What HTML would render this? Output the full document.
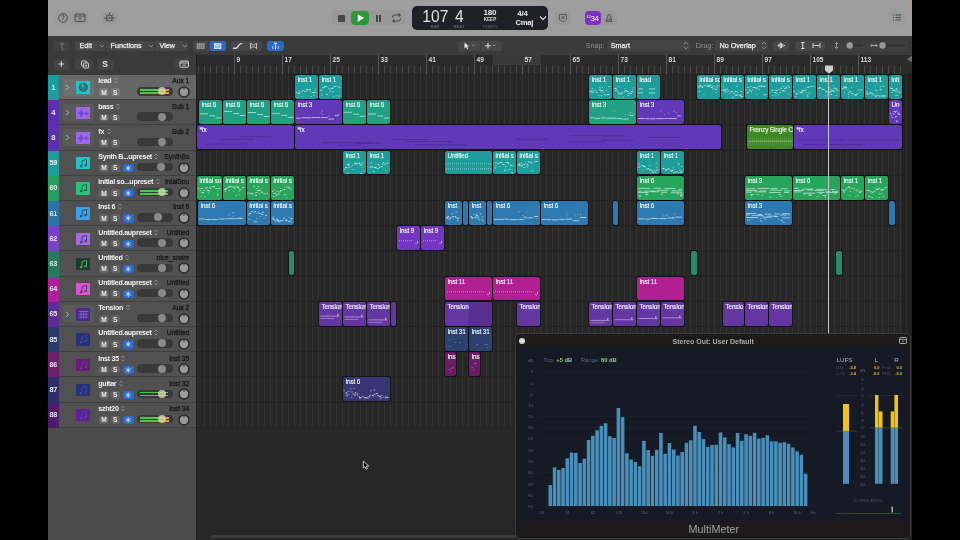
<!DOCTYPE html><html><head><meta charset="utf-8"><style>
*{margin:0;padding:0;box-sizing:border-box}
html,body{width:960px;height:540px;overflow:hidden;background:#000;font-family:"Liberation Sans", sans-serif}
.a{position:absolute}
.t{position:absolute;white-space:nowrap;line-height:1}
.reg{position:absolute;border-radius:2px;overflow:hidden;box-shadow:0 0 0 1px rgba(0,0,0,.5)}
.rl{position:absolute;left:2.4px;top:2.2px;font-size:6.4px;color:#f4f8f8;-webkit-text-stroke:0.12px #f4f8f8;letter-spacing:-0.12px;white-space:nowrap;line-height:1}
</style></head><body><div style="position:absolute;left:0;top:0;width:960px;height:540px;overflow:hidden;will-change:transform">

<div class="a" style="left:48px;top:0;width:864px;height:36px;background:#9e9e9e"></div>
<div class="a" style="left:906.5px;top:2.5px;width:3.2px;height:3.2px;border-radius:2px;background:#e8962a"></div>
<div class="a" style="left:54.5px;top:10.5px;width:33.0px;height:14.0px;background:#9a9a9a;border-radius:4px"></div>
<svg class="a" style="left:54px;top:10px" width="34" height="15" viewBox="0 0 34 15"><circle cx="9" cy="8" r="4.3" fill="none" stroke="#4a4a4a" stroke-width="1"/><text x="9" y="10.4" font-size="6.4" font-weight="bold" text-anchor="middle" fill="#4a4a4a" font-family="Liberation Sans">?</text><rect x="21" y="4" width="10" height="7.5" rx="1" fill="none" stroke="#4a4a4a" stroke-width="1"/><line x1="21" y1="6" x2="31" y2="6" stroke="#4a4a4a"/><path d="M24.5 8.5h3M26 7v3" stroke="#4a4a4a" stroke-width=".9"/></svg>
<div class="a" style="left:102px;top:10.5px;width:16px;height:14.0px;background:#9a9a9a;border-radius:4px"></div>
<svg class="a" style="left:102px;top:10px" width="16" height="15" viewBox="0 0 16 15"><circle cx="7.4" cy="8" r="3" fill="none" stroke="#4a4a4a" stroke-width="1"/><path d="M2.2 8h10.4M7.4 3v1.6M3.9 4.6l1 1M10.9 4.6l-1 1M3.9 11.4l1-1M10.9 11.4l-1-1" stroke="#4a4a4a" stroke-width="1" stroke-linecap="round"/></svg>
<div class="a" style="left:331.5px;top:10px;width:74.5px;height:15px;background:#989898;border-radius:5px"></div>
<div class="a" style="left:338px;top:15px;width:6.5px;height:6.5px;background:#444;border-radius:1px"></div>
<div class="a" style="left:351px;top:11px;width:18px;height:13.5px;background:#2f9a35;border-radius:4px"></div>
<svg class="a" style="left:351px;top:11px" width="18" height="14" viewBox="0 0 18 14"><path d="M6.8 3.3v7.4l6.2-3.7z" fill="#fff"/></svg>
<div class="a" style="left:375.8px;top:15px;width:1.8px;height:6.5px;background:#444"></div><div class="a" style="left:379px;top:15px;width:1.8px;height:6.5px;background:#444"></div>
<svg class="a" style="left:390px;top:12px" width="13" height="12" viewBox="0 0 13 12"><path d="M2.5 5.5a2.5 2.5 0 0 1 2.5-2.5h5M8.5 1.5l1.7 1.5-1.7 1.5M10.5 6.5a2.5 2.5 0 0 1-2.5 2.5h-5M4.5 10.5l-1.7-1.5 1.7-1.5" fill="none" stroke="#474747" stroke-width="1.1"/></svg>
<div class="a" style="left:412px;top:6px;width:135.5px;height:24px;background:#1e2127;border-radius:5px"></div>
<div class="t" style="left:422.3px;top:9px;font-size:15.6px;color:#dfe2e6">107</div>
<div class="t" style="left:455px;top:9px;font-size:15.6px;color:#dfe2e6">4</div>
<div class="t" style="left:428px;width:14px;text-align:center;top:24.6px;font-size:4.2px;color:#5e6268;font-weight:bold">BAR</div>
<div class="t" style="left:452px;width:14px;text-align:center;top:24.6px;font-size:4.2px;color:#5e6268;font-weight:bold">BEAT</div>
<div class="t" style="left:483.6px;top:9.4px;font-size:8px;color:#eaeaea;font-weight:bold;letter-spacing:-0.2px">180</div>
<div class="t" style="left:480px;width:20px;text-align:center;top:18.2px;font-size:4.6px;color:#d8d8d8;font-weight:bold">KEEP</div>
<div class="t" style="left:480px;width:20px;text-align:center;top:24.6px;font-size:4.3px;color:#50545a;font-weight:bold">TEMPO</div>
<div class="t" style="left:517.3px;top:9.6px;font-size:7.8px;color:#eaeaea;font-weight:bold;letter-spacing:-0.2px">4/4</div>
<div class="t" style="left:515.6px;top:19.3px;font-size:7.6px;color:#f0f0f0;font-weight:bold;letter-spacing:-0.3px">Cmaj</div>
<svg class="a" style="left:539px;top:15px" width="8" height="6" viewBox="0 0 8 6"><path d="M1 1.5l3 3 3-3" fill="none" stroke="#ddd" stroke-width="1.1"/></svg>
<div class="a" style="left:555px;top:11px;width:16px;height:14px;background:#989898;border-radius:4px"></div>
<svg class="a" style="left:555px;top:11px" width="16" height="14" viewBox="0 0 16 14"><path d="M4.5 3.5h7v5l-3.5 2.5-3.5-2.5z" fill="none" stroke="#555" stroke-width=".9"/><path d="M6.5 5l3 3M9.5 5l-3 3" stroke="#555" stroke-width=".9"/></svg>
<div class="a" style="left:584.5px;top:11px;width:32.5px;height:14px;background:#989898;border-radius:4px"></div>
<div class="a" style="left:584.5px;top:11px;width:16.5px;height:14px;background:#7f30c0;border-radius:4px"></div>
<div class="t" style="left:586.5px;top:14.5px;font-size:8px;color:#fff;letter-spacing:-0.6px"><span style="font-size:4px;vertical-align:top;letter-spacing:-.2px">12</span>34</div>
<svg class="a" style="left:601px;top:11px" width="16" height="14" viewBox="0 0 16 14"><path d="M5 10.5l2.3-7h1.4l2.3 7z" fill="none" stroke="#505050" stroke-width=".9"/><path d="M8 9l3-3.5M5.5 9h5" stroke="#505050" stroke-width=".9"/></svg>
<div class="a" style="left:889px;top:10.5px;width:15.5px;height:14.0px;background:#9a9a9a;border-radius:4px"></div>
<svg class="a" style="left:889px;top:10px" width="16" height="15" viewBox="0 0 16 15"><path d="M4 5h1M4 7.5h1M4 10h1M6.5 5h5.5M6.5 7.5h5.5M6.5 10h5.5" stroke="#4a4a4a" stroke-width="1"/></svg>
<div class="a" style="left:48px;top:36px;width:864px;height:18.5px;background:#3b3b3b"></div>
<div class="a" style="left:54px;top:40.5px;width:16px;height:10.0px;background:#424242;border-radius:3px"></div>
<svg class="a" style="left:54px;top:40px" width="16" height="11" viewBox="0 0 16 11"><path d="M8 9V3M5.8 5L8 2.6 10.2 5M8 9l1.5.8" fill="none" stroke="#7a7a7a" stroke-width="1"/></svg>
<div class="a" style="left:75px;top:40.5px;width:113px;height:10.0px;background:#474747;border-radius:3px"></div>
<div class="a" style="left:105px;top:40.5px;width:1px;height:10px;background:#3b3b3b"></div><div class="a" style="left:154px;top:40.5px;width:1px;height:10px;background:#3b3b3b"></div>
<div class="t" style="left:79.5px;top:42.3px;font-size:7.2px;color:#ececec;-webkit-text-stroke:0.25px #ececec">Edit</div>
<div class="t" style="left:110.5px;top:42.3px;font-size:7.2px;color:#ececec;-webkit-text-stroke:0.25px #ececec">Functions</div>
<div class="t" style="left:159.5px;top:42.3px;font-size:7.2px;color:#ececec;-webkit-text-stroke:0.25px #ececec">View</div>
<svg class="a" style="left:98.5px;top:44px" width="6" height="4" viewBox="0 0 6 4"><path d="M1 1l2 2 2-2" fill="none" stroke="#9a9a9a" stroke-width=".8"/></svg>
<svg class="a" style="left:147.5px;top:44px" width="6" height="4" viewBox="0 0 6 4"><path d="M1 1l2 2 2-2" fill="none" stroke="#9a9a9a" stroke-width=".8"/></svg>
<svg class="a" style="left:182px;top:44px" width="6" height="4" viewBox="0 0 6 4"><path d="M1 1l2 2 2-2" fill="none" stroke="#9a9a9a" stroke-width=".8"/></svg>
<div class="a" style="left:193px;top:40.5px;width:33px;height:10.0px;background:#474747;border-radius:3px"></div>
<div class="a" style="left:210px;top:40.5px;width:16px;height:10.0px;background:#2c68c8;border-radius:3px"></div>
<svg class="a" style="left:193px;top:40px" width="33" height="11" viewBox="0 0 33 11"><rect x="3.8" y="3.2" width="7.8" height="5.7" fill="#a8a8a8"/><path d="M3.8 5.1h7.8M3.8 7h7.8M5.75 3.2v5.7M7.7 3.2v5.7M9.65 3.2v5.7" stroke="#474747" stroke-width=".45"/><rect x="21" y="3.2" width="7.3" height="5.8" fill="#e8eef8"/><path d="M21 6.2h7.3" stroke="#2c68c8" stroke-width=".6"/><path d="M22.3 4.7h1.5M24.8 4.7h2.2M22 7.7h5" stroke="#2c68c8" stroke-width=".5"/></svg>
<div class="a" style="left:231px;top:40.5px;width:31px;height:10.0px;background:#474747;border-radius:3px"></div>
<svg class="a" style="left:231px;top:40px" width="31" height="11" viewBox="0 0 31 11"><path d="M2.5 8.3h2.3c1.6 0 2.5-3.3 4.3-4.3.5-.3 1.2-.4 1.8-.4" fill="none" stroke="#d8d8d8" stroke-width="1.4" stroke-linecap="round"/><path d="M19.5 3.2c2 2.4 4 2.4 6 0M19.5 8.6c2-2.4 4-2.4 6 0M19.5 3v5.6M25.5 3v5.6" fill="none" stroke="#d0d0d0" stroke-width=".9"/></svg>
<div class="a" style="left:267px;top:40.5px;width:17px;height:10.0px;background:#2c68c8;border-radius:3px"></div>
<svg class="a" style="left:267px;top:40px" width="17" height="11" viewBox="0 0 17 11"><path d="M6.8 2.8h3.4L8.5 5z" fill="#fff"/><path d="M8.5 4.5v5M6.2 5.8c-.8.9-.8 2.3 0 3.2M10.8 5.8c.8.9.8 2.3 0 3.2" fill="none" stroke="#fff" stroke-width=".8"/></svg>
<div class="a" style="left:458px;top:40.5px;width:43.5px;height:10.0px;background:#474747;border-radius:3px"></div>
<div class="a" style="left:479.5px;top:40.5px;width:1px;height:10px;background:#3b3b3b"></div>
<svg class="a" style="left:458px;top:40px" width="44" height="11" viewBox="0 0 44 11"><path d="M6.5 2.5v6l1.5-1.5 1.2 2.3 1-.5-1.2-2.2h2.2z" fill="#e8e8e8"/><path d="M14 4.5l1.5 1.5 1.5-1.5M34.5 4.5l1.5 1.5 1.5-1.5" fill="none" stroke="#9a9a9a" stroke-width=".8"/><path d="M30 3v5.5M27.2 5.7h5.6" stroke="#d8d8d8" stroke-width="1.1"/></svg>
<div class="t" style="left:585.8px;top:42.3px;font-size:7.2px;color:#8e8e8e">Snap:</div>
<div class="a" style="left:606.5px;top:40px;width:83.5px;height:11px;background:#444444;border-radius:3px"></div>
<div class="t" style="left:610.8px;top:42.3px;font-size:7.2px;color:#ececec;-webkit-text-stroke:0.25px #ececec">Smart</div>
<div class="t" style="left:695.8px;top:42.3px;font-size:7.2px;color:#8e8e8e">Drag:</div>
<div class="a" style="left:715.3px;top:40px;width:53.0px;height:11px;background:#444444;border-radius:3px"></div>
<div class="t" style="left:719.5px;top:42.3px;font-size:7.2px;color:#ececec;-webkit-text-stroke:0.25px #ececec">No Overlap</div>
<svg class="a" style="left:682.5px;top:41px" width="6" height="9" viewBox="0 0 6 9"><path d="M1 3.2l2-2 2 2M1 5.8l2 2 2-2" fill="none" stroke="#a8a8a8" stroke-width=".8"/></svg>
<svg class="a" style="left:760.5px;top:41px" width="6" height="9" viewBox="0 0 6 9"><path d="M1 3.2l2-2 2 2M1 5.8l2 2 2-2" fill="none" stroke="#a8a8a8" stroke-width=".8"/></svg>
<div class="a" style="left:773px;top:40.5px;width:15.5px;height:10.0px;background:#474747;border-radius:3px"></div>
<svg class="a" style="left:773px;top:40px" width="16" height="11" viewBox="0 0 16 11"><path d="M4.5 5.5h1M6 4v3M7.3 2.5v6M8.6 3v5M9.9 4v3M11 5.5h1" stroke="#e0e0e0" stroke-width="1"/></svg>
<div class="a" style="left:794.5px;top:40.5px;width:30.5px;height:10.0px;background:#474747;border-radius:3px"></div>
<svg class="a" style="left:794px;top:40px" width="31" height="11" viewBox="0 0 31 11"><path d="M7 2.5h3.5M8.75 2.5v6M7 8.5h3.5" stroke="#e0e0e0" stroke-width="1"/><path d="M19 3v5M26 3v5M19.5 5.5h6" stroke="#d0d0d0" stroke-width="1"/></svg>
<div class="a" style="left:830.5px;top:40.5px;width:77.5px;height:10.0px;background:#3f3f3f;border-radius:3px"></div>
<div class="a" style="left:865px;top:40.5px;width:1px;height:10px;background:#383838"></div>
<svg class="a" style="left:830px;top:40px" width="78" height="11" viewBox="0 0 78 11"><path d="M6.5 2.5v6M5 4l1.5-1.5L8 4M5 7l1.5 1.5L8 7" fill="none" stroke="#aaa" stroke-width=".8"/><line x1="16" y1="5.5" x2="33" y2="5.5" stroke="#2e2e2e" stroke-width="1.5"/><circle cx="19.7" cy="5.5" r="3.2" fill="#9a9a9a"/><path d="M41 5.5h6M42.3 4l-1.5 1.5 1.5 1.5M45.7 4l1.5 1.5-1.5 1.5" fill="none" stroke="#bbb" stroke-width=".8"/><line x1="50" y1="5.5" x2="75" y2="5.5" stroke="#2e2e2e" stroke-width="1.5"/><circle cx="52.5" cy="5.5" r="3.2" fill="#9a9a9a"/></svg>
<div class="a" style="left:48px;top:54.5px;width:148px;height:20.5px;background:#3b3b3b"></div>
<div class="a" style="left:53.5px;top:59px;width:15.5px;height:10.5px;background:#444444;border-radius:3px"></div>
<div class="a" style="left:75.3px;top:59px;width:16.400000000000006px;height:10.5px;background:#444444;border-radius:3px"></div>
<div class="a" style="left:97.7px;top:59px;width:16.299999999999997px;height:10.5px;background:#444444;border-radius:3px"></div>
<div class="a" style="left:174.6px;top:59px;width:14.800000000000011px;height:10.5px;background:#444444;border-radius:3px"></div>
<svg class="a" style="left:53px;top:58px" width="140" height="12" viewBox="0 0 140 12"><path d="M8.3 3.2v5.6M5.5 6h5.6" stroke="#ddd" stroke-width="1.1"/><rect x="28.5" y="3" width="5" height="5" rx="1" fill="none" stroke="#ddd" stroke-width=".9"/><rect x="30.5" y="5" width="5" height="5" rx="1" fill="#444" stroke="#ddd" stroke-width=".9"/><path d="M33 6.3v2.6M31.7 7.6h2.6" stroke="#ddd" stroke-width=".7"/><rect x="127" y="3.2" width="8.5" height="6" rx=".8" fill="none" stroke="#ddd" stroke-width=".9"/><path d="M127 5h8.5M129.7 7.2h3" stroke="#ddd" stroke-width=".8"/></svg>
<div class="t" style="left:102.3px;top:60.3px;font-size:8.4px;font-weight:bold;color:#e8e8e8">S</div>
<div class="a" style="left:48px;top:75px;width:148px;height:465px;background:#4c4c4c"></div>
<div class="a" style="left:48px;top:75.00px;width:148px;height:25.20px;background:#666666"></div>
<div class="a" style="left:58.5px;top:99.20px;width:137.5px;height:1px;background:#404040"></div>
<div class="a" style="left:48px;top:75.00px;width:10.5px;height:25.20px;background:#199c9c"></div>
<div class="t" style="left:48px;width:10.5px;text-align:center;top:83.60px;font-size:7.6px;font-weight:bold;color:#e8e8e8;letter-spacing:-0.3px">1</div>
<div class="a" style="left:63px;top:78.5px;width:30.5px;height:17.0px;background:#6e6e6e;border-radius:3px"></div>
<svg class="a" style="left:65px;top:84.00px" width="5" height="7" viewBox="0 0 5 7"><path d="M1.2 1l2.5 2.5-2.5 2.5" fill="none" stroke="#cfcfcf" stroke-width=".8"/></svg>
<div class="a" style="left:75.8px;top:81.30px;width:14.6px;height:12.6px;background:#1fc3c8;border-radius:1px"></div>
<svg class="a" style="left:75.8px;top:81.30px" width="15" height="13" viewBox="0 0 15 13"><circle cx="7.3" cy="6.3" r="4.2" fill="#2f7a7e" stroke="#24585c" stroke-width=".8"/><path d="M7.3 6.3L6.2 3" stroke="#7fd8dc" stroke-width=".9"/></svg>
<div class="t" style="left:98.3px;top:77.30px;font-size:7.1px;color:#f4f4f4;font-weight:bold;letter-spacing:-0.28px">lead<svg style="margin-left:2.5px;vertical-align:-1.3px" width="4" height="7" viewBox="0 0 4 7"><path d="M0.6 2.6L2 1.2l1.4 1.4M0.6 4.4L2 5.8l1.4-1.4" fill="none" stroke="#bdbdbd" stroke-width=".7"/></svg></div>
<span id="nm0"></span>
<div class="t" style="right:770.7px;top:78.30px;font-size:6.8px;color:#1a1a1a;-webkit-text-stroke:0.3px #1a1a1a;letter-spacing:-0.05px">Aux 1</div>
<div class="a" style="left:99.2px;top:88.4px;width:9.799999999999997px;height:7.799999999999997px;background:#787878;border-radius:2px"></div>
<div class="a" style="left:110.5px;top:88.4px;width:9.299999999999997px;height:7.799999999999997px;background:#787878;border-radius:2px"></div>
<div class="t" style="left:99.2px;width:9.8px;text-align:center;top:89.70px;font-size:6.6px;font-weight:bold;color:#ececec">M</div>
<div class="t" style="left:110.5px;width:9.3px;text-align:center;top:89.70px;font-size:6.6px;font-weight:bold;color:#ececec">S</div>
<div class="a" style="left:136.7px;top:87.10px;width:36.2px;height:8.6px;border-radius:4.3px;background:#393939"></div>
<div class="a" style="left:140px;top:89.10px;width:28px;height:1.9px;background:#48cc44"></div>
<div class="a" style="left:140px;top:92.10px;width:28px;height:1.9px;background:#48cc44"></div>
<div class="a" style="left:160px;top:89.10px;width:8.5px;height:1.9px;background:#e8a020"></div>
<div class="a" style="left:160px;top:92.10px;width:8.5px;height:1.9px;background:#e8a020"></div>
<div class="a" style="left:157.50px;top:87.30px;width:8.2px;height:8.2px;border-radius:50%;background:#d8d8b0;opacity:0.8"></div>
<svg class="a" style="left:176.6px;top:84.90px" width="14" height="14" viewBox="0 0 14 14"><circle cx="7" cy="7" r="5" fill="#9a9a9a" stroke="#2a2a2a" stroke-width="1.6"/><path d="M7 3v1.8" stroke="#2a2a2a" stroke-width="1"/></svg>
<div class="a" style="left:48px;top:100.20px;width:148px;height:25.20px;background:#515151"></div>
<div class="a" style="left:58.5px;top:124.40px;width:137.5px;height:1px;background:#404040"></div>
<div class="a" style="left:48px;top:100.20px;width:10.5px;height:25.20px;background:#5c2fae"></div>
<div class="t" style="left:48px;width:10.5px;text-align:center;top:108.80px;font-size:7.6px;font-weight:bold;color:#e8e8e8;letter-spacing:-0.3px">4</div>
<div class="a" style="left:63px;top:103.7px;width:30.5px;height:17.0px;background:#5a5a5a;border-radius:3px"></div>
<svg class="a" style="left:65px;top:109.20px" width="5" height="7" viewBox="0 0 5 7"><path d="M1.2 1l2.5 2.5-2.5 2.5" fill="none" stroke="#cfcfcf" stroke-width=".8"/></svg>
<div class="a" style="left:75.8px;top:106.50px;width:14.6px;height:12.6px;background:#9a6ae8;border-radius:1px"></div>
<svg class="a" style="left:75.8px;top:106.50px" width="15" height="13" viewBox="0 0 15 13"><path d="M1.5 6.3h11.5" stroke="#7040c8" stroke-width=".7"/><path d="M5 2.3l2.6 4-2.6 4-2.6-4z M10.5 3.3l1.6 3-1.6 3-1.6-3z" fill="#7444cc" fill-opacity=".85"/></svg>
<div class="t" style="left:98.3px;top:102.50px;font-size:7.1px;color:#f4f4f4;font-weight:bold;letter-spacing:-0.28px">bass<svg style="margin-left:2.5px;vertical-align:-1.3px" width="4" height="7" viewBox="0 0 4 7"><path d="M0.6 2.6L2 1.2l1.4 1.4M0.6 4.4L2 5.8l1.4-1.4" fill="none" stroke="#bdbdbd" stroke-width=".7"/></svg></div>
<span id="nm1"></span>
<div class="t" style="right:770.7px;top:103.50px;font-size:6.8px;color:#1a1a1a;-webkit-text-stroke:0.3px #1a1a1a;letter-spacing:-0.05px">Sub 1</div>
<div class="a" style="left:99.2px;top:113.60000000000001px;width:9.799999999999997px;height:7.799999999999997px;background:#636363;border-radius:2px"></div>
<div class="a" style="left:110.5px;top:113.60000000000001px;width:9.299999999999997px;height:7.799999999999997px;background:#636363;border-radius:2px"></div>
<div class="t" style="left:99.2px;width:9.8px;text-align:center;top:114.90px;font-size:6.6px;font-weight:bold;color:#ececec">M</div>
<div class="t" style="left:110.5px;width:9.3px;text-align:center;top:114.90px;font-size:6.6px;font-weight:bold;color:#ececec">S</div>
<div class="a" style="left:136.7px;top:112.30px;width:36.2px;height:8.6px;border-radius:4.3px;background:#393939"></div>
<div class="a" style="left:157.50px;top:112.50px;width:8.2px;height:8.2px;border-radius:50%;background:#8a8a8a;opacity:1"></div>
<div class="a" style="left:48px;top:125.40px;width:148px;height:25.20px;background:#515151"></div>
<div class="a" style="left:58.5px;top:149.60px;width:137.5px;height:1px;background:#404040"></div>
<div class="a" style="left:48px;top:125.40px;width:10.5px;height:25.20px;background:#5c2fae"></div>
<div class="t" style="left:48px;width:10.5px;text-align:center;top:134.00px;font-size:7.6px;font-weight:bold;color:#e8e8e8;letter-spacing:-0.3px">8</div>
<div class="a" style="left:63px;top:128.9px;width:30.5px;height:17.0px;background:#5a5a5a;border-radius:3px"></div>
<svg class="a" style="left:65px;top:134.40px" width="5" height="7" viewBox="0 0 5 7"><path d="M1.2 1l2.5 2.5-2.5 2.5" fill="none" stroke="#cfcfcf" stroke-width=".8"/></svg>
<div class="a" style="left:75.8px;top:131.70px;width:14.6px;height:12.6px;background:#9a6ae8;border-radius:1px"></div>
<svg class="a" style="left:75.8px;top:131.70px" width="15" height="13" viewBox="0 0 15 13"><path d="M1.5 6.3h11.5" stroke="#7040c8" stroke-width=".7"/><path d="M5 2.3l2.6 4-2.6 4-2.6-4z M10.5 3.3l1.6 3-1.6 3-1.6-3z" fill="#7444cc" fill-opacity=".85"/></svg>
<div class="t" style="left:98.3px;top:127.70px;font-size:7.1px;color:#f4f4f4;font-weight:bold;letter-spacing:-0.28px">fx<svg style="margin-left:2.5px;vertical-align:-1.3px" width="4" height="7" viewBox="0 0 4 7"><path d="M0.6 2.6L2 1.2l1.4 1.4M0.6 4.4L2 5.8l1.4-1.4" fill="none" stroke="#bdbdbd" stroke-width=".7"/></svg></div>
<span id="nm2"></span>
<div class="t" style="right:770.7px;top:128.70px;font-size:6.8px;color:#1a1a1a;-webkit-text-stroke:0.3px #1a1a1a;letter-spacing:-0.05px">Sub 2</div>
<div class="a" style="left:99.2px;top:138.8px;width:9.799999999999997px;height:7.799999999999983px;background:#636363;border-radius:2px"></div>
<div class="a" style="left:110.5px;top:138.8px;width:9.299999999999997px;height:7.799999999999983px;background:#636363;border-radius:2px"></div>
<div class="t" style="left:99.2px;width:9.8px;text-align:center;top:140.10px;font-size:6.6px;font-weight:bold;color:#ececec">M</div>
<div class="t" style="left:110.5px;width:9.3px;text-align:center;top:140.10px;font-size:6.6px;font-weight:bold;color:#ececec">S</div>
<div class="a" style="left:136.7px;top:137.50px;width:36.2px;height:8.6px;border-radius:4.3px;background:#393939"></div>
<div class="a" style="left:157.50px;top:137.70px;width:8.2px;height:8.2px;border-radius:50%;background:#8a8a8a;opacity:1"></div>
<div class="a" style="left:48px;top:150.60px;width:148px;height:25.20px;background:#515151"></div>
<div class="a" style="left:58.5px;top:174.80px;width:137.5px;height:1px;background:#404040"></div>
<div class="a" style="left:48px;top:150.60px;width:10.5px;height:25.20px;background:#199c9c"></div>
<div class="t" style="left:48px;width:10.5px;text-align:center;top:159.20px;font-size:7.2px;font-weight:bold;color:#e8e8e8;letter-spacing:-0.3px">59</div>
<div class="a" style="left:75.8px;top:156.90px;width:14.6px;height:12.6px;background:#1fc3c8;border-radius:1px"></div>
<svg class="a" style="left:75.8px;top:156.90px" width="15" height="13" viewBox="0 0 15 13"><path d="M6 9.2V3.5l4.5-1v5.5" fill="none" stroke="#183a3a" stroke-width=".9" stroke-opacity=".8"/><ellipse cx="5" cy="9.3" rx="1.3" ry="1" fill="#183a3a" fill-opacity=".8"/><ellipse cx="9.5" cy="8.3" rx="1.3" ry="1" fill="#183a3a" fill-opacity=".8"/></svg>
<div class="t" style="left:98.3px;top:152.90px;font-size:7.1px;color:#f4f4f4;font-weight:bold;letter-spacing:-0.28px">Synth B...upreset<svg style="margin-left:2.5px;vertical-align:-1.3px" width="4" height="7" viewBox="0 0 4 7"><path d="M0.6 2.6L2 1.2l1.4 1.4M0.6 4.4L2 5.8l1.4-1.4" fill="none" stroke="#bdbdbd" stroke-width=".7"/></svg></div>
<span id="nm3"></span>
<div class="t" style="right:770.7px;top:153.90px;font-size:6.8px;color:#1a1a1a;-webkit-text-stroke:0.3px #1a1a1a;letter-spacing:-0.05px">SynthBs</div>
<div class="a" style="left:99.2px;top:164.0px;width:9.799999999999997px;height:7.799999999999983px;background:#636363;border-radius:2px"></div>
<div class="a" style="left:110.5px;top:164.0px;width:9.299999999999997px;height:7.799999999999983px;background:#636363;border-radius:2px"></div>
<div class="t" style="left:99.2px;width:9.8px;text-align:center;top:165.30px;font-size:6.6px;font-weight:bold;color:#ececec">M</div>
<div class="t" style="left:110.5px;width:9.3px;text-align:center;top:165.30px;font-size:6.6px;font-weight:bold;color:#ececec">S</div>
<div class="a" style="left:123.2px;top:164.0px;width:10.399999999999991px;height:8.199999999999989px;background:#2a6ad0;border-radius:2px"></div>
<svg class="a" style="left:123.2px;top:164.00px" width="10.4" height="8.2" viewBox="0 0 10.4 8.2"><path d="M5.2 1.3v5.6M2.8 2.7l4.8 2.8M2.8 5.5l4.8-2.8" stroke="#dce8ff" stroke-width=".8"/></svg>
<div class="a" style="left:136.7px;top:162.70px;width:36.2px;height:8.6px;border-radius:4.3px;background:#393939"></div>
<div class="a" style="left:156.60px;top:162.90px;width:8.2px;height:8.2px;border-radius:50%;background:#8a8a8a;opacity:1"></div>
<svg class="a" style="left:176.6px;top:160.50px" width="14" height="14" viewBox="0 0 14 14"><circle cx="7" cy="7" r="5" fill="#9a9a9a" stroke="#2a2a2a" stroke-width="1.6"/><path d="M7 3v1.8" stroke="#2a2a2a" stroke-width="1"/></svg>
<div class="a" style="left:48px;top:175.80px;width:148px;height:25.20px;background:#515151"></div>
<div class="a" style="left:58.5px;top:200.00px;width:137.5px;height:1px;background:#404040"></div>
<div class="a" style="left:48px;top:175.80px;width:10.5px;height:25.20px;background:#26a060"></div>
<div class="t" style="left:48px;width:10.5px;text-align:center;top:184.40px;font-size:7.2px;font-weight:bold;color:#e8e8e8;letter-spacing:-0.3px">60</div>
<div class="a" style="left:75.8px;top:182.10px;width:14.6px;height:12.6px;background:#2ac47a;border-radius:1px"></div>
<svg class="a" style="left:75.8px;top:182.10px" width="15" height="13" viewBox="0 0 15 13"><path d="M6 9.2V3.5l4.5-1v5.5" fill="none" stroke="#183a3a" stroke-width=".9" stroke-opacity=".8"/><ellipse cx="5" cy="9.3" rx="1.3" ry="1" fill="#183a3a" fill-opacity=".8"/><ellipse cx="9.5" cy="8.3" rx="1.3" ry="1" fill="#183a3a" fill-opacity=".8"/></svg>
<div class="t" style="left:98.3px;top:178.10px;font-size:7.1px;color:#f4f4f4;font-weight:bold;letter-spacing:-0.28px">initial so...upreset<svg style="margin-left:2.5px;vertical-align:-1.3px" width="4" height="7" viewBox="0 0 4 7"><path d="M0.6 2.6L2 1.2l1.4 1.4M0.6 4.4L2 5.8l1.4-1.4" fill="none" stroke="#bdbdbd" stroke-width=".7"/></svg></div>
<span id="nm4"></span>
<div class="t" style="right:770.7px;top:179.10px;font-size:6.8px;color:#1a1a1a;-webkit-text-stroke:0.3px #1a1a1a;letter-spacing:-0.05px">intalSou</div>
<div class="a" style="left:99.2px;top:189.20000000000002px;width:9.799999999999997px;height:7.799999999999983px;background:#636363;border-radius:2px"></div>
<div class="a" style="left:110.5px;top:189.20000000000002px;width:9.299999999999997px;height:7.799999999999983px;background:#636363;border-radius:2px"></div>
<div class="t" style="left:99.2px;width:9.8px;text-align:center;top:190.50px;font-size:6.6px;font-weight:bold;color:#ececec">M</div>
<div class="t" style="left:110.5px;width:9.3px;text-align:center;top:190.50px;font-size:6.6px;font-weight:bold;color:#ececec">S</div>
<div class="a" style="left:123.2px;top:189.20000000000002px;width:10.399999999999991px;height:8.199999999999989px;background:#2a6ad0;border-radius:2px"></div>
<svg class="a" style="left:123.2px;top:189.20px" width="10.4" height="8.2" viewBox="0 0 10.4 8.2"><path d="M5.2 1.3v5.6M2.8 2.7l4.8 2.8M2.8 5.5l4.8-2.8" stroke="#dce8ff" stroke-width=".8"/></svg>
<div class="a" style="left:136.7px;top:187.90px;width:36.2px;height:8.6px;border-radius:4.3px;background:#393939"></div>
<div class="a" style="left:140px;top:189.90px;width:28px;height:1.9px;background:#48cc44"></div>
<div class="a" style="left:140px;top:192.90px;width:28px;height:1.9px;background:#48cc44"></div>
<div class="a" style="left:157.50px;top:188.10px;width:8.2px;height:8.2px;border-radius:50%;background:#d8d8b0;opacity:0.8"></div>
<svg class="a" style="left:176.6px;top:185.70px" width="14" height="14" viewBox="0 0 14 14"><circle cx="7" cy="7" r="5" fill="#9a9a9a" stroke="#2a2a2a" stroke-width="1.6"/><path d="M7 3v1.8" stroke="#2a2a2a" stroke-width="1"/></svg>
<div class="a" style="left:48px;top:201.00px;width:148px;height:25.20px;background:#515151"></div>
<div class="a" style="left:58.5px;top:225.20px;width:137.5px;height:1px;background:#404040"></div>
<div class="a" style="left:48px;top:201.00px;width:10.5px;height:25.20px;background:#2b72aa"></div>
<div class="t" style="left:48px;width:10.5px;text-align:center;top:209.60px;font-size:7.2px;font-weight:bold;color:#e8e8e8;letter-spacing:-0.3px">61</div>
<div class="a" style="left:75.8px;top:207.30px;width:14.6px;height:12.6px;background:#3aa0e8;border-radius:1px"></div>
<svg class="a" style="left:75.8px;top:207.30px" width="15" height="13" viewBox="0 0 15 13"><path d="M6 9.2V3.5l4.5-1v5.5" fill="none" stroke="#183a3a" stroke-width=".9" stroke-opacity=".8"/><ellipse cx="5" cy="9.3" rx="1.3" ry="1" fill="#183a3a" fill-opacity=".8"/><ellipse cx="9.5" cy="8.3" rx="1.3" ry="1" fill="#183a3a" fill-opacity=".8"/></svg>
<div class="t" style="left:98.3px;top:203.30px;font-size:7.1px;color:#f4f4f4;font-weight:bold;letter-spacing:-0.28px">Inst 6<svg style="margin-left:2.5px;vertical-align:-1.3px" width="4" height="7" viewBox="0 0 4 7"><path d="M0.6 2.6L2 1.2l1.4 1.4M0.6 4.4L2 5.8l1.4-1.4" fill="none" stroke="#bdbdbd" stroke-width=".7"/></svg></div>
<span id="nm5"></span>
<div class="t" style="right:770.7px;top:204.30px;font-size:6.8px;color:#1a1a1a;-webkit-text-stroke:0.3px #1a1a1a;letter-spacing:-0.05px">Inst 6</div>
<div class="a" style="left:99.2px;top:214.4px;width:9.799999999999997px;height:7.799999999999983px;background:#636363;border-radius:2px"></div>
<div class="a" style="left:110.5px;top:214.4px;width:9.299999999999997px;height:7.799999999999983px;background:#636363;border-radius:2px"></div>
<div class="t" style="left:99.2px;width:9.8px;text-align:center;top:215.70px;font-size:6.6px;font-weight:bold;color:#ececec">M</div>
<div class="t" style="left:110.5px;width:9.3px;text-align:center;top:215.70px;font-size:6.6px;font-weight:bold;color:#ececec">S</div>
<div class="a" style="left:123.2px;top:214.4px;width:10.399999999999991px;height:8.199999999999989px;background:#2a6ad0;border-radius:2px"></div>
<svg class="a" style="left:123.2px;top:214.40px" width="10.4" height="8.2" viewBox="0 0 10.4 8.2"><path d="M5.2 1.3v5.6M2.8 2.7l4.8 2.8M2.8 5.5l4.8-2.8" stroke="#dce8ff" stroke-width=".8"/></svg>
<div class="a" style="left:136.7px;top:213.10px;width:36.2px;height:8.6px;border-radius:4.3px;background:#393939"></div>
<div class="a" style="left:154.20px;top:213.30px;width:8.2px;height:8.2px;border-radius:50%;background:#8a8a8a;opacity:1"></div>
<svg class="a" style="left:176.6px;top:210.90px" width="14" height="14" viewBox="0 0 14 14"><circle cx="7" cy="7" r="5" fill="#9a9a9a" stroke="#2a2a2a" stroke-width="1.6"/><path d="M7 3v1.8" stroke="#2a2a2a" stroke-width="1"/></svg>
<div class="a" style="left:48px;top:226.20px;width:148px;height:25.20px;background:#515151"></div>
<div class="a" style="left:58.5px;top:250.40px;width:137.5px;height:1px;background:#404040"></div>
<div class="a" style="left:48px;top:226.20px;width:10.5px;height:25.20px;background:#7a40c8"></div>
<div class="t" style="left:48px;width:10.5px;text-align:center;top:234.80px;font-size:7.2px;font-weight:bold;color:#e8e8e8;letter-spacing:-0.3px">62</div>
<div class="a" style="left:75.8px;top:232.50px;width:14.6px;height:12.6px;background:#a46ae8;border-radius:1px"></div>
<svg class="a" style="left:75.8px;top:232.50px" width="15" height="13" viewBox="0 0 15 13"><path d="M6 9.2V3.5l4.5-1v5.5" fill="none" stroke="#183a3a" stroke-width=".9" stroke-opacity=".8"/><ellipse cx="5" cy="9.3" rx="1.3" ry="1" fill="#183a3a" fill-opacity=".8"/><ellipse cx="9.5" cy="8.3" rx="1.3" ry="1" fill="#183a3a" fill-opacity=".8"/></svg>
<div class="t" style="left:98.3px;top:228.50px;font-size:7.1px;color:#f4f4f4;font-weight:bold;letter-spacing:-0.28px">Untitled.aupreset<svg style="margin-left:2.5px;vertical-align:-1.3px" width="4" height="7" viewBox="0 0 4 7"><path d="M0.6 2.6L2 1.2l1.4 1.4M0.6 4.4L2 5.8l1.4-1.4" fill="none" stroke="#bdbdbd" stroke-width=".7"/></svg></div>
<span id="nm6"></span>
<div class="t" style="right:770.7px;top:229.50px;font-size:6.8px;color:#1a1a1a;-webkit-text-stroke:0.3px #1a1a1a;letter-spacing:-0.05px">Untitled</div>
<div class="a" style="left:99.2px;top:239.6px;width:9.799999999999997px;height:7.799999999999983px;background:#636363;border-radius:2px"></div>
<div class="a" style="left:110.5px;top:239.6px;width:9.299999999999997px;height:7.799999999999983px;background:#636363;border-radius:2px"></div>
<div class="t" style="left:99.2px;width:9.8px;text-align:center;top:240.90px;font-size:6.6px;font-weight:bold;color:#ececec">M</div>
<div class="t" style="left:110.5px;width:9.3px;text-align:center;top:240.90px;font-size:6.6px;font-weight:bold;color:#ececec">S</div>
<div class="a" style="left:123.2px;top:239.6px;width:10.399999999999991px;height:8.199999999999989px;background:#2a6ad0;border-radius:2px"></div>
<svg class="a" style="left:123.2px;top:239.60px" width="10.4" height="8.2" viewBox="0 0 10.4 8.2"><path d="M5.2 1.3v5.6M2.8 2.7l4.8 2.8M2.8 5.5l4.8-2.8" stroke="#dce8ff" stroke-width=".8"/></svg>
<div class="a" style="left:136.7px;top:238.30px;width:36.2px;height:8.6px;border-radius:4.3px;background:#393939"></div>
<div class="a" style="left:157.50px;top:238.50px;width:8.2px;height:8.2px;border-radius:50%;background:#8a8a8a;opacity:1"></div>
<svg class="a" style="left:176.6px;top:236.10px" width="14" height="14" viewBox="0 0 14 14"><circle cx="7" cy="7" r="5" fill="#9a9a9a" stroke="#2a2a2a" stroke-width="1.6"/><path d="M7 3v1.8" stroke="#2a2a2a" stroke-width="1"/></svg>
<div class="a" style="left:48px;top:251.40px;width:148px;height:25.20px;background:#515151"></div>
<div class="a" style="left:58.5px;top:275.60px;width:137.5px;height:1px;background:#404040"></div>
<div class="a" style="left:48px;top:251.40px;width:10.5px;height:25.20px;background:#267a5e"></div>
<div class="t" style="left:48px;width:10.5px;text-align:center;top:260.00px;font-size:7.2px;font-weight:bold;color:#e8e8e8;letter-spacing:-0.3px">63</div>
<div class="a" style="left:75.8px;top:257.70px;width:14.6px;height:12.6px;background:#1e3a2a;border-radius:1px"></div>
<svg class="a" style="left:75.8px;top:257.70px" width="15" height="13" viewBox="0 0 15 13"><path d="M6 9.2V3.5l4.5-1v5.5" fill="none" stroke="#4ed86a" stroke-width=".9" stroke-opacity=".8"/><ellipse cx="5" cy="9.3" rx="1.3" ry="1" fill="#4ed86a" fill-opacity=".8"/><ellipse cx="9.5" cy="8.3" rx="1.3" ry="1" fill="#4ed86a" fill-opacity=".8"/></svg>
<div class="t" style="left:98.3px;top:253.70px;font-size:7.1px;color:#f4f4f4;font-weight:bold;letter-spacing:-0.28px">Untitled<svg style="margin-left:2.5px;vertical-align:-1.3px" width="4" height="7" viewBox="0 0 4 7"><path d="M0.6 2.6L2 1.2l1.4 1.4M0.6 4.4L2 5.8l1.4-1.4" fill="none" stroke="#bdbdbd" stroke-width=".7"/></svg></div>
<span id="nm7"></span>
<div class="t" style="right:770.7px;top:254.70px;font-size:6.8px;color:#1a1a1a;-webkit-text-stroke:0.3px #1a1a1a;letter-spacing:-0.05px">nice_snare</div>
<div class="a" style="left:99.2px;top:264.8px;width:9.799999999999997px;height:7.800000000000011px;background:#636363;border-radius:2px"></div>
<div class="a" style="left:110.5px;top:264.8px;width:9.299999999999997px;height:7.800000000000011px;background:#636363;border-radius:2px"></div>
<div class="t" style="left:99.2px;width:9.8px;text-align:center;top:266.10px;font-size:6.6px;font-weight:bold;color:#ececec">M</div>
<div class="t" style="left:110.5px;width:9.3px;text-align:center;top:266.10px;font-size:6.6px;font-weight:bold;color:#ececec">S</div>
<div class="a" style="left:123.2px;top:264.8px;width:10.399999999999991px;height:8.199999999999989px;background:#2a6ad0;border-radius:2px"></div>
<svg class="a" style="left:123.2px;top:264.80px" width="10.4" height="8.2" viewBox="0 0 10.4 8.2"><path d="M5.2 1.3v5.6M2.8 2.7l4.8 2.8M2.8 5.5l4.8-2.8" stroke="#dce8ff" stroke-width=".8"/></svg>
<div class="a" style="left:136.7px;top:263.50px;width:36.2px;height:8.6px;border-radius:4.3px;background:#393939"></div>
<div class="a" style="left:157.50px;top:263.70px;width:8.2px;height:8.2px;border-radius:50%;background:#8a8a8a;opacity:1"></div>
<svg class="a" style="left:176.6px;top:261.30px" width="14" height="14" viewBox="0 0 14 14"><circle cx="7" cy="7" r="5" fill="#9a9a9a" stroke="#2a2a2a" stroke-width="1.6"/><path d="M7 3v1.8" stroke="#2a2a2a" stroke-width="1"/></svg>
<div class="a" style="left:48px;top:276.60px;width:148px;height:25.20px;background:#515151"></div>
<div class="a" style="left:58.5px;top:300.80px;width:137.5px;height:1px;background:#404040"></div>
<div class="a" style="left:48px;top:276.60px;width:10.5px;height:25.20px;background:#b0209a"></div>
<div class="t" style="left:48px;width:10.5px;text-align:center;top:285.20px;font-size:7.2px;font-weight:bold;color:#e8e8e8;letter-spacing:-0.3px">64</div>
<div class="a" style="left:75.8px;top:282.90px;width:14.6px;height:12.6px;background:#e050d8;border-radius:1px"></div>
<svg class="a" style="left:75.8px;top:282.90px" width="15" height="13" viewBox="0 0 15 13"><path d="M6 9.2V3.5l4.5-1v5.5" fill="none" stroke="#183a3a" stroke-width=".9" stroke-opacity=".8"/><ellipse cx="5" cy="9.3" rx="1.3" ry="1" fill="#183a3a" fill-opacity=".8"/><ellipse cx="9.5" cy="8.3" rx="1.3" ry="1" fill="#183a3a" fill-opacity=".8"/></svg>
<div class="t" style="left:98.3px;top:278.90px;font-size:7.1px;color:#f4f4f4;font-weight:bold;letter-spacing:-0.28px">Untitled.aupreset<svg style="margin-left:2.5px;vertical-align:-1.3px" width="4" height="7" viewBox="0 0 4 7"><path d="M0.6 2.6L2 1.2l1.4 1.4M0.6 4.4L2 5.8l1.4-1.4" fill="none" stroke="#bdbdbd" stroke-width=".7"/></svg></div>
<span id="nm8"></span>
<div class="t" style="right:770.7px;top:279.90px;font-size:6.8px;color:#1a1a1a;-webkit-text-stroke:0.3px #1a1a1a;letter-spacing:-0.05px">Untitled</div>
<div class="a" style="left:99.2px;top:290.0px;width:9.799999999999997px;height:7.800000000000011px;background:#636363;border-radius:2px"></div>
<div class="a" style="left:110.5px;top:290.0px;width:9.299999999999997px;height:7.800000000000011px;background:#636363;border-radius:2px"></div>
<div class="t" style="left:99.2px;width:9.8px;text-align:center;top:291.30px;font-size:6.6px;font-weight:bold;color:#ececec">M</div>
<div class="t" style="left:110.5px;width:9.3px;text-align:center;top:291.30px;font-size:6.6px;font-weight:bold;color:#ececec">S</div>
<div class="a" style="left:123.2px;top:290.0px;width:10.399999999999991px;height:8.199999999999989px;background:#2a6ad0;border-radius:2px"></div>
<svg class="a" style="left:123.2px;top:290.00px" width="10.4" height="8.2" viewBox="0 0 10.4 8.2"><path d="M5.2 1.3v5.6M2.8 2.7l4.8 2.8M2.8 5.5l4.8-2.8" stroke="#dce8ff" stroke-width=".8"/></svg>
<div class="a" style="left:136.7px;top:288.70px;width:36.2px;height:8.6px;border-radius:4.3px;background:#393939"></div>
<div class="a" style="left:158.20px;top:288.90px;width:8.2px;height:8.2px;border-radius:50%;background:#8a8a8a;opacity:1"></div>
<svg class="a" style="left:176.6px;top:286.50px" width="14" height="14" viewBox="0 0 14 14"><circle cx="7" cy="7" r="5" fill="#9a9a9a" stroke="#2a2a2a" stroke-width="1.6"/><path d="M7 3v1.8" stroke="#2a2a2a" stroke-width="1"/></svg>
<div class="a" style="left:48px;top:301.80px;width:148px;height:25.20px;background:#515151"></div>
<div class="a" style="left:58.5px;top:326.00px;width:137.5px;height:1px;background:#404040"></div>
<div class="a" style="left:48px;top:301.80px;width:10.5px;height:25.20px;background:#5a2c98"></div>
<div class="t" style="left:48px;width:10.5px;text-align:center;top:310.40px;font-size:7.2px;font-weight:bold;color:#e8e8e8;letter-spacing:-0.3px">65</div>
<div class="a" style="left:63px;top:305.29999999999995px;width:30.5px;height:17.0px;background:#5a5a5a;border-radius:3px"></div>
<svg class="a" style="left:65px;top:310.80px" width="5" height="7" viewBox="0 0 5 7"><path d="M1.2 1l2.5 2.5-2.5 2.5" fill="none" stroke="#cfcfcf" stroke-width=".8"/></svg>
<div class="a" style="left:75.8px;top:308.10px;width:14.6px;height:12.6px;background:#4a2888;border-radius:1px"></div>
<svg class="a" style="left:75.8px;top:308.10px" width="15" height="13" viewBox="0 0 15 13"><path d="M2.5 3.5h10M2.5 6.3h10M2.5 9.1h10M5 2.5v8M7.5 2.5v8M10 2.5v8" stroke="#8a6ad0" stroke-width=".8"/></svg>
<div class="t" style="left:98.3px;top:304.10px;font-size:7.1px;color:#f4f4f4;font-weight:bold;letter-spacing:-0.28px">Tension<svg style="margin-left:2.5px;vertical-align:-1.3px" width="4" height="7" viewBox="0 0 4 7"><path d="M0.6 2.6L2 1.2l1.4 1.4M0.6 4.4L2 5.8l1.4-1.4" fill="none" stroke="#bdbdbd" stroke-width=".7"/></svg></div>
<span id="nm9"></span>
<div class="t" style="right:770.7px;top:305.10px;font-size:6.8px;color:#1a1a1a;-webkit-text-stroke:0.3px #1a1a1a;letter-spacing:-0.05px">Aux 2</div>
<div class="a" style="left:99.2px;top:315.19999999999993px;width:9.799999999999997px;height:7.800000000000011px;background:#636363;border-radius:2px"></div>
<div class="a" style="left:110.5px;top:315.19999999999993px;width:9.299999999999997px;height:7.800000000000011px;background:#636363;border-radius:2px"></div>
<div class="t" style="left:99.2px;width:9.8px;text-align:center;top:316.50px;font-size:6.6px;font-weight:bold;color:#ececec">M</div>
<div class="t" style="left:110.5px;width:9.3px;text-align:center;top:316.50px;font-size:6.6px;font-weight:bold;color:#ececec">S</div>
<div class="a" style="left:136.7px;top:313.90px;width:36.2px;height:8.6px;border-radius:4.3px;background:#393939"></div>
<div class="a" style="left:157.50px;top:314.10px;width:8.2px;height:8.2px;border-radius:50%;background:#8a8a8a;opacity:1"></div>
<svg class="a" style="left:176.6px;top:311.70px" width="14" height="14" viewBox="0 0 14 14"><circle cx="7" cy="7" r="5" fill="#9a9a9a" stroke="#2a2a2a" stroke-width="1.6"/><path d="M7 3v1.8" stroke="#2a2a2a" stroke-width="1"/></svg>
<div class="a" style="left:48px;top:327.00px;width:148px;height:25.20px;background:#515151"></div>
<div class="a" style="left:58.5px;top:351.20px;width:137.5px;height:1px;background:#404040"></div>
<div class="a" style="left:48px;top:327.00px;width:10.5px;height:25.20px;background:#2b3a6e"></div>
<div class="t" style="left:48px;width:10.5px;text-align:center;top:335.60px;font-size:7.2px;font-weight:bold;color:#e8e8e8;letter-spacing:-0.3px">85</div>
<div class="a" style="left:75.8px;top:333.30px;width:14.6px;height:12.6px;background:#28307c;border-radius:1px"></div>
<svg class="a" style="left:75.8px;top:333.30px" width="15" height="13" viewBox="0 0 15 13"><path d="M6 9.2V3.5l4.5-1v5.5" fill="none" stroke="#50509a" stroke-width=".9" stroke-opacity=".8"/><ellipse cx="5" cy="9.3" rx="1.3" ry="1" fill="#50509a" fill-opacity=".8"/><ellipse cx="9.5" cy="8.3" rx="1.3" ry="1" fill="#50509a" fill-opacity=".8"/></svg>
<div class="t" style="left:98.3px;top:329.30px;font-size:7.1px;color:#f4f4f4;font-weight:bold;letter-spacing:-0.28px">Untitled.aupreset<svg style="margin-left:2.5px;vertical-align:-1.3px" width="4" height="7" viewBox="0 0 4 7"><path d="M0.6 2.6L2 1.2l1.4 1.4M0.6 4.4L2 5.8l1.4-1.4" fill="none" stroke="#bdbdbd" stroke-width=".7"/></svg></div>
<span id="nm10"></span>
<div class="t" style="right:770.7px;top:330.30px;font-size:6.8px;color:#1a1a1a;-webkit-text-stroke:0.3px #1a1a1a;letter-spacing:-0.05px">Untitled</div>
<div class="a" style="left:99.2px;top:340.4px;width:9.799999999999997px;height:7.800000000000011px;background:#636363;border-radius:2px"></div>
<div class="a" style="left:110.5px;top:340.4px;width:9.299999999999997px;height:7.800000000000011px;background:#636363;border-radius:2px"></div>
<div class="t" style="left:99.2px;width:9.8px;text-align:center;top:341.70px;font-size:6.6px;font-weight:bold;color:#ececec">M</div>
<div class="t" style="left:110.5px;width:9.3px;text-align:center;top:341.70px;font-size:6.6px;font-weight:bold;color:#ececec">S</div>
<div class="a" style="left:123.2px;top:340.4px;width:10.399999999999991px;height:8.199999999999989px;background:#2a6ad0;border-radius:2px"></div>
<svg class="a" style="left:123.2px;top:340.40px" width="10.4" height="8.2" viewBox="0 0 10.4 8.2"><path d="M5.2 1.3v5.6M2.8 2.7l4.8 2.8M2.8 5.5l4.8-2.8" stroke="#dce8ff" stroke-width=".8"/></svg>
<div class="a" style="left:136.7px;top:339.10px;width:36.2px;height:8.6px;border-radius:4.3px;background:#393939"></div>
<div class="a" style="left:157.50px;top:339.30px;width:8.2px;height:8.2px;border-radius:50%;background:#8a8a8a;opacity:1"></div>
<svg class="a" style="left:176.6px;top:336.90px" width="14" height="14" viewBox="0 0 14 14"><circle cx="7" cy="7" r="5" fill="#9a9a9a" stroke="#2a2a2a" stroke-width="1.6"/><path d="M7 3v1.8" stroke="#2a2a2a" stroke-width="1"/></svg>
<div class="a" style="left:48px;top:352.20px;width:148px;height:25.20px;background:#515151"></div>
<div class="a" style="left:58.5px;top:376.40px;width:137.5px;height:1px;background:#404040"></div>
<div class="a" style="left:48px;top:352.20px;width:10.5px;height:25.20px;background:#6e1f6a"></div>
<div class="t" style="left:48px;width:10.5px;text-align:center;top:360.80px;font-size:7.2px;font-weight:bold;color:#e8e8e8;letter-spacing:-0.3px">86</div>
<div class="a" style="left:75.8px;top:358.50px;width:14.6px;height:12.6px;background:#6a1a78;border-radius:1px"></div>
<svg class="a" style="left:75.8px;top:358.50px" width="15" height="13" viewBox="0 0 15 13"><path d="M6 9.2V3.5l4.5-1v5.5" fill="none" stroke="#50509a" stroke-width=".9" stroke-opacity=".8"/><ellipse cx="5" cy="9.3" rx="1.3" ry="1" fill="#50509a" fill-opacity=".8"/><ellipse cx="9.5" cy="8.3" rx="1.3" ry="1" fill="#50509a" fill-opacity=".8"/></svg>
<div class="t" style="left:98.3px;top:354.50px;font-size:7.1px;color:#f4f4f4;font-weight:bold;letter-spacing:-0.28px">Inst 35<svg style="margin-left:2.5px;vertical-align:-1.3px" width="4" height="7" viewBox="0 0 4 7"><path d="M0.6 2.6L2 1.2l1.4 1.4M0.6 4.4L2 5.8l1.4-1.4" fill="none" stroke="#bdbdbd" stroke-width=".7"/></svg></div>
<span id="nm11"></span>
<div class="t" style="right:770.7px;top:355.50px;font-size:6.8px;color:#1a1a1a;-webkit-text-stroke:0.3px #1a1a1a;letter-spacing:-0.05px">Inst 35</div>
<div class="a" style="left:99.2px;top:365.59999999999997px;width:9.799999999999997px;height:7.800000000000011px;background:#636363;border-radius:2px"></div>
<div class="a" style="left:110.5px;top:365.59999999999997px;width:9.299999999999997px;height:7.800000000000011px;background:#636363;border-radius:2px"></div>
<div class="t" style="left:99.2px;width:9.8px;text-align:center;top:366.90px;font-size:6.6px;font-weight:bold;color:#ececec">M</div>
<div class="t" style="left:110.5px;width:9.3px;text-align:center;top:366.90px;font-size:6.6px;font-weight:bold;color:#ececec">S</div>
<div class="a" style="left:123.2px;top:365.59999999999997px;width:10.399999999999991px;height:8.199999999999989px;background:#2a6ad0;border-radius:2px"></div>
<svg class="a" style="left:123.2px;top:365.60px" width="10.4" height="8.2" viewBox="0 0 10.4 8.2"><path d="M5.2 1.3v5.6M2.8 2.7l4.8 2.8M2.8 5.5l4.8-2.8" stroke="#dce8ff" stroke-width=".8"/></svg>
<div class="a" style="left:136.7px;top:364.30px;width:36.2px;height:8.6px;border-radius:4.3px;background:#393939"></div>
<div class="a" style="left:157.50px;top:364.50px;width:8.2px;height:8.2px;border-radius:50%;background:#8a8a8a;opacity:1"></div>
<svg class="a" style="left:176.6px;top:362.10px" width="14" height="14" viewBox="0 0 14 14"><circle cx="7" cy="7" r="5" fill="#9a9a9a" stroke="#2a2a2a" stroke-width="1.6"/><path d="M7 3v1.8" stroke="#2a2a2a" stroke-width="1"/></svg>
<div class="a" style="left:48px;top:377.40px;width:148px;height:25.20px;background:#515151"></div>
<div class="a" style="left:58.5px;top:401.60px;width:137.5px;height:1px;background:#404040"></div>
<div class="a" style="left:48px;top:377.40px;width:10.5px;height:25.20px;background:#2e2e6a"></div>
<div class="t" style="left:48px;width:10.5px;text-align:center;top:386.00px;font-size:7.2px;font-weight:bold;color:#e8e8e8;letter-spacing:-0.3px">87</div>
<div class="a" style="left:75.8px;top:383.70px;width:14.6px;height:12.6px;background:#28307c;border-radius:1px"></div>
<svg class="a" style="left:75.8px;top:383.70px" width="15" height="13" viewBox="0 0 15 13"><path d="M6 9.2V3.5l4.5-1v5.5" fill="none" stroke="#50509a" stroke-width=".9" stroke-opacity=".8"/><ellipse cx="5" cy="9.3" rx="1.3" ry="1" fill="#50509a" fill-opacity=".8"/><ellipse cx="9.5" cy="8.3" rx="1.3" ry="1" fill="#50509a" fill-opacity=".8"/></svg>
<div class="t" style="left:98.3px;top:379.70px;font-size:7.1px;color:#f4f4f4;font-weight:bold;letter-spacing:-0.28px">guitar<svg style="margin-left:2.5px;vertical-align:-1.3px" width="4" height="7" viewBox="0 0 4 7"><path d="M0.6 2.6L2 1.2l1.4 1.4M0.6 4.4L2 5.8l1.4-1.4" fill="none" stroke="#bdbdbd" stroke-width=".7"/></svg></div>
<span id="nm12"></span>
<div class="t" style="right:770.7px;top:380.70px;font-size:6.8px;color:#1a1a1a;-webkit-text-stroke:0.3px #1a1a1a;letter-spacing:-0.05px">Inst 32</div>
<div class="a" style="left:99.2px;top:390.79999999999995px;width:9.799999999999997px;height:7.800000000000011px;background:#636363;border-radius:2px"></div>
<div class="a" style="left:110.5px;top:390.79999999999995px;width:9.299999999999997px;height:7.800000000000011px;background:#636363;border-radius:2px"></div>
<div class="t" style="left:99.2px;width:9.8px;text-align:center;top:392.10px;font-size:6.6px;font-weight:bold;color:#ececec">M</div>
<div class="t" style="left:110.5px;width:9.3px;text-align:center;top:392.10px;font-size:6.6px;font-weight:bold;color:#ececec">S</div>
<div class="a" style="left:123.2px;top:390.79999999999995px;width:10.399999999999991px;height:8.199999999999989px;background:#2a6ad0;border-radius:2px"></div>
<svg class="a" style="left:123.2px;top:390.80px" width="10.4" height="8.2" viewBox="0 0 10.4 8.2"><path d="M5.2 1.3v5.6M2.8 2.7l4.8 2.8M2.8 5.5l4.8-2.8" stroke="#dce8ff" stroke-width=".8"/></svg>
<div class="a" style="left:136.7px;top:389.50px;width:36.2px;height:8.6px;border-radius:4.3px;background:#393939"></div>
<div class="a" style="left:140px;top:391.50px;width:28px;height:1.9px;background:#48cc44"></div>
<div class="a" style="left:140px;top:394.50px;width:28px;height:1.9px;background:#48cc44"></div>
<div class="a" style="left:157.50px;top:389.70px;width:8.2px;height:8.2px;border-radius:50%;background:#d8d8b0;opacity:0.8"></div>
<svg class="a" style="left:176.6px;top:387.30px" width="14" height="14" viewBox="0 0 14 14"><circle cx="7" cy="7" r="5" fill="#9a9a9a" stroke="#2a2a2a" stroke-width="1.6"/><path d="M7 3v1.8" stroke="#2a2a2a" stroke-width="1"/></svg>
<div class="a" style="left:48px;top:402.60px;width:148px;height:25.20px;background:#515151"></div>
<div class="a" style="left:58.5px;top:426.80px;width:137.5px;height:1px;background:#404040"></div>
<div class="a" style="left:48px;top:402.60px;width:10.5px;height:25.20px;background:#4e1c6e"></div>
<div class="t" style="left:48px;width:10.5px;text-align:center;top:411.20px;font-size:7.2px;font-weight:bold;color:#e8e8e8;letter-spacing:-0.3px">88</div>
<div class="a" style="left:75.8px;top:408.90px;width:14.6px;height:12.6px;background:#602098;border-radius:1px"></div>
<svg class="a" style="left:75.8px;top:408.90px" width="15" height="13" viewBox="0 0 15 13"><path d="M6 9.2V3.5l4.5-1v5.5" fill="none" stroke="#50509a" stroke-width=".9" stroke-opacity=".8"/><ellipse cx="5" cy="9.3" rx="1.3" ry="1" fill="#50509a" fill-opacity=".8"/><ellipse cx="9.5" cy="8.3" rx="1.3" ry="1" fill="#50509a" fill-opacity=".8"/></svg>
<div class="t" style="left:98.3px;top:404.90px;font-size:7.1px;color:#f4f4f4;font-weight:bold;letter-spacing:-0.28px">szht20<svg style="margin-left:2.5px;vertical-align:-1.3px" width="4" height="7" viewBox="0 0 4 7"><path d="M0.6 2.6L2 1.2l1.4 1.4M0.6 4.4L2 5.8l1.4-1.4" fill="none" stroke="#bdbdbd" stroke-width=".7"/></svg></div>
<span id="nm13"></span>
<div class="t" style="right:770.7px;top:405.90px;font-size:6.8px;color:#1a1a1a;-webkit-text-stroke:0.3px #1a1a1a;letter-spacing:-0.05px">Inst 34</div>
<div class="a" style="left:99.2px;top:415.99999999999994px;width:9.799999999999997px;height:7.800000000000011px;background:#636363;border-radius:2px"></div>
<div class="a" style="left:110.5px;top:415.99999999999994px;width:9.299999999999997px;height:7.800000000000011px;background:#636363;border-radius:2px"></div>
<div class="t" style="left:99.2px;width:9.8px;text-align:center;top:417.30px;font-size:6.6px;font-weight:bold;color:#ececec">M</div>
<div class="t" style="left:110.5px;width:9.3px;text-align:center;top:417.30px;font-size:6.6px;font-weight:bold;color:#ececec">S</div>
<div class="a" style="left:123.2px;top:415.99999999999994px;width:10.399999999999991px;height:8.199999999999989px;background:#2a6ad0;border-radius:2px"></div>
<svg class="a" style="left:123.2px;top:416.00px" width="10.4" height="8.2" viewBox="0 0 10.4 8.2"><path d="M5.2 1.3v5.6M2.8 2.7l4.8 2.8M2.8 5.5l4.8-2.8" stroke="#dce8ff" stroke-width=".8"/></svg>
<div class="a" style="left:136.7px;top:414.70px;width:36.2px;height:8.6px;border-radius:4.3px;background:#393939"></div>
<div class="a" style="left:140px;top:416.70px;width:28px;height:1.9px;background:#48cc44"></div>
<div class="a" style="left:140px;top:419.70px;width:28px;height:1.9px;background:#48cc44"></div>
<div class="a" style="left:160px;top:416.70px;width:8.5px;height:1.9px;background:#e8a020"></div>
<div class="a" style="left:160px;top:419.70px;width:8.5px;height:1.9px;background:#e8a020"></div>
<div class="a" style="left:157.50px;top:414.90px;width:8.2px;height:8.2px;border-radius:50%;background:#d8d8b0;opacity:0.8"></div>
<svg class="a" style="left:176.6px;top:412.50px" width="14" height="14" viewBox="0 0 14 14"><circle cx="7" cy="7" r="5" fill="#9a9a9a" stroke="#2a2a2a" stroke-width="1.6"/><path d="M7 3v1.8" stroke="#2a2a2a" stroke-width="1"/></svg>
<div class="a" style="left:195.5px;top:54.5px;width:1px;height:486px;background:#1e1e1e"></div>
<div class="a" style="left:196.5px;top:54.5px;width:715.5px;height:20.5px;background:#2b2b2b"></div>
<div class="a" style="left:196.5px;top:75px;width:715.5px;height:465px;background:#272727"></div>
<svg class="a" style="left:0;top:0" width="960" height="540" viewBox="0 0 960 540"><line x1="198.5" y1="75" x2="198.5" y2="427.8" stroke="#333333" stroke-width="1"/><line x1="198.5" y1="65.5" x2="198.5" y2="75" stroke="#474747" stroke-width="1"/><line x1="204.5" y1="75" x2="204.5" y2="427.8" stroke="#333333" stroke-width="1"/><line x1="204.5" y1="65.5" x2="204.5" y2="75" stroke="#474747" stroke-width="1"/><line x1="210.5" y1="75" x2="210.5" y2="427.8" stroke="#333333" stroke-width="1"/><line x1="210.5" y1="65.5" x2="210.5" y2="75" stroke="#474747" stroke-width="1"/><line x1="216.5" y1="75" x2="216.5" y2="427.8" stroke="#333333" stroke-width="1"/><line x1="216.5" y1="65.5" x2="216.5" y2="75" stroke="#474747" stroke-width="1"/><line x1="222.5" y1="75" x2="222.5" y2="427.8" stroke="#333333" stroke-width="1"/><line x1="222.5" y1="65.5" x2="222.5" y2="75" stroke="#474747" stroke-width="1"/><line x1="228.5" y1="75" x2="228.5" y2="427.8" stroke="#333333" stroke-width="1"/><line x1="228.5" y1="65.5" x2="228.5" y2="75" stroke="#474747" stroke-width="1"/><line x1="234.5" y1="75" x2="234.5" y2="427.8" stroke="#333333" stroke-width="1"/><line x1="234.5" y1="55" x2="234.5" y2="75" stroke="#5a5a5a" stroke-width="1"/><line x1="240.5" y1="75" x2="240.5" y2="427.8" stroke="#333333" stroke-width="1"/><line x1="240.5" y1="65.5" x2="240.5" y2="75" stroke="#474747" stroke-width="1"/><line x1="246.5" y1="75" x2="246.5" y2="427.8" stroke="#333333" stroke-width="1"/><line x1="246.5" y1="65.5" x2="246.5" y2="75" stroke="#474747" stroke-width="1"/><line x1="252.5" y1="75" x2="252.5" y2="427.8" stroke="#333333" stroke-width="1"/><line x1="252.5" y1="65.5" x2="252.5" y2="75" stroke="#474747" stroke-width="1"/><line x1="258.5" y1="75" x2="258.5" y2="427.8" stroke="#333333" stroke-width="1"/><line x1="258.5" y1="65.5" x2="258.5" y2="75" stroke="#474747" stroke-width="1"/><line x1="264.5" y1="75" x2="264.5" y2="427.8" stroke="#333333" stroke-width="1"/><line x1="264.5" y1="65.5" x2="264.5" y2="75" stroke="#474747" stroke-width="1"/><line x1="270.5" y1="75" x2="270.5" y2="427.8" stroke="#333333" stroke-width="1"/><line x1="270.5" y1="65.5" x2="270.5" y2="75" stroke="#474747" stroke-width="1"/><line x1="276.5" y1="75" x2="276.5" y2="427.8" stroke="#333333" stroke-width="1"/><line x1="276.5" y1="65.5" x2="276.5" y2="75" stroke="#474747" stroke-width="1"/><line x1="282.5" y1="75" x2="282.5" y2="427.8" stroke="#333333" stroke-width="1"/><line x1="282.5" y1="55" x2="282.5" y2="75" stroke="#5a5a5a" stroke-width="1"/><line x1="288.5" y1="75" x2="288.5" y2="427.8" stroke="#333333" stroke-width="1"/><line x1="288.5" y1="65.5" x2="288.5" y2="75" stroke="#474747" stroke-width="1"/><line x1="294.5" y1="75" x2="294.5" y2="427.8" stroke="#333333" stroke-width="1"/><line x1="294.5" y1="65.5" x2="294.5" y2="75" stroke="#474747" stroke-width="1"/><line x1="300.5" y1="75" x2="300.5" y2="427.8" stroke="#333333" stroke-width="1"/><line x1="300.5" y1="65.5" x2="300.5" y2="75" stroke="#474747" stroke-width="1"/><line x1="306.5" y1="75" x2="306.5" y2="427.8" stroke="#333333" stroke-width="1"/><line x1="306.5" y1="65.5" x2="306.5" y2="75" stroke="#474747" stroke-width="1"/><line x1="312.5" y1="75" x2="312.5" y2="427.8" stroke="#333333" stroke-width="1"/><line x1="312.5" y1="65.5" x2="312.5" y2="75" stroke="#474747" stroke-width="1"/><line x1="318.5" y1="75" x2="318.5" y2="427.8" stroke="#333333" stroke-width="1"/><line x1="318.5" y1="65.5" x2="318.5" y2="75" stroke="#474747" stroke-width="1"/><line x1="324.5" y1="75" x2="324.5" y2="427.8" stroke="#333333" stroke-width="1"/><line x1="324.5" y1="65.5" x2="324.5" y2="75" stroke="#474747" stroke-width="1"/><line x1="330.5" y1="75" x2="330.5" y2="427.8" stroke="#333333" stroke-width="1"/><line x1="330.5" y1="55" x2="330.5" y2="75" stroke="#5a5a5a" stroke-width="1"/><line x1="336.5" y1="75" x2="336.5" y2="427.8" stroke="#333333" stroke-width="1"/><line x1="336.5" y1="65.5" x2="336.5" y2="75" stroke="#474747" stroke-width="1"/><line x1="342.5" y1="75" x2="342.5" y2="427.8" stroke="#333333" stroke-width="1"/><line x1="342.5" y1="65.5" x2="342.5" y2="75" stroke="#474747" stroke-width="1"/><line x1="348.5" y1="75" x2="348.5" y2="427.8" stroke="#333333" stroke-width="1"/><line x1="348.5" y1="65.5" x2="348.5" y2="75" stroke="#474747" stroke-width="1"/><line x1="354.5" y1="75" x2="354.5" y2="427.8" stroke="#333333" stroke-width="1"/><line x1="354.5" y1="65.5" x2="354.5" y2="75" stroke="#474747" stroke-width="1"/><line x1="360.5" y1="75" x2="360.5" y2="427.8" stroke="#333333" stroke-width="1"/><line x1="360.5" y1="65.5" x2="360.5" y2="75" stroke="#474747" stroke-width="1"/><line x1="366.5" y1="75" x2="366.5" y2="427.8" stroke="#333333" stroke-width="1"/><line x1="366.5" y1="65.5" x2="366.5" y2="75" stroke="#474747" stroke-width="1"/><line x1="372.5" y1="75" x2="372.5" y2="427.8" stroke="#333333" stroke-width="1"/><line x1="372.5" y1="65.5" x2="372.5" y2="75" stroke="#474747" stroke-width="1"/><line x1="378.5" y1="75" x2="378.5" y2="427.8" stroke="#333333" stroke-width="1"/><line x1="378.5" y1="55" x2="378.5" y2="75" stroke="#5a5a5a" stroke-width="1"/><line x1="384.5" y1="75" x2="384.5" y2="427.8" stroke="#333333" stroke-width="1"/><line x1="384.5" y1="65.5" x2="384.5" y2="75" stroke="#474747" stroke-width="1"/><line x1="390.5" y1="75" x2="390.5" y2="427.8" stroke="#333333" stroke-width="1"/><line x1="390.5" y1="65.5" x2="390.5" y2="75" stroke="#474747" stroke-width="1"/><line x1="396.5" y1="75" x2="396.5" y2="427.8" stroke="#333333" stroke-width="1"/><line x1="396.5" y1="65.5" x2="396.5" y2="75" stroke="#474747" stroke-width="1"/><line x1="402.5" y1="75" x2="402.5" y2="427.8" stroke="#333333" stroke-width="1"/><line x1="402.5" y1="65.5" x2="402.5" y2="75" stroke="#474747" stroke-width="1"/><line x1="408.5" y1="75" x2="408.5" y2="427.8" stroke="#333333" stroke-width="1"/><line x1="408.5" y1="65.5" x2="408.5" y2="75" stroke="#474747" stroke-width="1"/><line x1="414.5" y1="75" x2="414.5" y2="427.8" stroke="#333333" stroke-width="1"/><line x1="414.5" y1="65.5" x2="414.5" y2="75" stroke="#474747" stroke-width="1"/><line x1="420.5" y1="75" x2="420.5" y2="427.8" stroke="#333333" stroke-width="1"/><line x1="420.5" y1="65.5" x2="420.5" y2="75" stroke="#474747" stroke-width="1"/><line x1="426.5" y1="75" x2="426.5" y2="427.8" stroke="#333333" stroke-width="1"/><line x1="426.5" y1="55" x2="426.5" y2="75" stroke="#5a5a5a" stroke-width="1"/><line x1="432.5" y1="75" x2="432.5" y2="427.8" stroke="#333333" stroke-width="1"/><line x1="432.5" y1="65.5" x2="432.5" y2="75" stroke="#474747" stroke-width="1"/><line x1="438.5" y1="75" x2="438.5" y2="427.8" stroke="#333333" stroke-width="1"/><line x1="438.5" y1="65.5" x2="438.5" y2="75" stroke="#474747" stroke-width="1"/><line x1="444.5" y1="75" x2="444.5" y2="427.8" stroke="#333333" stroke-width="1"/><line x1="444.5" y1="65.5" x2="444.5" y2="75" stroke="#474747" stroke-width="1"/><line x1="450.5" y1="75" x2="450.5" y2="427.8" stroke="#333333" stroke-width="1"/><line x1="450.5" y1="65.5" x2="450.5" y2="75" stroke="#474747" stroke-width="1"/><line x1="456.5" y1="75" x2="456.5" y2="427.8" stroke="#333333" stroke-width="1"/><line x1="456.5" y1="65.5" x2="456.5" y2="75" stroke="#474747" stroke-width="1"/><line x1="462.5" y1="75" x2="462.5" y2="427.8" stroke="#333333" stroke-width="1"/><line x1="462.5" y1="65.5" x2="462.5" y2="75" stroke="#474747" stroke-width="1"/><line x1="468.5" y1="75" x2="468.5" y2="427.8" stroke="#333333" stroke-width="1"/><line x1="468.5" y1="65.5" x2="468.5" y2="75" stroke="#474747" stroke-width="1"/><line x1="474.5" y1="75" x2="474.5" y2="427.8" stroke="#333333" stroke-width="1"/><line x1="474.5" y1="55" x2="474.5" y2="75" stroke="#5a5a5a" stroke-width="1"/><line x1="480.5" y1="75" x2="480.5" y2="427.8" stroke="#333333" stroke-width="1"/><line x1="480.5" y1="65.5" x2="480.5" y2="75" stroke="#474747" stroke-width="1"/><line x1="486.5" y1="75" x2="486.5" y2="427.8" stroke="#333333" stroke-width="1"/><line x1="486.5" y1="65.5" x2="486.5" y2="75" stroke="#474747" stroke-width="1"/><line x1="492.5" y1="75" x2="492.5" y2="427.8" stroke="#333333" stroke-width="1"/><line x1="492.5" y1="65.5" x2="492.5" y2="75" stroke="#474747" stroke-width="1"/><line x1="498.5" y1="75" x2="498.5" y2="427.8" stroke="#333333" stroke-width="1"/><line x1="498.5" y1="65.5" x2="498.5" y2="75" stroke="#474747" stroke-width="1"/><line x1="504.5" y1="75" x2="504.5" y2="427.8" stroke="#333333" stroke-width="1"/><line x1="504.5" y1="65.5" x2="504.5" y2="75" stroke="#474747" stroke-width="1"/><line x1="510.5" y1="75" x2="510.5" y2="427.8" stroke="#333333" stroke-width="1"/><line x1="510.5" y1="65.5" x2="510.5" y2="75" stroke="#474747" stroke-width="1"/><line x1="516.5" y1="75" x2="516.5" y2="427.8" stroke="#333333" stroke-width="1"/><line x1="516.5" y1="65.5" x2="516.5" y2="75" stroke="#474747" stroke-width="1"/><line x1="522.5" y1="75" x2="522.5" y2="427.8" stroke="#333333" stroke-width="1"/><line x1="522.5" y1="55" x2="522.5" y2="75" stroke="#5a5a5a" stroke-width="1"/><line x1="528.5" y1="75" x2="528.5" y2="427.8" stroke="#333333" stroke-width="1"/><line x1="528.5" y1="65.5" x2="528.5" y2="75" stroke="#474747" stroke-width="1"/><line x1="534.5" y1="75" x2="534.5" y2="427.8" stroke="#333333" stroke-width="1"/><line x1="534.5" y1="65.5" x2="534.5" y2="75" stroke="#474747" stroke-width="1"/><line x1="540.5" y1="75" x2="540.5" y2="427.8" stroke="#333333" stroke-width="1"/><line x1="540.5" y1="65.5" x2="540.5" y2="75" stroke="#474747" stroke-width="1"/><line x1="546.5" y1="75" x2="546.5" y2="427.8" stroke="#333333" stroke-width="1"/><line x1="546.5" y1="65.5" x2="546.5" y2="75" stroke="#474747" stroke-width="1"/><line x1="552.5" y1="75" x2="552.5" y2="427.8" stroke="#333333" stroke-width="1"/><line x1="552.5" y1="65.5" x2="552.5" y2="75" stroke="#474747" stroke-width="1"/><line x1="558.5" y1="75" x2="558.5" y2="427.8" stroke="#333333" stroke-width="1"/><line x1="558.5" y1="65.5" x2="558.5" y2="75" stroke="#474747" stroke-width="1"/><line x1="564.5" y1="75" x2="564.5" y2="427.8" stroke="#333333" stroke-width="1"/><line x1="564.5" y1="65.5" x2="564.5" y2="75" stroke="#474747" stroke-width="1"/><line x1="570.5" y1="75" x2="570.5" y2="427.8" stroke="#333333" stroke-width="1"/><line x1="570.5" y1="55" x2="570.5" y2="75" stroke="#5a5a5a" stroke-width="1"/><line x1="576.5" y1="75" x2="576.5" y2="427.8" stroke="#333333" stroke-width="1"/><line x1="576.5" y1="65.5" x2="576.5" y2="75" stroke="#474747" stroke-width="1"/><line x1="582.5" y1="75" x2="582.5" y2="427.8" stroke="#333333" stroke-width="1"/><line x1="582.5" y1="65.5" x2="582.5" y2="75" stroke="#474747" stroke-width="1"/><line x1="588.5" y1="75" x2="588.5" y2="427.8" stroke="#333333" stroke-width="1"/><line x1="588.5" y1="65.5" x2="588.5" y2="75" stroke="#474747" stroke-width="1"/><line x1="594.5" y1="75" x2="594.5" y2="427.8" stroke="#333333" stroke-width="1"/><line x1="594.5" y1="65.5" x2="594.5" y2="75" stroke="#474747" stroke-width="1"/><line x1="600.5" y1="75" x2="600.5" y2="427.8" stroke="#333333" stroke-width="1"/><line x1="600.5" y1="65.5" x2="600.5" y2="75" stroke="#474747" stroke-width="1"/><line x1="606.5" y1="75" x2="606.5" y2="427.8" stroke="#333333" stroke-width="1"/><line x1="606.5" y1="65.5" x2="606.5" y2="75" stroke="#474747" stroke-width="1"/><line x1="612.5" y1="75" x2="612.5" y2="427.8" stroke="#333333" stroke-width="1"/><line x1="612.5" y1="65.5" x2="612.5" y2="75" stroke="#474747" stroke-width="1"/><line x1="618.5" y1="75" x2="618.5" y2="427.8" stroke="#333333" stroke-width="1"/><line x1="618.5" y1="55" x2="618.5" y2="75" stroke="#5a5a5a" stroke-width="1"/><line x1="624.5" y1="75" x2="624.5" y2="427.8" stroke="#333333" stroke-width="1"/><line x1="624.5" y1="65.5" x2="624.5" y2="75" stroke="#474747" stroke-width="1"/><line x1="630.5" y1="75" x2="630.5" y2="427.8" stroke="#333333" stroke-width="1"/><line x1="630.5" y1="65.5" x2="630.5" y2="75" stroke="#474747" stroke-width="1"/><line x1="636.5" y1="75" x2="636.5" y2="427.8" stroke="#333333" stroke-width="1"/><line x1="636.5" y1="65.5" x2="636.5" y2="75" stroke="#474747" stroke-width="1"/><line x1="642.5" y1="75" x2="642.5" y2="427.8" stroke="#333333" stroke-width="1"/><line x1="642.5" y1="65.5" x2="642.5" y2="75" stroke="#474747" stroke-width="1"/><line x1="648.5" y1="75" x2="648.5" y2="427.8" stroke="#333333" stroke-width="1"/><line x1="648.5" y1="65.5" x2="648.5" y2="75" stroke="#474747" stroke-width="1"/><line x1="654.5" y1="75" x2="654.5" y2="427.8" stroke="#333333" stroke-width="1"/><line x1="654.5" y1="65.5" x2="654.5" y2="75" stroke="#474747" stroke-width="1"/><line x1="660.5" y1="75" x2="660.5" y2="427.8" stroke="#333333" stroke-width="1"/><line x1="660.5" y1="65.5" x2="660.5" y2="75" stroke="#474747" stroke-width="1"/><line x1="666.5" y1="75" x2="666.5" y2="427.8" stroke="#333333" stroke-width="1"/><line x1="666.5" y1="55" x2="666.5" y2="75" stroke="#5a5a5a" stroke-width="1"/><line x1="672.5" y1="75" x2="672.5" y2="427.8" stroke="#333333" stroke-width="1"/><line x1="672.5" y1="65.5" x2="672.5" y2="75" stroke="#474747" stroke-width="1"/><line x1="678.5" y1="75" x2="678.5" y2="427.8" stroke="#333333" stroke-width="1"/><line x1="678.5" y1="65.5" x2="678.5" y2="75" stroke="#474747" stroke-width="1"/><line x1="684.5" y1="75" x2="684.5" y2="427.8" stroke="#333333" stroke-width="1"/><line x1="684.5" y1="65.5" x2="684.5" y2="75" stroke="#474747" stroke-width="1"/><line x1="690.5" y1="75" x2="690.5" y2="427.8" stroke="#333333" stroke-width="1"/><line x1="690.5" y1="65.5" x2="690.5" y2="75" stroke="#474747" stroke-width="1"/><line x1="696.5" y1="75" x2="696.5" y2="427.8" stroke="#333333" stroke-width="1"/><line x1="696.5" y1="65.5" x2="696.5" y2="75" stroke="#474747" stroke-width="1"/><line x1="702.5" y1="75" x2="702.5" y2="427.8" stroke="#333333" stroke-width="1"/><line x1="702.5" y1="65.5" x2="702.5" y2="75" stroke="#474747" stroke-width="1"/><line x1="708.5" y1="75" x2="708.5" y2="427.8" stroke="#333333" stroke-width="1"/><line x1="708.5" y1="65.5" x2="708.5" y2="75" stroke="#474747" stroke-width="1"/><line x1="714.5" y1="75" x2="714.5" y2="427.8" stroke="#333333" stroke-width="1"/><line x1="714.5" y1="55" x2="714.5" y2="75" stroke="#5a5a5a" stroke-width="1"/><line x1="720.5" y1="75" x2="720.5" y2="427.8" stroke="#333333" stroke-width="1"/><line x1="720.5" y1="65.5" x2="720.5" y2="75" stroke="#474747" stroke-width="1"/><line x1="726.5" y1="75" x2="726.5" y2="427.8" stroke="#333333" stroke-width="1"/><line x1="726.5" y1="65.5" x2="726.5" y2="75" stroke="#474747" stroke-width="1"/><line x1="732.5" y1="75" x2="732.5" y2="427.8" stroke="#333333" stroke-width="1"/><line x1="732.5" y1="65.5" x2="732.5" y2="75" stroke="#474747" stroke-width="1"/><line x1="738.5" y1="75" x2="738.5" y2="427.8" stroke="#333333" stroke-width="1"/><line x1="738.5" y1="65.5" x2="738.5" y2="75" stroke="#474747" stroke-width="1"/><line x1="744.5" y1="75" x2="744.5" y2="427.8" stroke="#333333" stroke-width="1"/><line x1="744.5" y1="65.5" x2="744.5" y2="75" stroke="#474747" stroke-width="1"/><line x1="750.5" y1="75" x2="750.5" y2="427.8" stroke="#333333" stroke-width="1"/><line x1="750.5" y1="65.5" x2="750.5" y2="75" stroke="#474747" stroke-width="1"/><line x1="756.5" y1="75" x2="756.5" y2="427.8" stroke="#333333" stroke-width="1"/><line x1="756.5" y1="65.5" x2="756.5" y2="75" stroke="#474747" stroke-width="1"/><line x1="762.5" y1="75" x2="762.5" y2="427.8" stroke="#333333" stroke-width="1"/><line x1="762.5" y1="55" x2="762.5" y2="75" stroke="#5a5a5a" stroke-width="1"/><line x1="768.5" y1="75" x2="768.5" y2="427.8" stroke="#333333" stroke-width="1"/><line x1="768.5" y1="65.5" x2="768.5" y2="75" stroke="#474747" stroke-width="1"/><line x1="774.5" y1="75" x2="774.5" y2="427.8" stroke="#333333" stroke-width="1"/><line x1="774.5" y1="65.5" x2="774.5" y2="75" stroke="#474747" stroke-width="1"/><line x1="780.5" y1="75" x2="780.5" y2="427.8" stroke="#333333" stroke-width="1"/><line x1="780.5" y1="65.5" x2="780.5" y2="75" stroke="#474747" stroke-width="1"/><line x1="786.5" y1="75" x2="786.5" y2="427.8" stroke="#333333" stroke-width="1"/><line x1="786.5" y1="65.5" x2="786.5" y2="75" stroke="#474747" stroke-width="1"/><line x1="792.5" y1="75" x2="792.5" y2="427.8" stroke="#333333" stroke-width="1"/><line x1="792.5" y1="65.5" x2="792.5" y2="75" stroke="#474747" stroke-width="1"/><line x1="798.5" y1="75" x2="798.5" y2="427.8" stroke="#333333" stroke-width="1"/><line x1="798.5" y1="65.5" x2="798.5" y2="75" stroke="#474747" stroke-width="1"/><line x1="804.5" y1="75" x2="804.5" y2="427.8" stroke="#333333" stroke-width="1"/><line x1="804.5" y1="65.5" x2="804.5" y2="75" stroke="#474747" stroke-width="1"/><line x1="810.5" y1="75" x2="810.5" y2="427.8" stroke="#333333" stroke-width="1"/><line x1="810.5" y1="55" x2="810.5" y2="75" stroke="#5a5a5a" stroke-width="1"/><line x1="816.5" y1="75" x2="816.5" y2="427.8" stroke="#333333" stroke-width="1"/><line x1="816.5" y1="65.5" x2="816.5" y2="75" stroke="#474747" stroke-width="1"/><line x1="822.5" y1="75" x2="822.5" y2="427.8" stroke="#333333" stroke-width="1"/><line x1="822.5" y1="65.5" x2="822.5" y2="75" stroke="#474747" stroke-width="1"/><line x1="828.5" y1="75" x2="828.5" y2="427.8" stroke="#333333" stroke-width="1"/><line x1="828.5" y1="65.5" x2="828.5" y2="75" stroke="#474747" stroke-width="1"/><line x1="834.5" y1="75" x2="834.5" y2="427.8" stroke="#333333" stroke-width="1"/><line x1="834.5" y1="65.5" x2="834.5" y2="75" stroke="#474747" stroke-width="1"/><line x1="840.5" y1="75" x2="840.5" y2="427.8" stroke="#333333" stroke-width="1"/><line x1="840.5" y1="65.5" x2="840.5" y2="75" stroke="#474747" stroke-width="1"/><line x1="846.5" y1="75" x2="846.5" y2="427.8" stroke="#333333" stroke-width="1"/><line x1="846.5" y1="65.5" x2="846.5" y2="75" stroke="#474747" stroke-width="1"/><line x1="852.5" y1="75" x2="852.5" y2="427.8" stroke="#333333" stroke-width="1"/><line x1="852.5" y1="65.5" x2="852.5" y2="75" stroke="#474747" stroke-width="1"/><line x1="858.5" y1="75" x2="858.5" y2="427.8" stroke="#333333" stroke-width="1"/><line x1="858.5" y1="55" x2="858.5" y2="75" stroke="#5a5a5a" stroke-width="1"/><line x1="864.5" y1="75" x2="864.5" y2="427.8" stroke="#333333" stroke-width="1"/><line x1="864.5" y1="65.5" x2="864.5" y2="75" stroke="#474747" stroke-width="1"/><line x1="870.5" y1="75" x2="870.5" y2="427.8" stroke="#333333" stroke-width="1"/><line x1="870.5" y1="65.5" x2="870.5" y2="75" stroke="#474747" stroke-width="1"/><line x1="876.5" y1="75" x2="876.5" y2="427.8" stroke="#333333" stroke-width="1"/><line x1="876.5" y1="65.5" x2="876.5" y2="75" stroke="#474747" stroke-width="1"/><line x1="882.5" y1="75" x2="882.5" y2="427.8" stroke="#333333" stroke-width="1"/><line x1="882.5" y1="65.5" x2="882.5" y2="75" stroke="#474747" stroke-width="1"/><line x1="888.5" y1="75" x2="888.5" y2="427.8" stroke="#333333" stroke-width="1"/><line x1="888.5" y1="65.5" x2="888.5" y2="75" stroke="#474747" stroke-width="1"/><line x1="894.5" y1="75" x2="894.5" y2="427.8" stroke="#333333" stroke-width="1"/><line x1="894.5" y1="65.5" x2="894.5" y2="75" stroke="#474747" stroke-width="1"/><line x1="900.5" y1="75" x2="900.5" y2="427.8" stroke="#333333" stroke-width="1"/><line x1="900.5" y1="65.5" x2="900.5" y2="75" stroke="#474747" stroke-width="1"/><line x1="906.5" y1="75" x2="906.5" y2="427.8" stroke="#333333" stroke-width="1"/><line x1="196.5" y1="99.7" x2="902" y2="99.7" stroke="#232323" stroke-width="1"/><line x1="196.5" y1="124.9" x2="902" y2="124.9" stroke="#232323" stroke-width="1"/><line x1="196.5" y1="150.1" x2="902" y2="150.1" stroke="#232323" stroke-width="1"/><line x1="196.5" y1="175.3" x2="902" y2="175.3" stroke="#232323" stroke-width="1"/><line x1="196.5" y1="200.5" x2="902" y2="200.5" stroke="#232323" stroke-width="1"/><line x1="196.5" y1="225.7" x2="902" y2="225.7" stroke="#232323" stroke-width="1"/><line x1="196.5" y1="250.9" x2="902" y2="250.9" stroke="#232323" stroke-width="1"/><line x1="196.5" y1="276.1" x2="902" y2="276.1" stroke="#232323" stroke-width="1"/><line x1="196.5" y1="301.3" x2="902" y2="301.3" stroke="#232323" stroke-width="1"/><line x1="196.5" y1="326.5" x2="902" y2="326.5" stroke="#232323" stroke-width="1"/><line x1="196.5" y1="351.7" x2="902" y2="351.7" stroke="#232323" stroke-width="1"/><line x1="196.5" y1="376.9" x2="902" y2="376.9" stroke="#232323" stroke-width="1"/><line x1="196.5" y1="402.1" x2="902" y2="402.1" stroke="#232323" stroke-width="1"/><line x1="196.5" y1="427.3" x2="902" y2="427.3" stroke="#232323" stroke-width="1"/><line x1="196.5" y1="74.5" x2="912" y2="74.5" stroke="#222" stroke-width="1"/></svg>
<div class="a" style="left:493px;top:55px;width:48px;height:9.5px;background:#3a3a3a"></div>
<div class="t" style="left:236.5px;top:56.8px;font-size:6.6px;font-weight:bold;color:#dadada">9</div>
<div class="t" style="left:284.5px;top:56.8px;font-size:6.6px;font-weight:bold;color:#dadada">17</div>
<div class="t" style="left:332.5px;top:56.8px;font-size:6.6px;font-weight:bold;color:#dadada">25</div>
<div class="t" style="left:380.5px;top:56.8px;font-size:6.6px;font-weight:bold;color:#dadada">33</div>
<div class="t" style="left:428.5px;top:56.8px;font-size:6.6px;font-weight:bold;color:#dadada">41</div>
<div class="t" style="left:476.5px;top:56.8px;font-size:6.6px;font-weight:bold;color:#dadada">49</div>
<div class="t" style="left:524.5px;top:56.8px;font-size:6.6px;font-weight:bold;color:#dadada">57</div>
<div class="t" style="left:572.5px;top:56.8px;font-size:6.6px;font-weight:bold;color:#dadada">65</div>
<div class="t" style="left:620.5px;top:56.8px;font-size:6.6px;font-weight:bold;color:#dadada">73</div>
<div class="t" style="left:668.5px;top:56.8px;font-size:6.6px;font-weight:bold;color:#dadada">81</div>
<div class="t" style="left:716.5px;top:56.8px;font-size:6.6px;font-weight:bold;color:#dadada">89</div>
<div class="t" style="left:764.5px;top:56.8px;font-size:6.6px;font-weight:bold;color:#dadada">97</div>
<div class="t" style="left:812.5px;top:56.8px;font-size:6.6px;font-weight:bold;color:#dadada">105</div>
<div class="t" style="left:860.5px;top:56.8px;font-size:6.6px;font-weight:bold;color:#dadada">113</div>
<svg class="a" style="left:906px;top:55px" width="6" height="8" viewBox="0 0 6 8"><path d="M6 0.5L1 4l5 3.5z" fill="#6a6a6a"/></svg>
<div class="a" style="left:902px;top:75px;width:10px;height:465px;background:rgba(0,0,0,.12)"></div>
<div class="reg" style="left:295px;top:75px;width:23px;height:24px;background:#1d9e9a">
<div class="rl">Inst 1</div>
<svg class="a" style="left:0;top:0" width="23" height="24"><rect x="6.8" y="21.3" width="0.8" height="0.8" fill="#fff" fill-opacity=".6"/><rect x="11.6" y="13.8" width="1.4" height="0.8" fill="#fff" fill-opacity=".6"/><rect x="20.0" y="13.7" width="1.0" height="0.8" fill="#fff" fill-opacity=".6"/><rect x="16.0" y="20.9" width="0.9" height="0.8" fill="#fff" fill-opacity=".6"/><rect x="3.3" y="15.9" width="1.3" height="0.8" fill="#fff" fill-opacity=".6"/><rect x="18.1" y="19.9" width="1.2" height="0.8" fill="#fff" fill-opacity=".6"/><rect x="19.2" y="15.1" width="1.1" height="0.8" fill="#fff" fill-opacity=".6"/><rect x="15.7" y="21.1" width="0.8" height="0.8" fill="#fff" fill-opacity=".6"/><rect x="2.6" y="21.8" width="1.0" height="0.8" fill="#fff" fill-opacity=".6"/><rect x="0.7" y="16.9" width="1.2" height="0.8" fill="#fff" fill-opacity=".8"/><rect x="2.5" y="18.3" width="1.3" height="0.8" fill="#fff" fill-opacity=".8"/><rect x="3.5" y="17.7" width="1.6" height="0.8" fill="#fff" fill-opacity=".8"/><rect x="5.0" y="16.9" width="0.9" height="0.8" fill="#fff" fill-opacity=".8"/><rect x="6.7" y="15.7" width="1.2" height="0.8" fill="#fff" fill-opacity=".8"/><rect x="7.7" y="15.0" width="1.0" height="0.8" fill="#fff" fill-opacity=".8"/><rect x="9.1" y="15.9" width="1.9" height="0.8" fill="#fff" fill-opacity=".8"/><rect x="10.8" y="14.6" width="1.5" height="0.8" fill="#fff" fill-opacity=".8"/><rect x="12.3" y="14.9" width="1.4" height="0.8" fill="#fff" fill-opacity=".8"/><rect x="13.9" y="14.2" width="1.9" height="0.8" fill="#fff" fill-opacity=".8"/><rect x="15.3" y="16.2" width="0.7" height="0.8" fill="#fff" fill-opacity=".8"/><rect x="16.6" y="17.1" width="2.1" height="0.8" fill="#fff" fill-opacity=".8"/><rect x="17.8" y="17.0" width="1.7" height="0.8" fill="#fff" fill-opacity=".8"/><rect x="19.5" y="17.1" width="1.8" height="0.8" fill="#fff" fill-opacity=".8"/></svg>
</div>
<div class="reg" style="left:319px;top:75px;width:23px;height:24px;background:#1d9e9a">
<div class="rl">Inst 1</div>
<svg class="a" style="left:0;top:0" width="23" height="24"><rect x="10.4" y="15.8" width="1.5" height="0.8" fill="#fff" fill-opacity=".6"/><rect x="14.2" y="20.9" width="1.0" height="0.8" fill="#fff" fill-opacity=".6"/><rect x="13.1" y="16.4" width="1.7" height="0.8" fill="#fff" fill-opacity=".6"/><rect x="2.1" y="19.6" width="1.8" height="0.8" fill="#fff" fill-opacity=".6"/><rect x="7.7" y="19.0" width="1.4" height="0.8" fill="#fff" fill-opacity=".6"/><rect x="18.7" y="20.6" width="1.7" height="0.8" fill="#fff" fill-opacity=".6"/><rect x="6.6" y="18.7" width="1.4" height="0.8" fill="#fff" fill-opacity=".6"/><rect x="16.5" y="20.4" width="0.9" height="0.8" fill="#fff" fill-opacity=".6"/><rect x="10.9" y="13.8" width="1.1" height="0.8" fill="#fff" fill-opacity=".6"/><rect x="1.2" y="15.3" width="1.1" height="0.8" fill="#fff" fill-opacity=".8"/><rect x="2.0" y="14.5" width="0.8" height="0.8" fill="#fff" fill-opacity=".8"/><rect x="3.4" y="12.3" width="2.2" height="0.8" fill="#fff" fill-opacity=".8"/><rect x="5.4" y="11.1" width="1.9" height="0.8" fill="#fff" fill-opacity=".8"/><rect x="6.6" y="11.3" width="0.8" height="0.8" fill="#fff" fill-opacity=".8"/><rect x="7.6" y="11.3" width="0.7" height="0.8" fill="#fff" fill-opacity=".8"/><rect x="9.4" y="12.8" width="0.7" height="0.8" fill="#fff" fill-opacity=".8"/><rect x="10.6" y="13.5" width="0.8" height="0.8" fill="#fff" fill-opacity=".8"/><rect x="12.3" y="13.2" width="2.2" height="0.8" fill="#fff" fill-opacity=".8"/><rect x="13.7" y="12.2" width="0.7" height="0.8" fill="#fff" fill-opacity=".8"/><rect x="14.9" y="11.1" width="1.1" height="0.8" fill="#fff" fill-opacity=".8"/><rect x="16.3" y="11.1" width="0.7" height="0.8" fill="#fff" fill-opacity=".8"/><rect x="18.2" y="11.1" width="1.2" height="0.8" fill="#fff" fill-opacity=".8"/><rect x="19.8" y="12.3" width="1.4" height="0.8" fill="#fff" fill-opacity=".8"/></svg>
</div>
<div class="reg" style="left:589px;top:75px;width:23px;height:24px;background:#1d9e9a">
<div class="rl">Inst 1</div>
<svg class="a" style="left:0;top:0" width="23" height="24"><rect x="11.5" y="20.4" width="1.9" height="0.8" fill="#fff" fill-opacity=".6"/><rect x="1.2" y="18.4" width="0.9" height="0.8" fill="#fff" fill-opacity=".6"/><rect x="9.2" y="20.0" width="1.2" height="0.8" fill="#fff" fill-opacity=".6"/><rect x="13.0" y="12.2" width="0.9" height="0.8" fill="#fff" fill-opacity=".6"/><rect x="2.7" y="13.5" width="1.7" height="0.8" fill="#fff" fill-opacity=".6"/><rect x="19.2" y="11.2" width="1.9" height="0.8" fill="#fff" fill-opacity=".6"/><rect x="10.1" y="12.3" width="1.4" height="0.8" fill="#fff" fill-opacity=".6"/><rect x="2.3" y="15.0" width="1.3" height="0.8" fill="#fff" fill-opacity=".6"/><rect x="17.0" y="15.1" width="1.1" height="0.8" fill="#fff" fill-opacity=".6"/><rect x="0.6" y="16.0" width="1.9" height="0.8" fill="#fff" fill-opacity=".8"/><rect x="2.5" y="17.1" width="1.1" height="0.8" fill="#fff" fill-opacity=".8"/><rect x="3.6" y="16.8" width="1.6" height="0.8" fill="#fff" fill-opacity=".8"/><rect x="5.3" y="14.9" width="1.1" height="0.8" fill="#fff" fill-opacity=".8"/><rect x="6.6" y="16.7" width="1.2" height="0.8" fill="#fff" fill-opacity=".8"/><rect x="8.0" y="17.0" width="0.9" height="0.8" fill="#fff" fill-opacity=".8"/><rect x="9.7" y="14.5" width="2.0" height="0.8" fill="#fff" fill-opacity=".8"/><rect x="11.0" y="15.6" width="1.7" height="0.8" fill="#fff" fill-opacity=".8"/><rect x="12.5" y="15.3" width="2.1" height="0.8" fill="#fff" fill-opacity=".8"/><rect x="13.5" y="17.0" width="0.6" height="0.8" fill="#fff" fill-opacity=".8"/><rect x="15.0" y="19.1" width="1.4" height="0.8" fill="#fff" fill-opacity=".8"/><rect x="16.9" y="20.1" width="0.7" height="0.8" fill="#fff" fill-opacity=".8"/><rect x="18.1" y="19.2" width="2.1" height="0.8" fill="#fff" fill-opacity=".8"/><rect x="19.6" y="19.3" width="0.6" height="0.8" fill="#fff" fill-opacity=".8"/></svg>
</div>
<div class="reg" style="left:613px;top:75px;width:23px;height:24px;background:#1d9e9a">
<div class="rl">Inst 1</div>
<svg class="a" style="left:0;top:0" width="23" height="24"><rect x="5.3" y="18.3" width="0.9" height="0.8" fill="#fff" fill-opacity=".6"/><rect x="17.3" y="18.0" width="1.7" height="0.8" fill="#fff" fill-opacity=".6"/><rect x="14.4" y="20.3" width="1.9" height="0.8" fill="#fff" fill-opacity=".6"/><rect x="2.8" y="13.9" width="1.5" height="0.8" fill="#fff" fill-opacity=".6"/><rect x="5.3" y="11.6" width="1.4" height="0.8" fill="#fff" fill-opacity=".6"/><rect x="9.0" y="21.7" width="1.7" height="0.8" fill="#fff" fill-opacity=".6"/><rect x="10.9" y="13.3" width="1.3" height="0.8" fill="#fff" fill-opacity=".6"/><rect x="4.9" y="21.8" width="1.8" height="0.8" fill="#fff" fill-opacity=".6"/><rect x="19.9" y="12.2" width="0.9" height="0.8" fill="#fff" fill-opacity=".6"/><rect x="1.2" y="13.0" width="2.1" height="0.8" fill="#fff" fill-opacity=".8"/><rect x="2.1" y="15.0" width="1.5" height="0.8" fill="#fff" fill-opacity=".8"/><rect x="4.1" y="16.3" width="1.2" height="0.8" fill="#fff" fill-opacity=".8"/><rect x="5.4" y="17.8" width="1.3" height="0.8" fill="#fff" fill-opacity=".8"/><rect x="6.6" y="18.6" width="2.1" height="0.8" fill="#fff" fill-opacity=".8"/><rect x="7.7" y="17.6" width="1.8" height="0.8" fill="#fff" fill-opacity=".8"/><rect x="9.1" y="17.7" width="1.0" height="0.8" fill="#fff" fill-opacity=".8"/><rect x="11.0" y="16.4" width="1.2" height="0.8" fill="#fff" fill-opacity=".8"/><rect x="12.5" y="15.1" width="1.5" height="0.8" fill="#fff" fill-opacity=".8"/><rect x="13.5" y="15.9" width="2.0" height="0.8" fill="#fff" fill-opacity=".8"/><rect x="15.1" y="17.9" width="1.6" height="0.8" fill="#fff" fill-opacity=".8"/><rect x="16.9" y="16.8" width="0.7" height="0.8" fill="#fff" fill-opacity=".8"/><rect x="18.0" y="16.3" width="2.2" height="0.8" fill="#fff" fill-opacity=".8"/><rect x="19.2" y="14.2" width="0.8" height="0.8" fill="#fff" fill-opacity=".8"/></svg>
</div>
<div class="reg" style="left:637px;top:75px;width:23px;height:24px;background:#1d9e9a">
<div class="rl">lead</div>
<svg class="a" style="left:0;top:0" width="23" height="24"><rect x="1" y="13.5" width="5" height="0.8" fill="#fff" fill-opacity=".7"/><rect x="12" y="13.5" width="6" height="0.8" fill="#fff" fill-opacity=".7"/><rect x="1" y="17.5" width="5" height="0.8" fill="#fff" fill-opacity=".7"/><rect x="12" y="17.5" width="6" height="0.8" fill="#fff" fill-opacity=".7"/></svg>
</div>
<div class="reg" style="left:697px;top:75px;width:23px;height:24px;background:#1d9e9a">
<div class="rl">initial so</div>
<svg class="a" style="left:0;top:0" width="23" height="24"><rect x="17.4" y="11.3" width="1.8" height="0.8" fill="#fff" fill-opacity=".6"/><rect x="6.4" y="19.2" width="1.2" height="0.8" fill="#fff" fill-opacity=".6"/><rect x="19.8" y="10.4" width="1.8" height="0.8" fill="#fff" fill-opacity=".6"/><rect x="10.0" y="11.3" width="1.8" height="0.8" fill="#fff" fill-opacity=".6"/><rect x="18.9" y="16.9" width="0.9" height="0.8" fill="#fff" fill-opacity=".6"/><rect x="11.5" y="11.2" width="1.8" height="0.8" fill="#fff" fill-opacity=".6"/><rect x="14.6" y="10.6" width="1.6" height="0.8" fill="#fff" fill-opacity=".6"/><rect x="4.7" y="12.0" width="1.5" height="0.8" fill="#fff" fill-opacity=".6"/><rect x="1.6" y="16.1" width="1.7" height="0.8" fill="#fff" fill-opacity=".6"/><rect x="0.7" y="11.6" width="2.1" height="0.8" fill="#fff" fill-opacity=".8"/><rect x="2.2" y="10.2" width="2.0" height="0.8" fill="#fff" fill-opacity=".8"/><rect x="3.8" y="11.0" width="1.9" height="0.8" fill="#fff" fill-opacity=".8"/><rect x="5.2" y="12.2" width="0.8" height="0.8" fill="#fff" fill-opacity=".8"/><rect x="6.6" y="10.2" width="1.2" height="0.8" fill="#fff" fill-opacity=".8"/><rect x="7.8" y="9.9" width="1.0" height="0.8" fill="#fff" fill-opacity=".8"/><rect x="9.7" y="9.9" width="1.1" height="0.8" fill="#fff" fill-opacity=".8"/><rect x="10.9" y="10.3" width="0.9" height="0.8" fill="#fff" fill-opacity=".8"/><rect x="12.1" y="9.9" width="2.1" height="0.8" fill="#fff" fill-opacity=".8"/><rect x="13.7" y="12.0" width="2.1" height="0.8" fill="#fff" fill-opacity=".8"/><rect x="15.2" y="13.6" width="0.7" height="0.8" fill="#fff" fill-opacity=".8"/><rect x="16.5" y="13.4" width="1.1" height="0.8" fill="#fff" fill-opacity=".8"/><rect x="18.1" y="14.3" width="1.7" height="0.8" fill="#fff" fill-opacity=".8"/><rect x="19.7" y="12.6" width="1.2" height="0.8" fill="#fff" fill-opacity=".8"/></svg>
</div>
<div class="reg" style="left:721px;top:75px;width:23px;height:24px;background:#1d9e9a">
<div class="rl">initial s</div>
<svg class="a" style="left:0;top:0" width="23" height="24"><rect x="15.2" y="11.3" width="1.5" height="0.8" fill="#fff" fill-opacity=".6"/><rect x="4.0" y="14.1" width="1.2" height="0.8" fill="#fff" fill-opacity=".6"/><rect x="1.5" y="11.4" width="1.2" height="0.8" fill="#fff" fill-opacity=".6"/><rect x="14.3" y="16.0" width="2.0" height="0.8" fill="#fff" fill-opacity=".6"/><rect x="14.3" y="16.0" width="0.8" height="0.8" fill="#fff" fill-opacity=".6"/><rect x="19.4" y="16.1" width="1.8" height="0.8" fill="#fff" fill-opacity=".6"/><rect x="18.9" y="20.3" width="1.5" height="0.8" fill="#fff" fill-opacity=".6"/><rect x="11.0" y="22.0" width="1.9" height="0.8" fill="#fff" fill-opacity=".6"/><rect x="4.5" y="16.8" width="1.3" height="0.8" fill="#fff" fill-opacity=".6"/><rect x="0.7" y="14.8" width="1.7" height="0.8" fill="#fff" fill-opacity=".8"/><rect x="2.2" y="14.6" width="2.0" height="0.8" fill="#fff" fill-opacity=".8"/><rect x="3.5" y="15.6" width="1.9" height="0.8" fill="#fff" fill-opacity=".8"/><rect x="5.2" y="13.7" width="1.6" height="0.8" fill="#fff" fill-opacity=".8"/><rect x="6.3" y="15.6" width="1.6" height="0.8" fill="#fff" fill-opacity=".8"/><rect x="8.2" y="17.9" width="1.1" height="0.8" fill="#fff" fill-opacity=".8"/><rect x="9.3" y="16.4" width="2.0" height="0.8" fill="#fff" fill-opacity=".8"/><rect x="10.8" y="16.2" width="0.9" height="0.8" fill="#fff" fill-opacity=".8"/><rect x="12.6" y="17.9" width="1.4" height="0.8" fill="#fff" fill-opacity=".8"/><rect x="13.8" y="19.8" width="1.6" height="0.8" fill="#fff" fill-opacity=".8"/><rect x="15.3" y="19.7" width="2.1" height="0.8" fill="#fff" fill-opacity=".8"/><rect x="16.4" y="17.4" width="1.1" height="0.8" fill="#fff" fill-opacity=".8"/><rect x="18.2" y="19.6" width="2.0" height="0.8" fill="#fff" fill-opacity=".8"/><rect x="19.7" y="21.1" width="1.9" height="0.8" fill="#fff" fill-opacity=".8"/></svg>
</div>
<div class="reg" style="left:745px;top:75px;width:23px;height:24px;background:#1d9e9a">
<div class="rl">initial s</div>
<svg class="a" style="left:0;top:0" width="23" height="24"><rect x="4.7" y="11.2" width="1.8" height="0.8" fill="#fff" fill-opacity=".6"/><rect x="19.5" y="19.2" width="1.8" height="0.8" fill="#fff" fill-opacity=".6"/><rect x="18.6" y="19.6" width="1.6" height="0.8" fill="#fff" fill-opacity=".6"/><rect x="1.0" y="17.5" width="1.9" height="0.8" fill="#fff" fill-opacity=".6"/><rect x="2.0" y="17.1" width="2.0" height="0.8" fill="#fff" fill-opacity=".6"/><rect x="11.1" y="18.8" width="1.5" height="0.8" fill="#fff" fill-opacity=".6"/><rect x="13.9" y="13.7" width="1.0" height="0.8" fill="#fff" fill-opacity=".6"/><rect x="12.4" y="13.6" width="0.9" height="0.8" fill="#fff" fill-opacity=".6"/><rect x="8.0" y="11.9" width="1.1" height="0.8" fill="#fff" fill-opacity=".6"/><rect x="0.5" y="14.5" width="0.9" height="0.8" fill="#fff" fill-opacity=".8"/><rect x="2.0" y="12.3" width="1.7" height="0.8" fill="#fff" fill-opacity=".8"/><rect x="3.7" y="14.7" width="1.9" height="0.8" fill="#fff" fill-opacity=".8"/><rect x="5.3" y="16.4" width="1.6" height="0.8" fill="#fff" fill-opacity=".8"/><rect x="6.5" y="14.5" width="1.3" height="0.8" fill="#fff" fill-opacity=".8"/><rect x="7.9" y="12.1" width="2.2" height="0.8" fill="#fff" fill-opacity=".8"/><rect x="9.1" y="12.3" width="2.1" height="0.8" fill="#fff" fill-opacity=".8"/><rect x="10.9" y="12.8" width="1.4" height="0.8" fill="#fff" fill-opacity=".8"/><rect x="12.0" y="11.9" width="0.8" height="0.8" fill="#fff" fill-opacity=".8"/><rect x="13.5" y="10.7" width="2.0" height="0.8" fill="#fff" fill-opacity=".8"/><rect x="15.3" y="10.7" width="1.8" height="0.8" fill="#fff" fill-opacity=".8"/><rect x="16.4" y="10.7" width="1.8" height="0.8" fill="#fff" fill-opacity=".8"/><rect x="17.9" y="11.5" width="1.6" height="0.8" fill="#fff" fill-opacity=".8"/><rect x="19.3" y="10.7" width="1.2" height="0.8" fill="#fff" fill-opacity=".8"/></svg>
</div>
<div class="reg" style="left:769px;top:75px;width:23px;height:24px;background:#1d9e9a">
<div class="rl">initial s</div>
<svg class="a" style="left:0;top:0" width="23" height="24"><rect x="18.8" y="18.8" width="1.8" height="0.8" fill="#fff" fill-opacity=".6"/><rect x="5.4" y="19.9" width="0.9" height="0.8" fill="#fff" fill-opacity=".6"/><rect x="13.6" y="11.0" width="1.6" height="0.8" fill="#fff" fill-opacity=".6"/><rect x="10.3" y="17.2" width="1.6" height="0.8" fill="#fff" fill-opacity=".6"/><rect x="9.1" y="19.4" width="1.0" height="0.8" fill="#fff" fill-opacity=".6"/><rect x="2.9" y="20.2" width="0.9" height="0.8" fill="#fff" fill-opacity=".6"/><rect x="6.6" y="18.4" width="1.8" height="0.8" fill="#fff" fill-opacity=".6"/><rect x="15.2" y="15.9" width="1.2" height="0.8" fill="#fff" fill-opacity=".6"/><rect x="12.7" y="15.6" width="1.9" height="0.8" fill="#fff" fill-opacity=".6"/><rect x="0.7" y="16.7" width="0.9" height="0.8" fill="#fff" fill-opacity=".8"/><rect x="2.6" y="15.2" width="1.3" height="0.8" fill="#fff" fill-opacity=".8"/><rect x="3.5" y="14.6" width="0.8" height="0.8" fill="#fff" fill-opacity=".8"/><rect x="5.4" y="17.1" width="1.7" height="0.8" fill="#fff" fill-opacity=".8"/><rect x="6.2" y="15.1" width="1.7" height="0.8" fill="#fff" fill-opacity=".8"/><rect x="7.7" y="14.7" width="0.9" height="0.8" fill="#fff" fill-opacity=".8"/><rect x="9.2" y="14.2" width="1.1" height="0.8" fill="#fff" fill-opacity=".8"/><rect x="11.0" y="12.9" width="1.3" height="0.8" fill="#fff" fill-opacity=".8"/><rect x="12.0" y="12.8" width="0.8" height="0.8" fill="#fff" fill-opacity=".8"/><rect x="13.7" y="15.1" width="1.9" height="0.8" fill="#fff" fill-opacity=".8"/><rect x="15.2" y="13.1" width="2.2" height="0.8" fill="#fff" fill-opacity=".8"/><rect x="16.5" y="11.9" width="1.4" height="0.8" fill="#fff" fill-opacity=".8"/><rect x="18.3" y="10.5" width="1.0" height="0.8" fill="#fff" fill-opacity=".8"/><rect x="19.5" y="11.8" width="1.5" height="0.8" fill="#fff" fill-opacity=".8"/></svg>
</div>
<div class="reg" style="left:793px;top:75px;width:23px;height:24px;background:#1d9e9a">
<div class="rl">Inst 1</div>
<svg class="a" style="left:0;top:0" width="23" height="24"><rect x="13.2" y="17.2" width="1.2" height="0.8" fill="#fff" fill-opacity=".6"/><rect x="8.6" y="14.5" width="1.5" height="0.8" fill="#fff" fill-opacity=".6"/><rect x="7.1" y="16.8" width="2.0" height="0.8" fill="#fff" fill-opacity=".6"/><rect x="9.7" y="18.5" width="1.5" height="0.8" fill="#fff" fill-opacity=".6"/><rect x="1.6" y="21.4" width="1.9" height="0.8" fill="#fff" fill-opacity=".6"/><rect x="4.6" y="15.5" width="1.3" height="0.8" fill="#fff" fill-opacity=".6"/><rect x="13.8" y="19.8" width="1.4" height="0.8" fill="#fff" fill-opacity=".6"/><rect x="15.6" y="17.8" width="1.8" height="0.8" fill="#fff" fill-opacity=".6"/><rect x="14.0" y="21.4" width="1.8" height="0.8" fill="#fff" fill-opacity=".6"/><rect x="0.6" y="16.0" width="1.0" height="0.8" fill="#fff" fill-opacity=".8"/><rect x="2.6" y="18.2" width="1.7" height="0.8" fill="#fff" fill-opacity=".8"/><rect x="3.5" y="18.9" width="0.8" height="0.8" fill="#fff" fill-opacity=".8"/><rect x="5.5" y="16.9" width="0.6" height="0.8" fill="#fff" fill-opacity=".8"/><rect x="6.7" y="17.4" width="2.2" height="0.8" fill="#fff" fill-opacity=".8"/><rect x="8.3" y="16.4" width="1.9" height="0.8" fill="#fff" fill-opacity=".8"/><rect x="9.5" y="15.4" width="2.0" height="0.8" fill="#fff" fill-opacity=".8"/><rect x="11.0" y="14.8" width="1.6" height="0.8" fill="#fff" fill-opacity=".8"/><rect x="12.6" y="14.5" width="1.0" height="0.8" fill="#fff" fill-opacity=".8"/><rect x="13.6" y="12.2" width="2.1" height="0.8" fill="#fff" fill-opacity=".8"/><rect x="15.2" y="11.6" width="1.1" height="0.8" fill="#fff" fill-opacity=".8"/><rect x="16.7" y="11.2" width="0.8" height="0.8" fill="#fff" fill-opacity=".8"/><rect x="17.8" y="11.0" width="1.0" height="0.8" fill="#fff" fill-opacity=".8"/><rect x="19.7" y="11.0" width="1.4" height="0.8" fill="#fff" fill-opacity=".8"/></svg>
</div>
<div class="reg" style="left:817px;top:75px;width:23px;height:24px;background:#1d9e9a">
<div class="rl">Ins  1</div>
<svg class="a" style="left:0;top:0" width="23" height="24"><rect x="8.0" y="20.2" width="1.0" height="0.8" fill="#fff" fill-opacity=".6"/><rect x="17.1" y="12.6" width="1.5" height="0.8" fill="#fff" fill-opacity=".6"/><rect x="15.9" y="12.9" width="1.3" height="0.8" fill="#fff" fill-opacity=".6"/><rect x="12.8" y="14.4" width="1.8" height="0.8" fill="#fff" fill-opacity=".6"/><rect x="13.4" y="19.2" width="1.6" height="0.8" fill="#fff" fill-opacity=".6"/><rect x="11.4" y="12.4" width="1.5" height="0.8" fill="#fff" fill-opacity=".6"/><rect x="15.5" y="10.4" width="1.1" height="0.8" fill="#fff" fill-opacity=".6"/><rect x="2.3" y="18.3" width="1.2" height="0.8" fill="#fff" fill-opacity=".6"/><rect x="18.5" y="20.3" width="2.0" height="0.8" fill="#fff" fill-opacity=".6"/><rect x="1.0" y="13.4" width="1.9" height="0.8" fill="#fff" fill-opacity=".8"/><rect x="2.0" y="12.2" width="2.0" height="0.8" fill="#fff" fill-opacity=".8"/><rect x="3.8" y="13.5" width="1.0" height="0.8" fill="#fff" fill-opacity=".8"/><rect x="5.1" y="14.0" width="1.6" height="0.8" fill="#fff" fill-opacity=".8"/><rect x="6.4" y="14.1" width="1.3" height="0.8" fill="#fff" fill-opacity=".8"/><rect x="8.2" y="15.8" width="2.1" height="0.8" fill="#fff" fill-opacity=".8"/><rect x="9.4" y="16.7" width="0.8" height="0.8" fill="#fff" fill-opacity=".8"/><rect x="10.5" y="18.9" width="1.9" height="0.8" fill="#fff" fill-opacity=".8"/><rect x="12.1" y="16.6" width="2.2" height="0.8" fill="#fff" fill-opacity=".8"/><rect x="13.5" y="15.7" width="2.1" height="0.8" fill="#fff" fill-opacity=".8"/><rect x="15.1" y="15.4" width="1.4" height="0.8" fill="#fff" fill-opacity=".8"/><rect x="16.3" y="15.9" width="1.5" height="0.8" fill="#fff" fill-opacity=".8"/><rect x="18.2" y="13.5" width="2.0" height="0.8" fill="#fff" fill-opacity=".8"/><rect x="19.5" y="14.9" width="1.8" height="0.8" fill="#fff" fill-opacity=".8"/></svg>
</div>
<div class="reg" style="left:841px;top:75px;width:23px;height:24px;background:#1d9e9a">
<div class="rl">Inst 1</div>
<svg class="a" style="left:0;top:0" width="23" height="24"><rect x="17.0" y="14.0" width="1.5" height="0.8" fill="#fff" fill-opacity=".6"/><rect x="10.5" y="11.8" width="1.0" height="0.8" fill="#fff" fill-opacity=".6"/><rect x="7.0" y="19.0" width="1.3" height="0.8" fill="#fff" fill-opacity=".6"/><rect x="3.6" y="13.6" width="1.7" height="0.8" fill="#fff" fill-opacity=".6"/><rect x="2.9" y="17.1" width="1.1" height="0.8" fill="#fff" fill-opacity=".6"/><rect x="6.8" y="21.8" width="1.2" height="0.8" fill="#fff" fill-opacity=".6"/><rect x="7.0" y="17.3" width="1.5" height="0.8" fill="#fff" fill-opacity=".6"/><rect x="13.8" y="19.7" width="1.9" height="0.8" fill="#fff" fill-opacity=".6"/><rect x="2.3" y="12.3" width="1.5" height="0.8" fill="#fff" fill-opacity=".6"/><rect x="0.9" y="13.3" width="1.8" height="0.8" fill="#fff" fill-opacity=".8"/><rect x="2.6" y="11.5" width="2.1" height="0.8" fill="#fff" fill-opacity=".8"/><rect x="4.0" y="11.9" width="2.1" height="0.8" fill="#fff" fill-opacity=".8"/><rect x="5.1" y="12.4" width="0.7" height="0.8" fill="#fff" fill-opacity=".8"/><rect x="6.7" y="14.5" width="0.6" height="0.8" fill="#fff" fill-opacity=".8"/><rect x="8.3" y="16.1" width="1.4" height="0.8" fill="#fff" fill-opacity=".8"/><rect x="9.6" y="17.7" width="1.6" height="0.8" fill="#fff" fill-opacity=".8"/><rect x="11.2" y="17.9" width="1.4" height="0.8" fill="#fff" fill-opacity=".8"/><rect x="12.4" y="19.5" width="0.8" height="0.8" fill="#fff" fill-opacity=".8"/><rect x="13.8" y="19.6" width="1.5" height="0.8" fill="#fff" fill-opacity=".8"/><rect x="15.1" y="18.7" width="1.6" height="0.8" fill="#fff" fill-opacity=".8"/><rect x="16.6" y="18.0" width="0.6" height="0.8" fill="#fff" fill-opacity=".8"/><rect x="18.0" y="16.7" width="0.7" height="0.8" fill="#fff" fill-opacity=".8"/><rect x="19.5" y="14.6" width="2.1" height="0.8" fill="#fff" fill-opacity=".8"/></svg>
</div>
<div class="reg" style="left:865px;top:75px;width:23px;height:24px;background:#1d9e9a">
<div class="rl">Inst 1</div>
<svg class="a" style="left:0;top:0" width="23" height="24"><rect x="9.9" y="14.8" width="1.6" height="0.8" fill="#fff" fill-opacity=".6"/><rect x="1.1" y="18.3" width="1.6" height="0.8" fill="#fff" fill-opacity=".6"/><rect x="14.4" y="14.3" width="1.8" height="0.8" fill="#fff" fill-opacity=".6"/><rect x="14.8" y="10.9" width="1.3" height="0.8" fill="#fff" fill-opacity=".6"/><rect x="6.8" y="17.9" width="1.5" height="0.8" fill="#fff" fill-opacity=".6"/><rect x="15.2" y="14.0" width="1.6" height="0.8" fill="#fff" fill-opacity=".6"/><rect x="9.5" y="10.6" width="1.0" height="0.8" fill="#fff" fill-opacity=".6"/><rect x="17.4" y="10.8" width="2.0" height="0.8" fill="#fff" fill-opacity=".6"/><rect x="11.2" y="15.1" width="1.4" height="0.8" fill="#fff" fill-opacity=".6"/><rect x="0.9" y="16.7" width="1.8" height="0.8" fill="#fff" fill-opacity=".8"/><rect x="2.3" y="19.0" width="1.2" height="0.8" fill="#fff" fill-opacity=".8"/><rect x="3.9" y="17.9" width="1.9" height="0.8" fill="#fff" fill-opacity=".8"/><rect x="5.3" y="17.5" width="1.4" height="0.8" fill="#fff" fill-opacity=".8"/><rect x="6.9" y="18.5" width="0.7" height="0.8" fill="#fff" fill-opacity=".8"/><rect x="7.8" y="19.4" width="1.4" height="0.8" fill="#fff" fill-opacity=".8"/><rect x="9.7" y="20.6" width="1.9" height="0.8" fill="#fff" fill-opacity=".8"/><rect x="10.8" y="20.6" width="1.0" height="0.8" fill="#fff" fill-opacity=".8"/><rect x="12.3" y="19.9" width="1.3" height="0.8" fill="#fff" fill-opacity=".8"/><rect x="14.0" y="20.6" width="1.3" height="0.8" fill="#fff" fill-opacity=".8"/><rect x="15.3" y="20.6" width="1.4" height="0.8" fill="#fff" fill-opacity=".8"/><rect x="16.8" y="20.6" width="2.1" height="0.8" fill="#fff" fill-opacity=".8"/><rect x="17.9" y="20.6" width="1.8" height="0.8" fill="#fff" fill-opacity=".8"/><rect x="19.7" y="20.6" width="1.0" height="0.8" fill="#fff" fill-opacity=".8"/></svg>
</div>
<div class="reg" style="left:889px;top:75px;width:13px;height:24px;background:#1d9e9a">
<div class="rl">init</div>
<svg class="a" style="left:0;top:0" width="13" height="24"><rect x="7.7" y="20.1" width="1.8" height="0.8" fill="#fff" fill-opacity=".6"/><rect x="6.6" y="14.5" width="1.4" height="0.8" fill="#fff" fill-opacity=".6"/><rect x="6.4" y="19.9" width="1.3" height="0.8" fill="#fff" fill-opacity=".6"/><rect x="1.1" y="13.0" width="1.1" height="0.8" fill="#fff" fill-opacity=".6"/><rect x="2.4" y="17.0" width="1.5" height="0.8" fill="#fff" fill-opacity=".6"/><rect x="0.7" y="12.0" width="0.8" height="0.8" fill="#fff" fill-opacity=".8"/><rect x="2.0" y="13.0" width="1.9" height="0.8" fill="#fff" fill-opacity=".8"/><rect x="3.5" y="14.7" width="2.1" height="0.8" fill="#fff" fill-opacity=".8"/><rect x="4.9" y="15.3" width="0.7" height="0.8" fill="#fff" fill-opacity=".8"/><rect x="5.8" y="15.7" width="1.7" height="0.8" fill="#fff" fill-opacity=".8"/><rect x="7.0" y="13.3" width="1.3" height="0.8" fill="#fff" fill-opacity=".8"/><rect x="8.4" y="15.7" width="1.3" height="0.8" fill="#fff" fill-opacity=".8"/><rect x="9.6" y="16.8" width="2.1" height="0.8" fill="#fff" fill-opacity=".8"/></svg>
</div>
<div class="reg" style="left:199px;top:100px;width:23px;height:24px;background:#22a085">
<div class="rl">Inst 6</div>
<svg class="a" style="left:0;top:0" width="23" height="24"><rect x="1" y="13.5" width="8.0" height="0.8" fill="#fff" fill-opacity=".7"/><rect x="10.3" y="15.5" width="5.8" height="0.8" fill="#fff" fill-opacity=".7"/><rect x="16.6" y="17.5" width="5.8" height="0.8" fill="#fff" fill-opacity=".7"/></svg>
</div>
<div class="reg" style="left:223px;top:100px;width:23px;height:24px;background:#22a085">
<div class="rl">Inst 6</div>
<svg class="a" style="left:0;top:0" width="23" height="24"><rect x="1" y="11.2" width="8.0" height="0.8" fill="#fff" fill-opacity=".7"/><rect x="10.3" y="13.2" width="5.8" height="0.8" fill="#fff" fill-opacity=".7"/><rect x="16.6" y="15.2" width="5.8" height="0.8" fill="#fff" fill-opacity=".7"/></svg>
</div>
<div class="reg" style="left:247px;top:100px;width:23px;height:24px;background:#22a085">
<div class="rl">Inst 6</div>
<svg class="a" style="left:0;top:0" width="23" height="24"><rect x="1" y="12.0" width="8.0" height="0.8" fill="#fff" fill-opacity=".7"/><rect x="10.3" y="14.0" width="5.8" height="0.8" fill="#fff" fill-opacity=".7"/><rect x="16.6" y="16.0" width="5.8" height="0.8" fill="#fff" fill-opacity=".7"/></svg>
</div>
<div class="reg" style="left:271px;top:100px;width:23px;height:24px;background:#22a085">
<div class="rl">Inst 6</div>
<svg class="a" style="left:0;top:0" width="23" height="24"><rect x="1" y="12.9" width="8.0" height="0.8" fill="#fff" fill-opacity=".7"/><rect x="10.3" y="14.9" width="5.8" height="0.8" fill="#fff" fill-opacity=".7"/><rect x="16.6" y="16.9" width="5.8" height="0.8" fill="#fff" fill-opacity=".7"/></svg>
</div>
<div class="reg" style="left:295px;top:100px;width:47px;height:24px;background:#6038b8">
<div class="rl">Inst 3</div>
<svg class="a" style="left:0;top:0" width="47" height="24"><rect x="1.0" y="17.7" width="4.8" height="0.8" fill="#fff" fill-opacity=".75"/><rect x="6.4" y="17.4" width="9.5" height="0.8" fill="#fff" fill-opacity=".75"/><rect x="16.5" y="17.1" width="4.3" height="0.8" fill="#fff" fill-opacity=".75"/><rect x="21.4" y="17.1" width="3.6" height="0.8" fill="#fff" fill-opacity=".75"/><rect x="25.6" y="17.1" width="7.2" height="0.8" fill="#fff" fill-opacity=".75"/><rect x="33.4" y="18.7" width="5.7" height="0.8" fill="#fff" fill-opacity=".75"/><rect x="39.7" y="15.3" width="3.9" height="0.8" fill="#fff" fill-opacity=".75"/><rect x="26.8" y="10.5" width="1" height="0.8" fill="#fff" fill-opacity=".6"/><rect x="25.6" y="12.8" width="1" height="0.8" fill="#fff" fill-opacity=".6"/><rect x="42.9" y="14.3" width="1" height="0.8" fill="#fff" fill-opacity=".6"/><rect x="33.5" y="15.5" width="1" height="0.8" fill="#fff" fill-opacity=".6"/><rect x="27.4" y="14.0" width="1" height="0.8" fill="#fff" fill-opacity=".6"/></svg>
</div>
<div class="reg" style="left:343px;top:100px;width:23px;height:24px;background:#22a085">
<div class="rl">Inst 6</div>
<svg class="a" style="left:0;top:0" width="23" height="24"><rect x="1" y="11.8" width="8.0" height="0.8" fill="#fff" fill-opacity=".7"/><rect x="10.3" y="13.8" width="5.8" height="0.8" fill="#fff" fill-opacity=".7"/><rect x="16.6" y="15.8" width="5.8" height="0.8" fill="#fff" fill-opacity=".7"/></svg>
</div>
<div class="reg" style="left:367px;top:100px;width:23px;height:24px;background:#22a085">
<div class="rl">Inst 6</div>
<svg class="a" style="left:0;top:0" width="23" height="24"><rect x="1" y="13.6" width="8.0" height="0.8" fill="#fff" fill-opacity=".7"/><rect x="10.3" y="15.6" width="5.8" height="0.8" fill="#fff" fill-opacity=".7"/><rect x="16.6" y="17.6" width="5.8" height="0.8" fill="#fff" fill-opacity=".7"/></svg>
</div>
<div class="reg" style="left:589px;top:100px;width:47px;height:24px;background:#22a085">
<div class="rl">Inst 3</div>
<svg class="a" style="left:0;top:0" width="47" height="24"><rect x="1.0" y="17.4" width="3.3" height="0.8" fill="#fff" fill-opacity=".75"/><rect x="4.9" y="17.9" width="6.2" height="0.8" fill="#fff" fill-opacity=".75"/><rect x="11.8" y="17.5" width="5.4" height="0.8" fill="#fff" fill-opacity=".75"/><rect x="17.8" y="17.8" width="9.9" height="0.8" fill="#fff" fill-opacity=".75"/><rect x="28.3" y="18.3" width="4.7" height="0.8" fill="#fff" fill-opacity=".75"/><rect x="33.6" y="18.6" width="6.1" height="0.8" fill="#fff" fill-opacity=".75"/><rect x="40.3" y="15.0" width="3.9" height="0.8" fill="#fff" fill-opacity=".75"/><rect x="41.2" y="12.1" width="1" height="0.8" fill="#fff" fill-opacity=".6"/><rect x="24.8" y="10.4" width="1" height="0.8" fill="#fff" fill-opacity=".6"/><rect x="35.9" y="14.5" width="1" height="0.8" fill="#fff" fill-opacity=".6"/><rect x="44.5" y="13.8" width="1" height="0.8" fill="#fff" fill-opacity=".6"/><rect x="38.8" y="14.0" width="1" height="0.8" fill="#fff" fill-opacity=".6"/></svg>
</div>
<div class="reg" style="left:637px;top:100px;width:47px;height:24px;background:#6038b8">
<div class="rl">Inst 3</div>
<svg class="a" style="left:0;top:0" width="47" height="24"><rect x="1.0" y="18.1" width="7.4" height="0.8" fill="#fff" fill-opacity=".75"/><rect x="9.0" y="18.3" width="3.0" height="0.8" fill="#fff" fill-opacity=".75"/><rect x="12.6" y="18.4" width="5.9" height="0.8" fill="#fff" fill-opacity=".75"/><rect x="19.1" y="18.3" width="7.7" height="0.8" fill="#fff" fill-opacity=".75"/><rect x="27.4" y="18.0" width="3.4" height="0.8" fill="#fff" fill-opacity=".75"/><rect x="31.3" y="18.1" width="8.5" height="0.8" fill="#fff" fill-opacity=".75"/><rect x="40.4" y="15.5" width="3.3" height="0.8" fill="#fff" fill-opacity=".75"/><rect x="36.4" y="10.7" width="1" height="0.8" fill="#fff" fill-opacity=".6"/><rect x="23.5" y="10.5" width="1" height="0.8" fill="#fff" fill-opacity=".6"/><rect x="26.9" y="13.8" width="1" height="0.8" fill="#fff" fill-opacity=".6"/><rect x="39.3" y="12.1" width="1" height="0.8" fill="#fff" fill-opacity=".6"/><rect x="31.1" y="13.0" width="1" height="0.8" fill="#fff" fill-opacity=".6"/></svg>
</div>
<div class="reg" style="left:889px;top:100px;width:13px;height:24px;background:#6038b8">
<div class="rl">Un</div>
<svg class="a" style="left:0;top:0" width="13" height="24"><rect x="2.7" y="17.3" width="1.6" height="0.8" fill="#fff" fill-opacity=".6"/><rect x="7.1" y="21.0" width="1.9" height="0.8" fill="#fff" fill-opacity=".6"/><rect x="6.3" y="16.3" width="1.9" height="0.8" fill="#fff" fill-opacity=".6"/><rect x="5.8" y="16.8" width="1.2" height="0.8" fill="#fff" fill-opacity=".6"/><rect x="6.7" y="20.4" width="1.4" height="0.8" fill="#fff" fill-opacity=".6"/><rect x="0.7" y="12.8" width="1.3" height="0.8" fill="#fff" fill-opacity=".8"/><rect x="2.0" y="14.9" width="0.8" height="0.8" fill="#fff" fill-opacity=".8"/><rect x="3.5" y="13.6" width="2.1" height="0.8" fill="#fff" fill-opacity=".8"/><rect x="4.5" y="11.1" width="1.7" height="0.8" fill="#fff" fill-opacity=".8"/><rect x="5.9" y="11.8" width="1.1" height="0.8" fill="#fff" fill-opacity=".8"/><rect x="6.8" y="10.7" width="1.5" height="0.8" fill="#fff" fill-opacity=".8"/><rect x="8.4" y="12.8" width="2.2" height="0.8" fill="#fff" fill-opacity=".8"/><rect x="9.3" y="14.0" width="2.1" height="0.8" fill="#fff" fill-opacity=".8"/></svg>
</div>
<div class="reg" style="left:197px;top:125px;width:97px;height:24px;background:#6038b8">
<div class="rl">*fx</div>
<svg class="a" style="left:0;top:0" width="97" height="24"><rect x="42.3" y="11.4" width="31.8" height="0.8" fill="#000" fill-opacity=".22"/><rect x="7.8" y="18.7" width="43.0" height="0.8" fill="#000" fill-opacity=".22"/><rect x="25.1" y="13.8" width="31.9" height="0.8" fill="#000" fill-opacity=".22"/></svg>
</div>
<div class="reg" style="left:295px;top:125px;width:426px;height:24px;background:#6038b8">
<div class="rl">*fx</div>
<svg class="a" style="left:0;top:0" width="426" height="24"><rect x="96.2" y="14.0" width="38.3" height="0.8" fill="#000" fill-opacity=".22"/><rect x="273.1" y="16.4" width="37.6" height="0.8" fill="#000" fill-opacity=".22"/><rect x="120.2" y="19.4" width="51.3" height="0.8" fill="#000" fill-opacity=".22"/><rect x="60.3" y="17.8" width="25.2" height="0.8" fill="#000" fill-opacity=".22"/><rect x="42.1" y="19.8" width="25.2" height="0.8" fill="#000" fill-opacity=".22"/><rect x="27.0" y="17.4" width="51.2" height="0.8" fill="#000" fill-opacity=".22"/><rect x="275.5" y="10.5" width="53.3" height="0.8" fill="#000" fill-opacity=".22"/><rect x="352.9" y="12.0" width="32.8" height="0.8" fill="#000" fill-opacity=".22"/><rect x="306.8" y="14.8" width="31.6" height="0.8" fill="#000" fill-opacity=".22"/><rect x="110.0" y="16.0" width="46.8" height="0.8" fill="#000" fill-opacity=".22"/><rect x="221.0" y="13.9" width="31.2" height="0.8" fill="#000" fill-opacity=".22"/></svg>
</div>
<div class="reg" style="left:747px;top:125px;width:46px;height:24px;background:#3e8a22">
<div class="rl">Frenzy Single Cl</div>
<svg class="a" style="left:0;top:0" width="46" height="24"><rect x="1.0" y="12.5" width="0.7" height="8" fill="#fff" fill-opacity=".13"/><rect x="3.0" y="12.5" width="0.7" height="8" fill="#fff" fill-opacity=".13"/><rect x="5.0" y="12.5" width="0.7" height="8" fill="#fff" fill-opacity=".13"/><rect x="7.0" y="12.5" width="0.7" height="8" fill="#fff" fill-opacity=".13"/><rect x="9.0" y="12.5" width="0.7" height="8" fill="#fff" fill-opacity=".13"/><rect x="11.0" y="12.5" width="0.7" height="8" fill="#fff" fill-opacity=".13"/><rect x="13.0" y="12.5" width="0.7" height="8" fill="#fff" fill-opacity=".13"/><rect x="15.0" y="12.5" width="0.7" height="8" fill="#fff" fill-opacity=".13"/><rect x="17.0" y="12.5" width="0.7" height="8" fill="#fff" fill-opacity=".13"/><rect x="19.0" y="12.5" width="0.7" height="8" fill="#fff" fill-opacity=".13"/><rect x="21.0" y="12.5" width="0.7" height="8" fill="#fff" fill-opacity=".13"/><rect x="23.0" y="12.5" width="0.7" height="8" fill="#fff" fill-opacity=".13"/><rect x="25.0" y="12.5" width="0.7" height="8" fill="#fff" fill-opacity=".13"/><rect x="27.0" y="12.5" width="0.7" height="8" fill="#fff" fill-opacity=".13"/><rect x="29.0" y="12.5" width="0.7" height="8" fill="#fff" fill-opacity=".13"/><rect x="31.0" y="12.5" width="0.7" height="8" fill="#fff" fill-opacity=".13"/><rect x="33.0" y="12.5" width="0.7" height="8" fill="#fff" fill-opacity=".13"/><rect x="35.0" y="12.5" width="0.7" height="8" fill="#fff" fill-opacity=".13"/><rect x="37.0" y="12.5" width="0.7" height="8" fill="#fff" fill-opacity=".13"/><rect x="39.0" y="12.5" width="0.7" height="8" fill="#fff" fill-opacity=".13"/><rect x="41.0" y="12.5" width="0.7" height="8" fill="#fff" fill-opacity=".13"/><rect x="43.0" y="12.5" width="0.7" height="8" fill="#fff" fill-opacity=".13"/><rect x="45.0" y="12.5" width="0.7" height="8" fill="#fff" fill-opacity=".13"/><rect x="1" y="15.8" width="44.0" height="0.8" fill="#fff" fill-opacity=".4"/></svg>
</div>
<div class="reg" style="left:794px;top:125px;width:108px;height:24px;background:#6038b8">
<div class="rl">*fx</div>
<svg class="a" style="left:0;top:0" width="108" height="24"><rect x="53.4" y="14.7" width="52.2" height="0.8" fill="#000" fill-opacity=".22"/><rect x="9.5" y="19.2" width="59.2" height="0.8" fill="#000" fill-opacity=".22"/><rect x="4.8" y="14.6" width="45.0" height="0.8" fill="#000" fill-opacity=".22"/></svg>
</div>
<div class="reg" style="left:343px;top:151px;width:23px;height:23px;background:#1d9e9a">
<div class="rl">Inst 1</div>
<svg class="a" style="left:0;top:0" width="23" height="23"><rect x="19.6" y="19.7" width="1.7" height="0.8" fill="#fff" fill-opacity=".6"/><rect x="17.4" y="22.2" width="1.7" height="0.8" fill="#fff" fill-opacity=".6"/><rect x="5.3" y="16.0" width="1.6" height="0.8" fill="#fff" fill-opacity=".6"/><rect x="9.8" y="18.3" width="1.3" height="0.8" fill="#fff" fill-opacity=".6"/><rect x="11.4" y="13.0" width="1.6" height="0.8" fill="#fff" fill-opacity=".6"/><rect x="15.8" y="11.7" width="1.3" height="0.8" fill="#fff" fill-opacity=".6"/><rect x="4.0" y="21.9" width="1.6" height="0.8" fill="#fff" fill-opacity=".6"/><rect x="18.9" y="16.4" width="1.2" height="0.8" fill="#fff" fill-opacity=".6"/><rect x="4.6" y="12.3" width="1.8" height="0.8" fill="#fff" fill-opacity=".6"/><rect x="0.6" y="17.8" width="1.7" height="0.8" fill="#fff" fill-opacity=".8"/><rect x="2.3" y="16.0" width="1.9" height="0.8" fill="#fff" fill-opacity=".8"/><rect x="3.8" y="13.5" width="1.9" height="0.8" fill="#fff" fill-opacity=".8"/><rect x="5.3" y="14.4" width="1.1" height="0.8" fill="#fff" fill-opacity=".8"/><rect x="6.4" y="13.4" width="0.7" height="0.8" fill="#fff" fill-opacity=".8"/><rect x="8.2" y="15.5" width="0.7" height="0.8" fill="#fff" fill-opacity=".8"/><rect x="9.1" y="13.9" width="0.6" height="0.8" fill="#fff" fill-opacity=".8"/><rect x="10.8" y="11.7" width="1.3" height="0.8" fill="#fff" fill-opacity=".8"/><rect x="12.1" y="11.7" width="2.0" height="0.8" fill="#fff" fill-opacity=".8"/><rect x="13.8" y="11.9" width="1.2" height="0.8" fill="#fff" fill-opacity=".8"/><rect x="15.5" y="11.9" width="1.5" height="0.8" fill="#fff" fill-opacity=".8"/><rect x="16.7" y="13.8" width="1.9" height="0.8" fill="#fff" fill-opacity=".8"/><rect x="17.8" y="12.6" width="1.5" height="0.8" fill="#fff" fill-opacity=".8"/><rect x="19.5" y="11.4" width="1.1" height="0.8" fill="#fff" fill-opacity=".8"/></svg>
</div>
<div class="reg" style="left:367px;top:151px;width:23px;height:23px;background:#1d9e9a">
<div class="rl">Inst 1</div>
<svg class="a" style="left:0;top:0" width="23" height="23"><rect x="10.2" y="13.0" width="1.8" height="0.8" fill="#fff" fill-opacity=".6"/><rect x="15.6" y="11.6" width="1.6" height="0.8" fill="#fff" fill-opacity=".6"/><rect x="11.3" y="13.7" width="1.2" height="0.8" fill="#fff" fill-opacity=".6"/><rect x="17.9" y="19.5" width="1.7" height="0.8" fill="#fff" fill-opacity=".6"/><rect x="5.8" y="20.0" width="1.8" height="0.8" fill="#fff" fill-opacity=".6"/><rect x="3.3" y="11.3" width="1.6" height="0.8" fill="#fff" fill-opacity=".6"/><rect x="1.9" y="21.5" width="0.9" height="0.8" fill="#fff" fill-opacity=".6"/><rect x="17.6" y="12.6" width="1.4" height="0.8" fill="#fff" fill-opacity=".6"/><rect x="8.1" y="16.2" width="1.2" height="0.8" fill="#fff" fill-opacity=".6"/><rect x="0.5" y="14.9" width="0.8" height="0.8" fill="#fff" fill-opacity=".8"/><rect x="2.6" y="15.7" width="1.4" height="0.8" fill="#fff" fill-opacity=".8"/><rect x="3.4" y="15.6" width="1.9" height="0.8" fill="#fff" fill-opacity=".8"/><rect x="4.9" y="15.1" width="1.0" height="0.8" fill="#fff" fill-opacity=".8"/><rect x="6.8" y="16.1" width="1.9" height="0.8" fill="#fff" fill-opacity=".8"/><rect x="7.8" y="16.4" width="1.8" height="0.8" fill="#fff" fill-opacity=".8"/><rect x="9.3" y="16.7" width="0.9" height="0.8" fill="#fff" fill-opacity=".8"/><rect x="10.6" y="17.0" width="1.3" height="0.8" fill="#fff" fill-opacity=".8"/><rect x="12.0" y="15.9" width="1.4" height="0.8" fill="#fff" fill-opacity=".8"/><rect x="13.6" y="15.1" width="1.9" height="0.8" fill="#fff" fill-opacity=".8"/><rect x="15.2" y="12.8" width="1.0" height="0.8" fill="#fff" fill-opacity=".8"/><rect x="16.3" y="11.0" width="0.7" height="0.8" fill="#fff" fill-opacity=".8"/><rect x="17.7" y="13.2" width="0.9" height="0.8" fill="#fff" fill-opacity=".8"/><rect x="19.6" y="11.8" width="1.9" height="0.8" fill="#fff" fill-opacity=".8"/></svg>
</div>
<div class="reg" style="left:445px;top:151px;width:47px;height:23px;background:#1d9e9a">
<div class="rl">Untitled</div>
<svg class="a" style="left:0;top:0" width="47" height="23"><rect x="1.0" y="12.5" width="1" height="0.7" fill="#fff" fill-opacity=".6"/><rect x="3.0" y="12.5" width="1" height="0.7" fill="#fff" fill-opacity=".6"/><rect x="5.0" y="12.5" width="1" height="0.7" fill="#fff" fill-opacity=".6"/><rect x="7.0" y="12.5" width="1" height="0.7" fill="#fff" fill-opacity=".6"/><rect x="9.0" y="12.5" width="1" height="0.7" fill="#fff" fill-opacity=".6"/><rect x="11.0" y="12.5" width="1" height="0.7" fill="#fff" fill-opacity=".6"/><rect x="13.0" y="12.5" width="1" height="0.7" fill="#fff" fill-opacity=".6"/><rect x="15.0" y="12.5" width="1" height="0.7" fill="#fff" fill-opacity=".6"/><rect x="17.0" y="12.5" width="1" height="0.7" fill="#fff" fill-opacity=".6"/><rect x="19.0" y="12.5" width="1" height="0.7" fill="#fff" fill-opacity=".6"/><rect x="21.0" y="12.5" width="1" height="0.7" fill="#fff" fill-opacity=".6"/><rect x="23.0" y="12.5" width="1" height="0.7" fill="#fff" fill-opacity=".6"/><rect x="25.0" y="12.5" width="1" height="0.7" fill="#fff" fill-opacity=".6"/><rect x="27.0" y="12.5" width="1" height="0.7" fill="#fff" fill-opacity=".6"/><rect x="29.0" y="12.5" width="1" height="0.7" fill="#fff" fill-opacity=".6"/><rect x="31.0" y="12.5" width="1" height="0.7" fill="#fff" fill-opacity=".6"/><rect x="33.0" y="12.5" width="1" height="0.7" fill="#fff" fill-opacity=".6"/><rect x="35.0" y="12.5" width="1" height="0.7" fill="#fff" fill-opacity=".6"/><rect x="37.0" y="12.5" width="1" height="0.7" fill="#fff" fill-opacity=".6"/><rect x="39.0" y="12.5" width="1" height="0.7" fill="#fff" fill-opacity=".6"/><rect x="41.0" y="12.5" width="1" height="0.7" fill="#fff" fill-opacity=".6"/><rect x="43.0" y="12.5" width="1" height="0.7" fill="#fff" fill-opacity=".6"/><rect x="45.0" y="12.5" width="1" height="0.7" fill="#fff" fill-opacity=".6"/><rect x="1.0" y="17.5" width="1" height="0.7" fill="#fff" fill-opacity=".6"/><rect x="3.0" y="17.5" width="1" height="0.7" fill="#fff" fill-opacity=".6"/><rect x="5.0" y="17.5" width="1" height="0.7" fill="#fff" fill-opacity=".6"/><rect x="7.0" y="17.5" width="1" height="0.7" fill="#fff" fill-opacity=".6"/><rect x="9.0" y="17.5" width="1" height="0.7" fill="#fff" fill-opacity=".6"/><rect x="11.0" y="17.5" width="1" height="0.7" fill="#fff" fill-opacity=".6"/><rect x="13.0" y="17.5" width="1" height="0.7" fill="#fff" fill-opacity=".6"/><rect x="15.0" y="17.5" width="1" height="0.7" fill="#fff" fill-opacity=".6"/><rect x="17.0" y="17.5" width="1" height="0.7" fill="#fff" fill-opacity=".6"/><rect x="19.0" y="17.5" width="1" height="0.7" fill="#fff" fill-opacity=".6"/><rect x="21.0" y="17.5" width="1" height="0.7" fill="#fff" fill-opacity=".6"/><rect x="23.0" y="17.5" width="1" height="0.7" fill="#fff" fill-opacity=".6"/><rect x="25.0" y="17.5" width="1" height="0.7" fill="#fff" fill-opacity=".6"/><rect x="27.0" y="17.5" width="1" height="0.7" fill="#fff" fill-opacity=".6"/><rect x="29.0" y="17.5" width="1" height="0.7" fill="#fff" fill-opacity=".6"/><rect x="31.0" y="17.5" width="1" height="0.7" fill="#fff" fill-opacity=".6"/><rect x="33.0" y="17.5" width="1" height="0.7" fill="#fff" fill-opacity=".6"/><rect x="35.0" y="17.5" width="1" height="0.7" fill="#fff" fill-opacity=".6"/><rect x="37.0" y="17.5" width="1" height="0.7" fill="#fff" fill-opacity=".6"/><rect x="39.0" y="17.5" width="1" height="0.7" fill="#fff" fill-opacity=".6"/><rect x="41.0" y="17.5" width="1" height="0.7" fill="#fff" fill-opacity=".6"/><rect x="43.0" y="17.5" width="1" height="0.7" fill="#fff" fill-opacity=".6"/><rect x="45.0" y="17.5" width="1" height="0.7" fill="#fff" fill-opacity=".6"/></svg>
</div>
<div class="reg" style="left:493px;top:151px;width:23px;height:23px;background:#1d9e9a">
<div class="rl">initial s</div>
<svg class="a" style="left:0;top:0" width="23" height="23"><rect x="10.4" y="13.7" width="0.8" height="0.8" fill="#fff" fill-opacity=".6"/><rect x="5.3" y="15.4" width="1.9" height="0.8" fill="#fff" fill-opacity=".6"/><rect x="12.0" y="15.3" width="1.4" height="0.8" fill="#fff" fill-opacity=".6"/><rect x="14.0" y="19.1" width="1.2" height="0.8" fill="#fff" fill-opacity=".6"/><rect x="10.8" y="19.1" width="1.8" height="0.8" fill="#fff" fill-opacity=".6"/><rect x="11.3" y="18.5" width="1.3" height="0.8" fill="#fff" fill-opacity=".6"/><rect x="1.9" y="11.5" width="2.0" height="0.8" fill="#fff" fill-opacity=".6"/><rect x="16.1" y="17.8" width="1.8" height="0.8" fill="#fff" fill-opacity=".6"/><rect x="18.0" y="21.3" width="1.9" height="0.8" fill="#fff" fill-opacity=".6"/><rect x="0.9" y="16.6" width="1.5" height="0.8" fill="#fff" fill-opacity=".8"/><rect x="2.2" y="14.4" width="1.2" height="0.8" fill="#fff" fill-opacity=".8"/><rect x="4.0" y="12.3" width="1.0" height="0.8" fill="#fff" fill-opacity=".8"/><rect x="4.9" y="12.1" width="1.2" height="0.8" fill="#fff" fill-opacity=".8"/><rect x="6.5" y="11.2" width="1.8" height="0.8" fill="#fff" fill-opacity=".8"/><rect x="7.9" y="11.2" width="1.5" height="0.8" fill="#fff" fill-opacity=".8"/><rect x="9.3" y="13.0" width="1.8" height="0.8" fill="#fff" fill-opacity=".8"/><rect x="10.5" y="13.3" width="0.9" height="0.8" fill="#fff" fill-opacity=".8"/><rect x="12.5" y="11.2" width="1.2" height="0.8" fill="#fff" fill-opacity=".8"/><rect x="13.9" y="11.2" width="2.0" height="0.8" fill="#fff" fill-opacity=".8"/><rect x="15.1" y="12.5" width="1.1" height="0.8" fill="#fff" fill-opacity=".8"/><rect x="16.9" y="13.8" width="1.8" height="0.8" fill="#fff" fill-opacity=".8"/><rect x="17.7" y="14.3" width="0.9" height="0.8" fill="#fff" fill-opacity=".8"/><rect x="19.3" y="14.5" width="0.9" height="0.8" fill="#fff" fill-opacity=".8"/></svg>
</div>
<div class="reg" style="left:517px;top:151px;width:23px;height:23px;background:#1d9e9a">
<div class="rl">initial s</div>
<svg class="a" style="left:0;top:0" width="23" height="23"><rect x="14.1" y="19.2" width="1.5" height="0.8" fill="#fff" fill-opacity=".6"/><rect x="5.5" y="16.3" width="1.3" height="0.8" fill="#fff" fill-opacity=".6"/><rect x="9.9" y="14.7" width="1.8" height="0.8" fill="#fff" fill-opacity=".6"/><rect x="15.4" y="20.3" width="1.0" height="0.8" fill="#fff" fill-opacity=".6"/><rect x="7.5" y="16.3" width="1.0" height="0.8" fill="#fff" fill-opacity=".6"/><rect x="3.8" y="11.6" width="1.8" height="0.8" fill="#fff" fill-opacity=".6"/><rect x="1.9" y="13.2" width="1.6" height="0.8" fill="#fff" fill-opacity=".6"/><rect x="9.6" y="15.8" width="1.0" height="0.8" fill="#fff" fill-opacity=".6"/><rect x="2.3" y="14.3" width="0.9" height="0.8" fill="#fff" fill-opacity=".6"/><rect x="0.9" y="13.4" width="2.1" height="0.8" fill="#fff" fill-opacity=".8"/><rect x="2.1" y="12.7" width="1.2" height="0.8" fill="#fff" fill-opacity=".8"/><rect x="3.5" y="14.5" width="2.2" height="0.8" fill="#fff" fill-opacity=".8"/><rect x="4.9" y="14.1" width="0.8" height="0.8" fill="#fff" fill-opacity=".8"/><rect x="6.4" y="13.0" width="1.7" height="0.8" fill="#fff" fill-opacity=".8"/><rect x="7.9" y="10.7" width="0.8" height="0.8" fill="#fff" fill-opacity=".8"/><rect x="9.4" y="12.8" width="1.8" height="0.8" fill="#fff" fill-opacity=".8"/><rect x="10.8" y="10.6" width="1.9" height="0.8" fill="#fff" fill-opacity=".8"/><rect x="12.6" y="10.6" width="1.0" height="0.8" fill="#fff" fill-opacity=".8"/><rect x="13.5" y="11.4" width="1.6" height="0.8" fill="#fff" fill-opacity=".8"/><rect x="15.4" y="12.2" width="0.6" height="0.8" fill="#fff" fill-opacity=".8"/><rect x="16.9" y="10.5" width="1.1" height="0.8" fill="#fff" fill-opacity=".8"/><rect x="18.3" y="10.0" width="1.1" height="0.8" fill="#fff" fill-opacity=".8"/><rect x="19.1" y="10.0" width="1.3" height="0.8" fill="#fff" fill-opacity=".8"/></svg>
</div>
<div class="reg" style="left:637px;top:151px;width:23px;height:23px;background:#1d9e9a">
<div class="rl">Inst 1</div>
<svg class="a" style="left:0;top:0" width="23" height="23"><rect x="6.2" y="14.9" width="1.0" height="0.8" fill="#fff" fill-opacity=".6"/><rect x="16.7" y="18.9" width="1.4" height="0.8" fill="#fff" fill-opacity=".6"/><rect x="1.3" y="13.4" width="1.1" height="0.8" fill="#fff" fill-opacity=".6"/><rect x="1.5" y="11.9" width="0.9" height="0.8" fill="#fff" fill-opacity=".6"/><rect x="15.5" y="21.5" width="1.4" height="0.8" fill="#fff" fill-opacity=".6"/><rect x="18.8" y="11.8" width="1.7" height="0.8" fill="#fff" fill-opacity=".6"/><rect x="11.9" y="14.2" width="1.5" height="0.8" fill="#fff" fill-opacity=".6"/><rect x="19.5" y="16.0" width="1.1" height="0.8" fill="#fff" fill-opacity=".6"/><rect x="4.6" y="19.3" width="1.1" height="0.8" fill="#fff" fill-opacity=".6"/><rect x="0.8" y="15.9" width="1.4" height="0.8" fill="#fff" fill-opacity=".8"/><rect x="2.4" y="15.2" width="1.1" height="0.8" fill="#fff" fill-opacity=".8"/><rect x="3.8" y="14.4" width="0.7" height="0.8" fill="#fff" fill-opacity=".8"/><rect x="5.0" y="14.1" width="1.8" height="0.8" fill="#fff" fill-opacity=".8"/><rect x="6.5" y="15.2" width="2.0" height="0.8" fill="#fff" fill-opacity=".8"/><rect x="8.3" y="16.2" width="0.6" height="0.8" fill="#fff" fill-opacity=".8"/><rect x="9.5" y="17.6" width="1.6" height="0.8" fill="#fff" fill-opacity=".8"/><rect x="10.8" y="17.3" width="1.3" height="0.8" fill="#fff" fill-opacity=".8"/><rect x="12.2" y="18.3" width="2.1" height="0.8" fill="#fff" fill-opacity=".8"/><rect x="13.9" y="19.4" width="1.9" height="0.8" fill="#fff" fill-opacity=".8"/><rect x="15.2" y="21.4" width="1.0" height="0.8" fill="#fff" fill-opacity=".8"/><rect x="16.4" y="20.8" width="0.6" height="0.8" fill="#fff" fill-opacity=".8"/><rect x="17.9" y="20.6" width="1.6" height="0.8" fill="#fff" fill-opacity=".8"/><rect x="19.2" y="18.7" width="2.1" height="0.8" fill="#fff" fill-opacity=".8"/></svg>
</div>
<div class="reg" style="left:661px;top:151px;width:23px;height:23px;background:#1d9e9a">
<div class="rl">Inst 1</div>
<svg class="a" style="left:0;top:0" width="23" height="23"><rect x="19.8" y="15.3" width="1.7" height="0.8" fill="#fff" fill-opacity=".6"/><rect x="19.4" y="21.0" width="1.8" height="0.8" fill="#fff" fill-opacity=".6"/><rect x="16.7" y="12.6" width="1.9" height="0.8" fill="#fff" fill-opacity=".6"/><rect x="10.9" y="19.3" width="1.3" height="0.8" fill="#fff" fill-opacity=".6"/><rect x="11.7" y="16.5" width="1.4" height="0.8" fill="#fff" fill-opacity=".6"/><rect x="17.2" y="12.7" width="1.4" height="0.8" fill="#fff" fill-opacity=".6"/><rect x="11.0" y="19.0" width="1.1" height="0.8" fill="#fff" fill-opacity=".6"/><rect x="9.7" y="19.6" width="1.3" height="0.8" fill="#fff" fill-opacity=".6"/><rect x="13.3" y="18.6" width="0.8" height="0.8" fill="#fff" fill-opacity=".6"/><rect x="1.2" y="17.3" width="2.0" height="0.8" fill="#fff" fill-opacity=".8"/><rect x="2.2" y="17.1" width="1.3" height="0.8" fill="#fff" fill-opacity=".8"/><rect x="3.9" y="18.4" width="1.7" height="0.8" fill="#fff" fill-opacity=".8"/><rect x="4.8" y="19.3" width="1.3" height="0.8" fill="#fff" fill-opacity=".8"/><rect x="6.3" y="17.6" width="1.9" height="0.8" fill="#fff" fill-opacity=".8"/><rect x="8.1" y="17.9" width="0.9" height="0.8" fill="#fff" fill-opacity=".8"/><rect x="9.7" y="19.4" width="2.1" height="0.8" fill="#fff" fill-opacity=".8"/><rect x="10.7" y="18.8" width="1.4" height="0.8" fill="#fff" fill-opacity=".8"/><rect x="12.0" y="21.0" width="1.5" height="0.8" fill="#fff" fill-opacity=".8"/><rect x="14.0" y="21.3" width="0.8" height="0.8" fill="#fff" fill-opacity=".8"/><rect x="14.9" y="19.9" width="1.2" height="0.8" fill="#fff" fill-opacity=".8"/><rect x="16.5" y="21.1" width="1.8" height="0.8" fill="#fff" fill-opacity=".8"/><rect x="18.3" y="18.8" width="1.3" height="0.8" fill="#fff" fill-opacity=".8"/><rect x="19.6" y="20.2" width="1.6" height="0.8" fill="#fff" fill-opacity=".8"/></svg>
</div>
<div class="reg" style="left:197px;top:176px;width:25px;height:24px;background:#27a55c">
<div class="rl">initial so</div>
<svg class="a" style="left:0;top:0" width="25" height="24"><rect x="4.4" y="11.9" width="1.9" height="0.8" fill="#fff" fill-opacity=".6"/><rect x="8.9" y="11.2" width="1.7" height="0.8" fill="#fff" fill-opacity=".6"/><rect x="3.4" y="19.7" width="1.8" height="0.8" fill="#fff" fill-opacity=".6"/><rect x="11.1" y="16.6" width="1.0" height="0.8" fill="#fff" fill-opacity=".6"/><rect x="20.1" y="17.8" width="1.1" height="0.8" fill="#fff" fill-opacity=".6"/><rect x="20.1" y="18.6" width="1.5" height="0.8" fill="#fff" fill-opacity=".6"/><rect x="12.1" y="10.9" width="1.1" height="0.8" fill="#fff" fill-opacity=".6"/><rect x="5.1" y="16.3" width="1.9" height="0.8" fill="#fff" fill-opacity=".6"/><rect x="7.2" y="20.6" width="1.8" height="0.8" fill="#fff" fill-opacity=".6"/><rect x="3.3" y="12.1" width="1.7" height="0.8" fill="#fff" fill-opacity=".6"/><rect x="0.9" y="12.1" width="1.2" height="0.8" fill="#fff" fill-opacity=".8"/><rect x="2.6" y="14.0" width="1.3" height="0.8" fill="#fff" fill-opacity=".8"/><rect x="4.1" y="16.4" width="0.7" height="0.8" fill="#fff" fill-opacity=".8"/><rect x="5.5" y="15.9" width="1.6" height="0.8" fill="#fff" fill-opacity=".8"/><rect x="6.5" y="14.1" width="1.4" height="0.8" fill="#fff" fill-opacity=".8"/><rect x="8.4" y="11.8" width="1.7" height="0.8" fill="#fff" fill-opacity=".8"/><rect x="9.9" y="14.0" width="2.2" height="0.8" fill="#fff" fill-opacity=".8"/><rect x="10.9" y="14.5" width="2.1" height="0.8" fill="#fff" fill-opacity=".8"/><rect x="12.8" y="12.1" width="1.5" height="0.8" fill="#fff" fill-opacity=".8"/><rect x="14.4" y="10.3" width="0.9" height="0.8" fill="#fff" fill-opacity=".8"/><rect x="15.7" y="10.3" width="2.0" height="0.8" fill="#fff" fill-opacity=".8"/><rect x="17.1" y="10.3" width="0.9" height="0.8" fill="#fff" fill-opacity=".8"/><rect x="18.3" y="12.0" width="2.0" height="0.8" fill="#fff" fill-opacity=".8"/><rect x="19.9" y="14.2" width="0.7" height="0.8" fill="#fff" fill-opacity=".8"/><rect x="21.2" y="12.4" width="2.1" height="0.8" fill="#fff" fill-opacity=".8"/></svg>
</div>
<div class="reg" style="left:223px;top:176px;width:23px;height:24px;background:#27a55c">
<div class="rl">initial s</div>
<svg class="a" style="left:0;top:0" width="23" height="24"><rect x="14.3" y="10.7" width="1.8" height="0.8" fill="#fff" fill-opacity=".6"/><rect x="5.5" y="13.8" width="1.6" height="0.8" fill="#fff" fill-opacity=".6"/><rect x="15.6" y="12.6" width="1.2" height="0.8" fill="#fff" fill-opacity=".6"/><rect x="12.4" y="19.2" width="1.3" height="0.8" fill="#fff" fill-opacity=".6"/><rect x="9.8" y="11.1" width="1.8" height="0.8" fill="#fff" fill-opacity=".6"/><rect x="15.9" y="14.8" width="1.3" height="0.8" fill="#fff" fill-opacity=".6"/><rect x="15.8" y="18.3" width="0.9" height="0.8" fill="#fff" fill-opacity=".6"/><rect x="10.2" y="14.7" width="1.1" height="0.8" fill="#fff" fill-opacity=".6"/><rect x="1.9" y="15.3" width="1.1" height="0.8" fill="#fff" fill-opacity=".6"/><rect x="1.2" y="13.2" width="2.0" height="0.8" fill="#fff" fill-opacity=".8"/><rect x="2.0" y="12.1" width="1.9" height="0.8" fill="#fff" fill-opacity=".8"/><rect x="3.9" y="11.6" width="0.9" height="0.8" fill="#fff" fill-opacity=".8"/><rect x="4.9" y="10.6" width="2.1" height="0.8" fill="#fff" fill-opacity=".8"/><rect x="6.6" y="10.4" width="1.7" height="0.8" fill="#fff" fill-opacity=".8"/><rect x="7.8" y="10.4" width="1.3" height="0.8" fill="#fff" fill-opacity=".8"/><rect x="9.5" y="10.4" width="1.2" height="0.8" fill="#fff" fill-opacity=".8"/><rect x="11.2" y="12.0" width="1.5" height="0.8" fill="#fff" fill-opacity=".8"/><rect x="12.3" y="10.4" width="1.2" height="0.8" fill="#fff" fill-opacity=".8"/><rect x="13.5" y="10.7" width="1.7" height="0.8" fill="#fff" fill-opacity=".8"/><rect x="15.3" y="11.2" width="0.7" height="0.8" fill="#fff" fill-opacity=".8"/><rect x="16.6" y="13.3" width="1.2" height="0.8" fill="#fff" fill-opacity=".8"/><rect x="18.3" y="13.0" width="0.6" height="0.8" fill="#fff" fill-opacity=".8"/><rect x="19.2" y="11.2" width="2.2" height="0.8" fill="#fff" fill-opacity=".8"/></svg>
</div>
<div class="reg" style="left:247px;top:176px;width:23px;height:24px;background:#27a55c">
<div class="rl">initial s</div>
<svg class="a" style="left:0;top:0" width="23" height="24"><rect x="2.4" y="16.5" width="1.1" height="0.8" fill="#fff" fill-opacity=".6"/><rect x="10.5" y="14.5" width="1.4" height="0.8" fill="#fff" fill-opacity=".6"/><rect x="13.4" y="12.4" width="0.9" height="0.8" fill="#fff" fill-opacity=".6"/><rect x="8.1" y="16.0" width="1.5" height="0.8" fill="#fff" fill-opacity=".6"/><rect x="8.7" y="13.6" width="0.9" height="0.8" fill="#fff" fill-opacity=".6"/><rect x="6.1" y="10.4" width="2.0" height="0.8" fill="#fff" fill-opacity=".6"/><rect x="10.6" y="10.2" width="1.3" height="0.8" fill="#fff" fill-opacity=".6"/><rect x="9.5" y="12.0" width="1.7" height="0.8" fill="#fff" fill-opacity=".6"/><rect x="11.8" y="16.9" width="1.3" height="0.8" fill="#fff" fill-opacity=".6"/><rect x="0.5" y="16.5" width="0.8" height="0.8" fill="#fff" fill-opacity=".8"/><rect x="2.3" y="16.5" width="0.7" height="0.8" fill="#fff" fill-opacity=".8"/><rect x="3.4" y="17.4" width="2.2" height="0.8" fill="#fff" fill-opacity=".8"/><rect x="5.2" y="17.0" width="0.8" height="0.8" fill="#fff" fill-opacity=".8"/><rect x="6.6" y="17.4" width="0.8" height="0.8" fill="#fff" fill-opacity=".8"/><rect x="8.1" y="18.8" width="1.9" height="0.8" fill="#fff" fill-opacity=".8"/><rect x="9.5" y="16.3" width="1.2" height="0.8" fill="#fff" fill-opacity=".8"/><rect x="10.8" y="14.1" width="1.7" height="0.8" fill="#fff" fill-opacity=".8"/><rect x="12.4" y="14.1" width="1.4" height="0.8" fill="#fff" fill-opacity=".8"/><rect x="13.8" y="15.7" width="1.3" height="0.8" fill="#fff" fill-opacity=".8"/><rect x="15.0" y="15.8" width="1.1" height="0.8" fill="#fff" fill-opacity=".8"/><rect x="16.3" y="17.3" width="1.5" height="0.8" fill="#fff" fill-opacity=".8"/><rect x="18.0" y="17.3" width="0.7" height="0.8" fill="#fff" fill-opacity=".8"/><rect x="19.6" y="16.8" width="1.2" height="0.8" fill="#fff" fill-opacity=".8"/></svg>
</div>
<div class="reg" style="left:271px;top:176px;width:23px;height:24px;background:#27a55c">
<div class="rl">initial s</div>
<svg class="a" style="left:0;top:0" width="23" height="24"><rect x="12.7" y="18.5" width="1.6" height="0.8" fill="#fff" fill-opacity=".6"/><rect x="6.1" y="14.9" width="1.1" height="0.8" fill="#fff" fill-opacity=".6"/><rect x="9.3" y="12.2" width="0.9" height="0.8" fill="#fff" fill-opacity=".6"/><rect x="13.0" y="18.1" width="1.5" height="0.8" fill="#fff" fill-opacity=".6"/><rect x="2.0" y="20.2" width="1.5" height="0.8" fill="#fff" fill-opacity=".6"/><rect x="2.3" y="13.8" width="1.6" height="0.8" fill="#fff" fill-opacity=".6"/><rect x="4.4" y="18.9" width="1.6" height="0.8" fill="#fff" fill-opacity=".6"/><rect x="14.7" y="21.5" width="1.3" height="0.8" fill="#fff" fill-opacity=".6"/><rect x="5.3" y="14.8" width="0.9" height="0.8" fill="#fff" fill-opacity=".6"/><rect x="0.9" y="15.0" width="1.2" height="0.8" fill="#fff" fill-opacity=".8"/><rect x="2.4" y="17.3" width="0.9" height="0.8" fill="#fff" fill-opacity=".8"/><rect x="3.8" y="16.7" width="1.2" height="0.8" fill="#fff" fill-opacity=".8"/><rect x="5.4" y="18.4" width="1.0" height="0.8" fill="#fff" fill-opacity=".8"/><rect x="6.5" y="17.6" width="2.1" height="0.8" fill="#fff" fill-opacity=".8"/><rect x="8.1" y="15.4" width="2.1" height="0.8" fill="#fff" fill-opacity=".8"/><rect x="9.2" y="14.2" width="0.9" height="0.8" fill="#fff" fill-opacity=".8"/><rect x="10.8" y="14.1" width="1.1" height="0.8" fill="#fff" fill-opacity=".8"/><rect x="12.6" y="13.1" width="1.9" height="0.8" fill="#fff" fill-opacity=".8"/><rect x="13.4" y="10.8" width="0.7" height="0.8" fill="#fff" fill-opacity=".8"/><rect x="15.2" y="10.8" width="1.3" height="0.8" fill="#fff" fill-opacity=".8"/><rect x="16.9" y="10.8" width="1.9" height="0.8" fill="#fff" fill-opacity=".8"/><rect x="17.8" y="12.4" width="0.7" height="0.8" fill="#fff" fill-opacity=".8"/><rect x="19.1" y="12.8" width="1.1" height="0.8" fill="#fff" fill-opacity=".8"/></svg>
</div>
<div class="reg" style="left:637px;top:176px;width:47px;height:24px;background:#27a55c">
<div class="rl">Inst 6</div>
<svg class="a" style="left:0;top:0" width="47" height="24"><rect x="1.0" y="11.9" width="12.1" height="0.8" fill="#fff" fill-opacity=".7"/><rect x="16.5" y="11.8" width="7.5" height="0.8" fill="#fff" fill-opacity=".7"/><rect x="27.5" y="12.0" width="10.7" height="0.8" fill="#fff" fill-opacity=".7"/><rect x="41.7" y="12.8" width="3.3" height="0.8" fill="#fff" fill-opacity=".7"/><rect x="1.0" y="14.7" width="4.4" height="0.8" fill="#fff" fill-opacity=".7"/><rect x="6.7" y="14.7" width="11.8" height="0.8" fill="#fff" fill-opacity=".7"/><rect x="20.0" y="13.9" width="11.5" height="0.8" fill="#fff" fill-opacity=".7"/><rect x="34.5" y="14.5" width="10.2" height="0.8" fill="#fff" fill-opacity=".7"/><rect x="1.0" y="16.0" width="10.7" height="0.8" fill="#fff" fill-opacity=".7"/><rect x="13.2" y="15.4" width="8.4" height="0.8" fill="#fff" fill-opacity=".7"/><rect x="24.0" y="15.8" width="6.0" height="0.8" fill="#fff" fill-opacity=".7"/><rect x="33.5" y="16.4" width="11.5" height="0.8" fill="#fff" fill-opacity=".7"/><rect x="8.0" y="17.8" width="2.5" height="0.8" fill="#fff" fill-opacity=".6"/><rect x="42.9" y="19.7" width="2.5" height="0.8" fill="#fff" fill-opacity=".6"/><rect x="9.2" y="18.3" width="1.9" height="0.8" fill="#fff" fill-opacity=".6"/><rect x="1.4" y="19.5" width="2.8" height="0.8" fill="#fff" fill-opacity=".6"/><rect x="43.1" y="17.7" width="3.0" height="0.8" fill="#fff" fill-opacity=".6"/><rect x="39.8" y="17.6" width="2.6" height="0.8" fill="#fff" fill-opacity=".6"/><rect x="23.2" y="17.7" width="2.8" height="0.8" fill="#fff" fill-opacity=".6"/><rect x="2.3" y="20.1" width="1.6" height="0.8" fill="#fff" fill-opacity=".6"/><rect x="43.2" y="19.0" width="2.0" height="0.8" fill="#fff" fill-opacity=".6"/></svg>
</div>
<div class="reg" style="left:745px;top:176px;width:47px;height:24px;background:#27a55c">
<div class="rl">Inst 3</div>
<svg class="a" style="left:0;top:0" width="47" height="24"><rect x="1.0" y="12.4" width="9.4" height="0.8" fill="#fff" fill-opacity=".7"/><rect x="12.2" y="12.0" width="12.2" height="0.8" fill="#fff" fill-opacity=".7"/><rect x="25.6" y="12.0" width="6.6" height="0.8" fill="#fff" fill-opacity=".7"/><rect x="35.8" y="12.4" width="6.6" height="0.8" fill="#fff" fill-opacity=".7"/><rect x="1.0" y="14.2" width="11.1" height="0.8" fill="#fff" fill-opacity=".7"/><rect x="14.2" y="14.5" width="7.1" height="0.8" fill="#fff" fill-opacity=".7"/><rect x="24.7" y="13.8" width="12.3" height="0.8" fill="#fff" fill-opacity=".7"/><rect x="39.2" y="14.5" width="5.8" height="0.8" fill="#fff" fill-opacity=".7"/><rect x="1.0" y="15.7" width="5.9" height="0.8" fill="#fff" fill-opacity=".7"/><rect x="9.5" y="15.5" width="11.8" height="0.8" fill="#fff" fill-opacity=".7"/><rect x="24.0" y="16.1" width="11.7" height="0.8" fill="#fff" fill-opacity=".7"/><rect x="38.8" y="16.0" width="5.1" height="0.8" fill="#fff" fill-opacity=".7"/><rect x="24.5" y="20.7" width="2.2" height="0.8" fill="#fff" fill-opacity=".6"/><rect x="34.9" y="19.7" width="2.8" height="0.8" fill="#fff" fill-opacity=".6"/><rect x="31.4" y="21.0" width="1.0" height="0.8" fill="#fff" fill-opacity=".6"/><rect x="33.1" y="18.0" width="2.9" height="0.8" fill="#fff" fill-opacity=".6"/><rect x="6.1" y="18.7" width="1.9" height="0.8" fill="#fff" fill-opacity=".6"/><rect x="16.7" y="18.9" width="1.3" height="0.8" fill="#fff" fill-opacity=".6"/><rect x="11.5" y="18.3" width="2.7" height="0.8" fill="#fff" fill-opacity=".6"/><rect x="5.9" y="18.1" width="2.9" height="0.8" fill="#fff" fill-opacity=".6"/><rect x="5.3" y="18.7" width="1.6" height="0.8" fill="#fff" fill-opacity=".6"/></svg>
</div>
<div class="reg" style="left:793px;top:176px;width:47px;height:24px;background:#27a55c">
<div class="rl">Inst 6</div>
<svg class="a" style="left:0;top:0" width="47" height="24"><rect x="1.0" y="11.9" width="4.8" height="0.8" fill="#fff" fill-opacity=".7"/><rect x="9.1" y="12.7" width="11.6" height="0.8" fill="#fff" fill-opacity=".7"/><rect x="23.3" y="12.9" width="10.7" height="0.8" fill="#fff" fill-opacity=".7"/><rect x="37.5" y="13.2" width="4.3" height="0.8" fill="#fff" fill-opacity=".7"/><rect x="1.0" y="14.0" width="9.6" height="0.8" fill="#fff" fill-opacity=".7"/><rect x="14.3" y="13.6" width="5.8" height="0.8" fill="#fff" fill-opacity=".7"/><rect x="21.3" y="14.1" width="9.3" height="0.8" fill="#fff" fill-opacity=".7"/><rect x="32.5" y="14.9" width="4.8" height="0.8" fill="#fff" fill-opacity=".7"/><rect x="39.0" y="14.9" width="6.0" height="0.8" fill="#fff" fill-opacity=".7"/><rect x="1.0" y="15.5" width="7.3" height="0.8" fill="#fff" fill-opacity=".7"/><rect x="10.2" y="16.7" width="11.9" height="0.8" fill="#fff" fill-opacity=".7"/><rect x="23.7" y="15.9" width="8.1" height="0.8" fill="#fff" fill-opacity=".7"/><rect x="33.1" y="16.1" width="11.9" height="0.8" fill="#fff" fill-opacity=".7"/><rect x="28.9" y="19.2" width="2.0" height="0.8" fill="#fff" fill-opacity=".6"/><rect x="15.7" y="19.2" width="3.0" height="0.8" fill="#fff" fill-opacity=".6"/><rect x="31.4" y="20.6" width="1.5" height="0.8" fill="#fff" fill-opacity=".6"/><rect x="15.7" y="18.3" width="2.6" height="0.8" fill="#fff" fill-opacity=".6"/><rect x="30.7" y="19.0" width="2.9" height="0.8" fill="#fff" fill-opacity=".6"/><rect x="26.3" y="17.1" width="2.5" height="0.8" fill="#fff" fill-opacity=".6"/><rect x="40.8" y="17.5" width="2.7" height="0.8" fill="#fff" fill-opacity=".6"/><rect x="23.4" y="20.4" width="2.2" height="0.8" fill="#fff" fill-opacity=".6"/><rect x="10.1" y="17.6" width="2.3" height="0.8" fill="#fff" fill-opacity=".6"/></svg>
</div>
<div class="reg" style="left:841px;top:176px;width:23px;height:24px;background:#27a55c">
<div class="rl">Inst 1</div>
<svg class="a" style="left:0;top:0" width="23" height="24"><rect x="4.9" y="12.7" width="1.3" height="0.8" fill="#fff" fill-opacity=".6"/><rect x="15.1" y="13.0" width="1.6" height="0.8" fill="#fff" fill-opacity=".6"/><rect x="15.8" y="19.1" width="1.8" height="0.8" fill="#fff" fill-opacity=".6"/><rect x="14.4" y="20.2" width="1.0" height="0.8" fill="#fff" fill-opacity=".6"/><rect x="16.8" y="15.6" width="2.0" height="0.8" fill="#fff" fill-opacity=".6"/><rect x="8.0" y="19.0" width="1.1" height="0.8" fill="#fff" fill-opacity=".6"/><rect x="8.6" y="15.1" width="1.4" height="0.8" fill="#fff" fill-opacity=".6"/><rect x="7.2" y="10.5" width="1.3" height="0.8" fill="#fff" fill-opacity=".6"/><rect x="7.5" y="10.0" width="1.0" height="0.8" fill="#fff" fill-opacity=".6"/><rect x="1.0" y="13.9" width="2.1" height="0.8" fill="#fff" fill-opacity=".8"/><rect x="2.4" y="15.6" width="1.6" height="0.8" fill="#fff" fill-opacity=".8"/><rect x="3.7" y="13.6" width="1.5" height="0.8" fill="#fff" fill-opacity=".8"/><rect x="5.3" y="11.4" width="1.0" height="0.8" fill="#fff" fill-opacity=".8"/><rect x="6.9" y="11.0" width="0.6" height="0.8" fill="#fff" fill-opacity=".8"/><rect x="7.8" y="11.2" width="1.1" height="0.8" fill="#fff" fill-opacity=".8"/><rect x="9.5" y="12.3" width="1.2" height="0.8" fill="#fff" fill-opacity=".8"/><rect x="10.9" y="11.6" width="0.8" height="0.8" fill="#fff" fill-opacity=".8"/><rect x="12.6" y="12.1" width="1.2" height="0.8" fill="#fff" fill-opacity=".8"/><rect x="13.8" y="13.8" width="0.7" height="0.8" fill="#fff" fill-opacity=".8"/><rect x="14.9" y="15.4" width="0.9" height="0.8" fill="#fff" fill-opacity=".8"/><rect x="16.7" y="14.1" width="1.0" height="0.8" fill="#fff" fill-opacity=".8"/><rect x="18.3" y="15.8" width="1.6" height="0.8" fill="#fff" fill-opacity=".8"/><rect x="19.1" y="14.7" width="1.9" height="0.8" fill="#fff" fill-opacity=".8"/></svg>
</div>
<div class="reg" style="left:865px;top:176px;width:23px;height:24px;background:#27a55c">
<div class="rl">Inst 1</div>
<svg class="a" style="left:0;top:0" width="23" height="24"><rect x="16.0" y="13.7" width="1.8" height="0.8" fill="#fff" fill-opacity=".6"/><rect x="17.6" y="20.5" width="1.8" height="0.8" fill="#fff" fill-opacity=".6"/><rect x="13.7" y="17.5" width="2.0" height="0.8" fill="#fff" fill-opacity=".6"/><rect x="4.5" y="20.2" width="1.1" height="0.8" fill="#fff" fill-opacity=".6"/><rect x="16.4" y="17.5" width="1.2" height="0.8" fill="#fff" fill-opacity=".6"/><rect x="9.9" y="11.6" width="1.4" height="0.8" fill="#fff" fill-opacity=".6"/><rect x="3.0" y="19.9" width="1.7" height="0.8" fill="#fff" fill-opacity=".6"/><rect x="6.4" y="21.2" width="1.6" height="0.8" fill="#fff" fill-opacity=".6"/><rect x="13.9" y="21.2" width="1.3" height="0.8" fill="#fff" fill-opacity=".6"/><rect x="0.6" y="13.5" width="0.9" height="0.8" fill="#fff" fill-opacity=".8"/><rect x="2.5" y="14.2" width="1.3" height="0.8" fill="#fff" fill-opacity=".8"/><rect x="3.4" y="14.3" width="1.4" height="0.8" fill="#fff" fill-opacity=".8"/><rect x="5.3" y="15.3" width="1.3" height="0.8" fill="#fff" fill-opacity=".8"/><rect x="6.7" y="15.9" width="1.2" height="0.8" fill="#fff" fill-opacity=".8"/><rect x="7.9" y="15.5" width="1.6" height="0.8" fill="#fff" fill-opacity=".8"/><rect x="9.4" y="14.6" width="1.2" height="0.8" fill="#fff" fill-opacity=".8"/><rect x="11.0" y="13.2" width="1.9" height="0.8" fill="#fff" fill-opacity=".8"/><rect x="12.5" y="12.5" width="2.1" height="0.8" fill="#fff" fill-opacity=".8"/><rect x="13.5" y="12.2" width="0.8" height="0.8" fill="#fff" fill-opacity=".8"/><rect x="15.0" y="13.6" width="1.1" height="0.8" fill="#fff" fill-opacity=".8"/><rect x="16.5" y="12.9" width="1.8" height="0.8" fill="#fff" fill-opacity=".8"/><rect x="18.2" y="12.7" width="1.5" height="0.8" fill="#fff" fill-opacity=".8"/><rect x="19.8" y="10.9" width="1.6" height="0.8" fill="#fff" fill-opacity=".8"/></svg>
</div>
<div class="reg" style="left:198px;top:201px;width:48px;height:24px;background:#2d79b0">
<div class="rl">Inst 6</div>
<svg class="a" style="left:0;top:0" width="48" height="24"><rect x="1.0" y="17.6" width="5.6" height="0.8" fill="#fff" fill-opacity=".75"/><rect x="7.2" y="18.0" width="5.7" height="0.8" fill="#fff" fill-opacity=".75"/><rect x="13.5" y="18.0" width="6.2" height="0.8" fill="#fff" fill-opacity=".75"/><rect x="20.3" y="17.6" width="7.4" height="0.8" fill="#fff" fill-opacity=".75"/><rect x="28.3" y="17.3" width="8.6" height="0.8" fill="#fff" fill-opacity=".75"/><rect x="37.5" y="16.9" width="7.3" height="0.8" fill="#fff" fill-opacity=".75"/><rect x="35.8" y="10.8" width="1" height="0.8" fill="#fff" fill-opacity=".6"/><rect x="34.6" y="15.4" width="1" height="0.8" fill="#fff" fill-opacity=".6"/><rect x="41.5" y="15.7" width="1" height="0.8" fill="#fff" fill-opacity=".6"/><rect x="30.7" y="12.1" width="1" height="0.8" fill="#fff" fill-opacity=".6"/><rect x="30.2" y="13.9" width="1" height="0.8" fill="#fff" fill-opacity=".6"/><rect x="34.1" y="11.5" width="1" height="0.8" fill="#fff" fill-opacity=".6"/></svg>
</div>
<div class="reg" style="left:247px;top:201px;width:23px;height:24px;background:#2d79b0">
<div class="rl">initial s</div>
<svg class="a" style="left:0;top:0" width="23" height="24"><rect x="16.4" y="16.8" width="1.3" height="0.8" fill="#fff" fill-opacity=".6"/><rect x="7.1" y="20.5" width="1.6" height="0.8" fill="#fff" fill-opacity=".6"/><rect x="9.2" y="17.3" width="1.0" height="0.8" fill="#fff" fill-opacity=".6"/><rect x="13.0" y="15.2" width="1.2" height="0.8" fill="#fff" fill-opacity=".6"/><rect x="7.6" y="19.9" width="0.9" height="0.8" fill="#fff" fill-opacity=".6"/><rect x="11.6" y="12.2" width="1.6" height="0.8" fill="#fff" fill-opacity=".6"/><rect x="8.9" y="20.5" width="1.5" height="0.8" fill="#fff" fill-opacity=".6"/><rect x="1.3" y="17.8" width="2.0" height="0.8" fill="#fff" fill-opacity=".6"/><rect x="5.6" y="18.8" width="0.8" height="0.8" fill="#fff" fill-opacity=".6"/><rect x="0.9" y="13.4" width="1.7" height="0.8" fill="#fff" fill-opacity=".8"/><rect x="2.1" y="12.1" width="2.2" height="0.8" fill="#fff" fill-opacity=".8"/><rect x="4.0" y="10.3" width="1.1" height="0.8" fill="#fff" fill-opacity=".8"/><rect x="5.3" y="10.0" width="0.6" height="0.8" fill="#fff" fill-opacity=".8"/><rect x="6.7" y="10.7" width="1.6" height="0.8" fill="#fff" fill-opacity=".8"/><rect x="7.8" y="10.2" width="1.2" height="0.8" fill="#fff" fill-opacity=".8"/><rect x="9.1" y="12.2" width="0.6" height="0.8" fill="#fff" fill-opacity=".8"/><rect x="10.6" y="10.8" width="1.1" height="0.8" fill="#fff" fill-opacity=".8"/><rect x="12.5" y="12.0" width="1.0" height="0.8" fill="#fff" fill-opacity=".8"/><rect x="14.0" y="12.8" width="1.8" height="0.8" fill="#fff" fill-opacity=".8"/><rect x="14.9" y="10.8" width="1.8" height="0.8" fill="#fff" fill-opacity=".8"/><rect x="16.5" y="13.2" width="0.6" height="0.8" fill="#fff" fill-opacity=".8"/><rect x="18.2" y="14.3" width="1.1" height="0.8" fill="#fff" fill-opacity=".8"/><rect x="19.1" y="14.1" width="1.0" height="0.8" fill="#fff" fill-opacity=".8"/></svg>
</div>
<div class="reg" style="left:271px;top:201px;width:23px;height:24px;background:#2d79b0">
<div class="rl">initial s</div>
<svg class="a" style="left:0;top:0" width="23" height="24"><rect x="17.8" y="15.8" width="1.1" height="0.8" fill="#fff" fill-opacity=".6"/><rect x="5.8" y="18.7" width="1.5" height="0.8" fill="#fff" fill-opacity=".6"/><rect x="7.2" y="20.7" width="1.4" height="0.8" fill="#fff" fill-opacity=".6"/><rect x="1.6" y="15.6" width="1.8" height="0.8" fill="#fff" fill-opacity=".6"/><rect x="3.8" y="19.4" width="1.7" height="0.8" fill="#fff" fill-opacity=".6"/><rect x="19.9" y="20.8" width="1.2" height="0.8" fill="#fff" fill-opacity=".6"/><rect x="6.6" y="19.7" width="1.2" height="0.8" fill="#fff" fill-opacity=".6"/><rect x="5.2" y="18.3" width="1.4" height="0.8" fill="#fff" fill-opacity=".6"/><rect x="4.0" y="20.4" width="1.2" height="0.8" fill="#fff" fill-opacity=".6"/><rect x="0.8" y="16.9" width="1.8" height="0.8" fill="#fff" fill-opacity=".8"/><rect x="2.1" y="18.1" width="1.3" height="0.8" fill="#fff" fill-opacity=".8"/><rect x="3.4" y="17.9" width="0.8" height="0.8" fill="#fff" fill-opacity=".8"/><rect x="5.5" y="16.8" width="0.9" height="0.8" fill="#fff" fill-opacity=".8"/><rect x="6.5" y="19.3" width="1.4" height="0.8" fill="#fff" fill-opacity=".8"/><rect x="7.9" y="19.6" width="2.2" height="0.8" fill="#fff" fill-opacity=".8"/><rect x="9.5" y="19.6" width="1.2" height="0.8" fill="#fff" fill-opacity=".8"/><rect x="10.6" y="18.9" width="2.2" height="0.8" fill="#fff" fill-opacity=".8"/><rect x="12.4" y="16.7" width="1.6" height="0.8" fill="#fff" fill-opacity=".8"/><rect x="14.0" y="18.9" width="2.1" height="0.8" fill="#fff" fill-opacity=".8"/><rect x="15.0" y="18.7" width="1.4" height="0.8" fill="#fff" fill-opacity=".8"/><rect x="16.7" y="20.4" width="1.9" height="0.8" fill="#fff" fill-opacity=".8"/><rect x="18.3" y="19.5" width="1.4" height="0.8" fill="#fff" fill-opacity=".8"/><rect x="19.3" y="17.3" width="2.2" height="0.8" fill="#fff" fill-opacity=".8"/></svg>
</div>
<div class="reg" style="left:445px;top:201px;width:17px;height:24px;background:#2d79b0">
<div class="rl">Inst</div>
<svg class="a" style="left:0;top:0" width="17" height="24"><rect x="13.6" y="16.3" width="0.9" height="0.8" fill="#fff" fill-opacity=".6"/><rect x="11.6" y="19.4" width="1.9" height="0.8" fill="#fff" fill-opacity=".6"/><rect x="1.1" y="16.4" width="1.7" height="0.8" fill="#fff" fill-opacity=".6"/><rect x="3.7" y="15.9" width="1.7" height="0.8" fill="#fff" fill-opacity=".6"/><rect x="10.3" y="10.8" width="1.5" height="0.8" fill="#fff" fill-opacity=".6"/><rect x="6.4" y="12.4" width="1.6" height="0.8" fill="#fff" fill-opacity=".6"/><rect x="0.9" y="16.6" width="2.0" height="0.8" fill="#fff" fill-opacity=".8"/><rect x="2.4" y="15.2" width="1.6" height="0.8" fill="#fff" fill-opacity=".8"/><rect x="3.3" y="17.7" width="1.2" height="0.8" fill="#fff" fill-opacity=".8"/><rect x="4.9" y="17.1" width="1.3" height="0.8" fill="#fff" fill-opacity=".8"/><rect x="6.7" y="15.5" width="1.4" height="0.8" fill="#fff" fill-opacity=".8"/><rect x="8.0" y="15.3" width="1.0" height="0.8" fill="#fff" fill-opacity=".8"/><rect x="9.5" y="15.4" width="1.5" height="0.8" fill="#fff" fill-opacity=".8"/><rect x="10.4" y="16.4" width="1.5" height="0.8" fill="#fff" fill-opacity=".8"/><rect x="11.8" y="17.0" width="1.3" height="0.8" fill="#fff" fill-opacity=".8"/><rect x="13.2" y="16.8" width="1.0" height="0.8" fill="#fff" fill-opacity=".8"/></svg>
</div>
<div class="reg" style="left:463px;top:201px;width:5px;height:24px;background:#2d79b0">
</div>
<div class="reg" style="left:469px;top:201px;width:17px;height:24px;background:#2d79b0">
<div class="rl">Inst</div>
<svg class="a" style="left:0;top:0" width="17" height="24"><rect x="6.8" y="14.2" width="1.8" height="0.8" fill="#fff" fill-opacity=".6"/><rect x="8.8" y="15.7" width="1.6" height="0.8" fill="#fff" fill-opacity=".6"/><rect x="10.8" y="12.6" width="1.9" height="0.8" fill="#fff" fill-opacity=".6"/><rect x="12.6" y="15.6" width="1.8" height="0.8" fill="#fff" fill-opacity=".6"/><rect x="4.4" y="12.9" width="1.6" height="0.8" fill="#fff" fill-opacity=".6"/><rect x="7.1" y="12.4" width="1.6" height="0.8" fill="#fff" fill-opacity=".6"/><rect x="1.1" y="15.4" width="2.1" height="0.8" fill="#fff" fill-opacity=".8"/><rect x="2.2" y="16.4" width="1.9" height="0.8" fill="#fff" fill-opacity=".8"/><rect x="3.3" y="16.8" width="1.1" height="0.8" fill="#fff" fill-opacity=".8"/><rect x="5.0" y="16.3" width="2.1" height="0.8" fill="#fff" fill-opacity=".8"/><rect x="6.7" y="14.5" width="1.9" height="0.8" fill="#fff" fill-opacity=".8"/><rect x="7.7" y="16.6" width="1.4" height="0.8" fill="#fff" fill-opacity=".8"/><rect x="9.6" y="17.9" width="1.1" height="0.8" fill="#fff" fill-opacity=".8"/><rect x="10.4" y="19.4" width="0.6" height="0.8" fill="#fff" fill-opacity=".8"/><rect x="12.1" y="18.3" width="1.1" height="0.8" fill="#fff" fill-opacity=".8"/><rect x="13.2" y="19.5" width="1.5" height="0.8" fill="#fff" fill-opacity=".8"/></svg>
</div>
<div class="reg" style="left:487px;top:201px;width:5px;height:24px;background:#2d79b0">
</div>
<div class="reg" style="left:493px;top:201px;width:47px;height:24px;background:#2d79b0">
<div class="rl">Inst 6</div>
<svg class="a" style="left:0;top:0" width="47" height="24"><rect x="1.0" y="17.9" width="9.8" height="0.8" fill="#fff" fill-opacity=".75"/><rect x="11.4" y="17.7" width="4.2" height="0.8" fill="#fff" fill-opacity=".75"/><rect x="16.1" y="18.3" width="8.5" height="0.8" fill="#fff" fill-opacity=".75"/><rect x="25.2" y="17.9" width="5.3" height="0.8" fill="#fff" fill-opacity=".75"/><rect x="31.1" y="16.5" width="3.1" height="0.8" fill="#fff" fill-opacity=".75"/><rect x="34.8" y="16.5" width="5.5" height="0.8" fill="#fff" fill-opacity=".75"/><rect x="40.9" y="15.1" width="4.1" height="0.8" fill="#fff" fill-opacity=".75"/><rect x="44.1" y="15.4" width="1" height="0.8" fill="#fff" fill-opacity=".6"/><rect x="31.2" y="15.0" width="1" height="0.8" fill="#fff" fill-opacity=".6"/><rect x="29.3" y="14.2" width="1" height="0.8" fill="#fff" fill-opacity=".6"/><rect x="33.2" y="10.6" width="1" height="0.8" fill="#fff" fill-opacity=".6"/><rect x="25.2" y="10.3" width="1" height="0.8" fill="#fff" fill-opacity=".6"/></svg>
</div>
<div class="reg" style="left:541px;top:201px;width:47px;height:24px;background:#2d79b0">
<div class="rl">Inst 6</div>
<svg class="a" style="left:0;top:0" width="47" height="24"><rect x="1.0" y="18.0" width="3.9" height="0.8" fill="#fff" fill-opacity=".75"/><rect x="5.5" y="18.3" width="4.9" height="0.8" fill="#fff" fill-opacity=".75"/><rect x="11.0" y="18.5" width="6.2" height="0.8" fill="#fff" fill-opacity=".75"/><rect x="17.8" y="17.9" width="6.1" height="0.8" fill="#fff" fill-opacity=".75"/><rect x="24.5" y="17.7" width="6.5" height="0.8" fill="#fff" fill-opacity=".75"/><rect x="31.7" y="19.4" width="6.7" height="0.8" fill="#fff" fill-opacity=".75"/><rect x="38.9" y="16.1" width="6.1" height="0.8" fill="#fff" fill-opacity=".75"/><rect x="25.4" y="11.8" width="1" height="0.8" fill="#fff" fill-opacity=".6"/><rect x="36.1" y="12.8" width="1" height="0.8" fill="#fff" fill-opacity=".6"/><rect x="38.8" y="13.3" width="1" height="0.8" fill="#fff" fill-opacity=".6"/><rect x="25.1" y="14.5" width="1" height="0.8" fill="#fff" fill-opacity=".6"/><rect x="34.3" y="14.5" width="1" height="0.8" fill="#fff" fill-opacity=".6"/></svg>
</div>
<div class="reg" style="left:613px;top:201px;width:5px;height:24px;background:#2d79b0">
</div>
<div class="reg" style="left:637px;top:201px;width:47px;height:24px;background:#2d79b0">
<div class="rl">Inst 6</div>
<svg class="a" style="left:0;top:0" width="47" height="24"><rect x="1.0" y="17.5" width="6.7" height="0.8" fill="#fff" fill-opacity=".75"/><rect x="8.3" y="17.7" width="4.6" height="0.8" fill="#fff" fill-opacity=".75"/><rect x="13.4" y="17.2" width="8.0" height="0.8" fill="#fff" fill-opacity=".75"/><rect x="22.0" y="17.3" width="7.3" height="0.8" fill="#fff" fill-opacity=".75"/><rect x="29.9" y="16.6" width="8.0" height="0.8" fill="#fff" fill-opacity=".75"/><rect x="38.5" y="15.7" width="6.5" height="0.8" fill="#fff" fill-opacity=".75"/><rect x="28.6" y="14.2" width="1" height="0.8" fill="#fff" fill-opacity=".6"/><rect x="35.3" y="15.8" width="1" height="0.8" fill="#fff" fill-opacity=".6"/><rect x="26.3" y="14.5" width="1" height="0.8" fill="#fff" fill-opacity=".6"/><rect x="30.0" y="13.2" width="1" height="0.8" fill="#fff" fill-opacity=".6"/><rect x="37.1" y="12.6" width="1" height="0.8" fill="#fff" fill-opacity=".6"/></svg>
</div>
<div class="reg" style="left:745px;top:201px;width:47px;height:24px;background:#2d79b0">
<div class="rl">Inst 3</div>
<svg class="a" style="left:0;top:0" width="47" height="24"><rect x="1.0" y="12.0" width="10.4" height="0.8" fill="#fff" fill-opacity=".7"/><rect x="12.6" y="13.2" width="4.5" height="0.8" fill="#fff" fill-opacity=".7"/><rect x="19.6" y="12.7" width="6.5" height="0.8" fill="#fff" fill-opacity=".7"/><rect x="29.1" y="12.5" width="5.4" height="0.8" fill="#fff" fill-opacity=".7"/><rect x="37.1" y="12.3" width="7.3" height="0.8" fill="#fff" fill-opacity=".7"/><rect x="1.0" y="13.5" width="4.0" height="0.8" fill="#fff" fill-opacity=".7"/><rect x="6.8" y="14.3" width="11.4" height="0.8" fill="#fff" fill-opacity=".7"/><rect x="22.2" y="14.7" width="10.1" height="0.8" fill="#fff" fill-opacity=".7"/><rect x="34.8" y="13.6" width="7.3" height="0.8" fill="#fff" fill-opacity=".7"/><rect x="43.3" y="13.5" width="1.7" height="0.8" fill="#fff" fill-opacity=".7"/><rect x="1.0" y="16.2" width="12.4" height="0.8" fill="#fff" fill-opacity=".7"/><rect x="17.4" y="15.7" width="9.4" height="0.8" fill="#fff" fill-opacity=".7"/><rect x="28.8" y="15.3" width="4.3" height="0.8" fill="#fff" fill-opacity=".7"/><rect x="36.8" y="16.5" width="8.2" height="0.8" fill="#fff" fill-opacity=".7"/><rect x="36.1" y="19.2" width="1.7" height="0.8" fill="#fff" fill-opacity=".6"/><rect x="14.9" y="19.5" width="2.8" height="0.8" fill="#fff" fill-opacity=".6"/><rect x="3.9" y="18.7" width="1.8" height="0.8" fill="#fff" fill-opacity=".6"/><rect x="35.1" y="19.6" width="1.3" height="0.8" fill="#fff" fill-opacity=".6"/><rect x="18.9" y="17.5" width="2.4" height="0.8" fill="#fff" fill-opacity=".6"/><rect x="2.1" y="18.8" width="1.0" height="0.8" fill="#fff" fill-opacity=".6"/><rect x="37.7" y="20.9" width="2.1" height="0.8" fill="#fff" fill-opacity=".6"/><rect x="32.8" y="17.9" width="1.3" height="0.8" fill="#fff" fill-opacity=".6"/><rect x="15.3" y="17.0" width="1.4" height="0.8" fill="#fff" fill-opacity=".6"/></svg>
</div>
<div class="reg" style="left:889px;top:201px;width:6px;height:24px;background:#2d79b0">
</div>
<div class="reg" style="left:397px;top:226px;width:23px;height:24px;background:#7438c0">
<div class="rl">Inst 9</div>
<svg class="a" style="left:0;top:0" width="23" height="24"><rect x="2.0" y="14.5" width="1" height="0.7" fill="#fff" fill-opacity=".65"/><rect x="4.0" y="14.5" width="1" height="0.7" fill="#fff" fill-opacity=".65"/><rect x="6.0" y="14.5" width="1" height="0.7" fill="#fff" fill-opacity=".65"/><rect x="8.0" y="14.5" width="1" height="0.7" fill="#fff" fill-opacity=".65"/><rect x="10.0" y="14.5" width="1" height="0.7" fill="#fff" fill-opacity=".65"/><rect x="12.0" y="14.5" width="1" height="0.7" fill="#fff" fill-opacity=".65"/><rect x="14.0" y="14.5" width="1" height="0.7" fill="#fff" fill-opacity=".65"/><rect x="18.0" y="17" width="2" height="0.7" fill="#fff" fill-opacity=".6"/><rect x="20.0" y="15" width="1" height="2" fill="#fff" fill-opacity=".6"/></svg>
</div>
<div class="reg" style="left:421px;top:226px;width:23px;height:24px;background:#7438c0">
<div class="rl">Inst 9</div>
<svg class="a" style="left:0;top:0" width="23" height="24"><rect x="2.0" y="14.5" width="1" height="0.7" fill="#fff" fill-opacity=".65"/><rect x="4.0" y="14.5" width="1" height="0.7" fill="#fff" fill-opacity=".65"/><rect x="6.0" y="14.5" width="1" height="0.7" fill="#fff" fill-opacity=".65"/><rect x="8.0" y="14.5" width="1" height="0.7" fill="#fff" fill-opacity=".65"/><rect x="10.0" y="14.5" width="1" height="0.7" fill="#fff" fill-opacity=".65"/><rect x="12.0" y="14.5" width="1" height="0.7" fill="#fff" fill-opacity=".65"/><rect x="14.0" y="14.5" width="1" height="0.7" fill="#fff" fill-opacity=".65"/><rect x="18.0" y="17" width="2" height="0.7" fill="#fff" fill-opacity=".6"/><rect x="20.0" y="15" width="1" height="2" fill="#fff" fill-opacity=".6"/></svg>
</div>
<div class="reg" style="left:289px;top:251px;width:5px;height:24px;background:#2a8a6c">
</div>
<div class="reg" style="left:691px;top:251px;width:6px;height:24px;background:#2a8a6c">
</div>
<div class="reg" style="left:836px;top:251px;width:6px;height:24px;background:#2a8a6c">
</div>
<div class="reg" style="left:445px;top:277px;width:47px;height:23px;background:#b21f90">
<div class="rl">Inst 11</div>
<svg class="a" style="left:0;top:0" width="47" height="23"><rect x="2.0" y="14.5" width="1" height="0.7" fill="#fff" fill-opacity=".65"/><rect x="4.0" y="14.5" width="1" height="0.7" fill="#fff" fill-opacity=".65"/><rect x="6.0" y="14.5" width="1" height="0.7" fill="#fff" fill-opacity=".65"/><rect x="8.0" y="14.5" width="1" height="0.7" fill="#fff" fill-opacity=".65"/><rect x="10.0" y="14.5" width="1" height="0.7" fill="#fff" fill-opacity=".65"/><rect x="12.0" y="14.5" width="1" height="0.7" fill="#fff" fill-opacity=".65"/><rect x="14.0" y="14.5" width="1" height="0.7" fill="#fff" fill-opacity=".65"/><rect x="16.0" y="14.5" width="1" height="0.7" fill="#fff" fill-opacity=".65"/><rect x="18.0" y="14.5" width="1" height="0.7" fill="#fff" fill-opacity=".65"/><rect x="20.0" y="14.5" width="1" height="0.7" fill="#fff" fill-opacity=".65"/><rect x="22.0" y="14.5" width="1" height="0.7" fill="#fff" fill-opacity=".65"/><rect x="24.0" y="14.5" width="1" height="0.7" fill="#fff" fill-opacity=".65"/><rect x="26.0" y="14.5" width="1" height="0.7" fill="#fff" fill-opacity=".65"/><rect x="28.0" y="14.5" width="1" height="0.7" fill="#fff" fill-opacity=".65"/><rect x="30.0" y="14.5" width="1" height="0.7" fill="#fff" fill-opacity=".65"/><rect x="32.0" y="14.5" width="1" height="0.7" fill="#fff" fill-opacity=".65"/><rect x="34.0" y="14.5" width="1" height="0.7" fill="#fff" fill-opacity=".65"/><rect x="36.0" y="14.5" width="1" height="0.7" fill="#fff" fill-opacity=".65"/><rect x="38.0" y="14.5" width="1" height="0.7" fill="#fff" fill-opacity=".65"/><rect x="42.0" y="17" width="2" height="0.7" fill="#fff" fill-opacity=".6"/><rect x="44.0" y="15" width="1" height="2" fill="#fff" fill-opacity=".6"/></svg>
</div>
<div class="reg" style="left:493px;top:277px;width:47px;height:23px;background:#b21f90">
<div class="rl">Inst 11</div>
<svg class="a" style="left:0;top:0" width="47" height="23"><rect x="2.0" y="14.5" width="1" height="0.7" fill="#fff" fill-opacity=".65"/><rect x="4.0" y="14.5" width="1" height="0.7" fill="#fff" fill-opacity=".65"/><rect x="6.0" y="14.5" width="1" height="0.7" fill="#fff" fill-opacity=".65"/><rect x="8.0" y="14.5" width="1" height="0.7" fill="#fff" fill-opacity=".65"/><rect x="10.0" y="14.5" width="1" height="0.7" fill="#fff" fill-opacity=".65"/><rect x="12.0" y="14.5" width="1" height="0.7" fill="#fff" fill-opacity=".65"/><rect x="14.0" y="14.5" width="1" height="0.7" fill="#fff" fill-opacity=".65"/><rect x="16.0" y="14.5" width="1" height="0.7" fill="#fff" fill-opacity=".65"/><rect x="18.0" y="14.5" width="1" height="0.7" fill="#fff" fill-opacity=".65"/><rect x="20.0" y="14.5" width="1" height="0.7" fill="#fff" fill-opacity=".65"/><rect x="22.0" y="14.5" width="1" height="0.7" fill="#fff" fill-opacity=".65"/><rect x="24.0" y="14.5" width="1" height="0.7" fill="#fff" fill-opacity=".65"/><rect x="26.0" y="14.5" width="1" height="0.7" fill="#fff" fill-opacity=".65"/><rect x="28.0" y="14.5" width="1" height="0.7" fill="#fff" fill-opacity=".65"/><rect x="30.0" y="14.5" width="1" height="0.7" fill="#fff" fill-opacity=".65"/><rect x="32.0" y="14.5" width="1" height="0.7" fill="#fff" fill-opacity=".65"/><rect x="34.0" y="14.5" width="1" height="0.7" fill="#fff" fill-opacity=".65"/><rect x="36.0" y="14.5" width="1" height="0.7" fill="#fff" fill-opacity=".65"/><rect x="38.0" y="14.5" width="1" height="0.7" fill="#fff" fill-opacity=".65"/><rect x="42.0" y="17" width="2" height="0.7" fill="#fff" fill-opacity=".6"/><rect x="44.0" y="15" width="1" height="2" fill="#fff" fill-opacity=".6"/></svg>
</div>
<div class="reg" style="left:637px;top:277px;width:47px;height:23px;background:#b21f90">
<div class="rl">Inst 11</div>
</div>
<div class="reg" style="left:319px;top:302px;width:23px;height:24px;background:#6436a2">
<div class="rl">Tension</div>
<svg class="a" style="left:0;top:0" width="23" height="24"><rect x="1.5" y="13.7" width="19.0" height="0.8" fill="#fff" fill-opacity=".55"/><rect x="1.5" y="16.2" width="13.8" height="0.8" fill="#fff" fill-opacity=".4"/><rect x="18.0" y="11.7" width="1.5" height="2" fill="#fff" fill-opacity=".5"/></svg>
</div>
<div class="reg" style="left:343px;top:302px;width:23px;height:24px;background:#6436a2">
<div class="rl">Tension</div>
<svg class="a" style="left:0;top:0" width="23" height="24"><rect x="1.5" y="14.6" width="19.0" height="0.8" fill="#fff" fill-opacity=".55"/><rect x="1.5" y="17.1" width="13.8" height="0.8" fill="#fff" fill-opacity=".4"/><rect x="18.0" y="12.6" width="1.5" height="2" fill="#fff" fill-opacity=".5"/></svg>
</div>
<div class="reg" style="left:367px;top:302px;width:23px;height:24px;background:#6436a2">
<div class="rl">Tension</div>
<svg class="a" style="left:0;top:0" width="23" height="24"><rect x="1.5" y="17.5" width="19.0" height="0.8" fill="#fff" fill-opacity=".55"/><rect x="1.5" y="20.0" width="13.8" height="0.8" fill="#fff" fill-opacity=".4"/><rect x="18.0" y="15.5" width="1.5" height="2" fill="#fff" fill-opacity=".5"/></svg>
</div>
<div class="reg" style="left:391px;top:302px;width:5px;height:24px;background:#6436a2">
</div>
<div class="reg" style="left:445px;top:302px;width:47px;height:24px;background:#6436a2">
<div class="rl">Tension</div>
<svg class="a" style="left:0;top:0" width="47" height="24"><rect x="23.5" y="0" width="23.5" height="24" fill="#000" fill-opacity=".1"/></svg>
</div>
<div class="reg" style="left:517px;top:302px;width:23px;height:24px;background:#6436a2">
<div class="rl">Tension</div>
</div>
<div class="reg" style="left:589px;top:302px;width:23px;height:24px;background:#6436a2">
<div class="rl">Tension</div>
<svg class="a" style="left:0;top:0" width="23" height="24"><rect x="1.5" y="17.9" width="19.0" height="0.8" fill="#fff" fill-opacity=".55"/><rect x="1.5" y="20.4" width="13.8" height="0.8" fill="#fff" fill-opacity=".4"/><rect x="18.0" y="15.9" width="1.5" height="2" fill="#fff" fill-opacity=".5"/></svg>
</div>
<div class="reg" style="left:613px;top:302px;width:23px;height:24px;background:#6436a2">
<div class="rl">Tension</div>
<svg class="a" style="left:0;top:0" width="23" height="24"><rect x="1.5" y="17.4" width="19.0" height="0.8" fill="#fff" fill-opacity=".55"/><rect x="18.0" y="15.4" width="1.5" height="2" fill="#fff" fill-opacity=".5"/></svg>
</div>
<div class="reg" style="left:637px;top:302px;width:23px;height:24px;background:#6436a2">
<div class="rl">Tension</div>
<svg class="a" style="left:0;top:0" width="23" height="24"><rect x="1.5" y="16.2" width="19.0" height="0.8" fill="#fff" fill-opacity=".55"/><rect x="18.0" y="14.2" width="1.5" height="2" fill="#fff" fill-opacity=".5"/></svg>
</div>
<div class="reg" style="left:661px;top:302px;width:23px;height:24px;background:#6436a2">
<div class="rl">Tension</div>
<svg class="a" style="left:0;top:0" width="23" height="24"><rect x="1.5" y="15.5" width="19.0" height="0.8" fill="#fff" fill-opacity=".55"/><rect x="18.0" y="13.5" width="1.5" height="2" fill="#fff" fill-opacity=".5"/></svg>
</div>
<div class="reg" style="left:723px;top:302px;width:21px;height:24px;background:#6436a2">
<div class="rl">Tensio</div>
</div>
<div class="reg" style="left:745px;top:302px;width:23px;height:24px;background:#6436a2">
<div class="rl">Tension</div>
</div>
<div class="reg" style="left:769px;top:302px;width:23px;height:24px;background:#6436a2">
<div class="rl">Tension</div>
</div>
<div class="reg" style="left:445px;top:327px;width:23px;height:24px;background:#2c4170">
<div class="rl">Inst 31</div>
<svg class="a" style="left:0;top:0" width="23" height="24"><rect x="4.6" y="19.1" width="1.5" height="0.7" fill="#fff" fill-opacity=".4"/><rect x="14.4" y="15.0" width="1.5" height="0.7" fill="#fff" fill-opacity=".4"/><rect x="9.7" y="15.0" width="1.5" height="0.7" fill="#fff" fill-opacity=".4"/><rect x="3.5" y="12.7" width="1.5" height="0.7" fill="#fff" fill-opacity=".4"/></svg>
</div>
<div class="reg" style="left:469px;top:327px;width:23px;height:24px;background:#2c4170">
<div class="rl">Inst 31</div>
<svg class="a" style="left:0;top:0" width="23" height="24"><rect x="17.5" y="20.0" width="1.5" height="0.7" fill="#fff" fill-opacity=".4"/><rect x="15.4" y="17.4" width="1.5" height="0.7" fill="#fff" fill-opacity=".4"/><rect x="7.7" y="17.3" width="1.5" height="0.7" fill="#fff" fill-opacity=".4"/><rect x="17.6" y="17.1" width="1.5" height="0.7" fill="#fff" fill-opacity=".4"/></svg>
</div>
<div class="reg" style="left:445px;top:352px;width:11px;height:24px;background:#6c1c66">
<div class="rl">Ins</div>
<svg class="a" style="left:0;top:0" width="11" height="24"><rect x="5.4" y="16.4" width="1.5" height="0.7" fill="#fff" fill-opacity=".4"/><rect x="7.1" y="15.5" width="1.5" height="0.7" fill="#fff" fill-opacity=".4"/><rect x="3.2" y="17.1" width="1.5" height="0.7" fill="#fff" fill-opacity=".4"/><rect x="5.2" y="18.8" width="1.5" height="0.7" fill="#fff" fill-opacity=".4"/></svg>
</div>
<div class="reg" style="left:469px;top:352px;width:11px;height:24px;background:#6c1c66">
<div class="rl">Ins</div>
<svg class="a" style="left:0;top:0" width="11" height="24"><rect x="3.8" y="17.6" width="1.5" height="0.7" fill="#fff" fill-opacity=".4"/><rect x="2.4" y="15.4" width="1.5" height="0.7" fill="#fff" fill-opacity=".4"/><rect x="5.4" y="11.1" width="1.5" height="0.7" fill="#fff" fill-opacity=".4"/><rect x="5.9" y="11.1" width="1.5" height="0.7" fill="#fff" fill-opacity=".4"/></svg>
</div>
<div class="reg" style="left:343px;top:377px;width:47px;height:24px;background:#3a3574">
<div class="rl">Inst 6</div>
<svg class="a" style="left:0;top:0" width="47" height="24"><rect x="8.1" y="19.8" width="1.3" height="0.8" fill="#fff" fill-opacity=".6"/><rect x="7.1" y="11.4" width="1.5" height="0.8" fill="#fff" fill-opacity=".6"/><rect x="10.5" y="11.2" width="0.9" height="0.8" fill="#fff" fill-opacity=".6"/><rect x="2.5" y="15.7" width="1.3" height="0.8" fill="#fff" fill-opacity=".6"/><rect x="32.4" y="18.7" width="0.9" height="0.8" fill="#fff" fill-opacity=".6"/><rect x="12.1" y="15.7" width="0.9" height="0.8" fill="#fff" fill-opacity=".6"/><rect x="4.3" y="18.6" width="0.9" height="0.8" fill="#fff" fill-opacity=".6"/><rect x="11.7" y="15.1" width="1.4" height="0.8" fill="#fff" fill-opacity=".6"/><rect x="30.7" y="17.1" width="1.4" height="0.8" fill="#fff" fill-opacity=".6"/><rect x="41.8" y="20.5" width="1.8" height="0.8" fill="#fff" fill-opacity=".6"/><rect x="27.2" y="13.2" width="1.6" height="0.8" fill="#fff" fill-opacity=".6"/><rect x="4.3" y="14.2" width="1.4" height="0.8" fill="#fff" fill-opacity=".6"/><rect x="24.4" y="21.2" width="1.2" height="0.8" fill="#fff" fill-opacity=".6"/><rect x="16.4" y="21.3" width="1.3" height="0.8" fill="#fff" fill-opacity=".6"/><rect x="2.9" y="17.6" width="1.2" height="0.8" fill="#fff" fill-opacity=".6"/><rect x="30.4" y="12.5" width="1.9" height="0.8" fill="#fff" fill-opacity=".6"/><rect x="15.9" y="19.0" width="0.9" height="0.8" fill="#fff" fill-opacity=".6"/><rect x="36.5" y="21.4" width="2.0" height="0.8" fill="#fff" fill-opacity=".6"/><rect x="0.6" y="13.2" width="1.0" height="0.8" fill="#fff" fill-opacity=".8"/><rect x="2.7" y="15.5" width="1.6" height="0.8" fill="#fff" fill-opacity=".8"/><rect x="4.0" y="17.8" width="0.9" height="0.8" fill="#fff" fill-opacity=".8"/><rect x="5.4" y="16.8" width="1.0" height="0.8" fill="#fff" fill-opacity=".8"/><rect x="6.8" y="14.4" width="0.8" height="0.8" fill="#fff" fill-opacity=".8"/><rect x="8.5" y="14.6" width="1.1" height="0.8" fill="#fff" fill-opacity=".8"/><rect x="9.6" y="16.7" width="1.8" height="0.8" fill="#fff" fill-opacity=".8"/><rect x="11.1" y="17.7" width="2.0" height="0.8" fill="#fff" fill-opacity=".8"/><rect x="13.2" y="16.5" width="2.0" height="0.8" fill="#fff" fill-opacity=".8"/><rect x="14.3" y="18.2" width="0.8" height="0.8" fill="#fff" fill-opacity=".8"/><rect x="15.9" y="20.1" width="1.8" height="0.8" fill="#fff" fill-opacity=".8"/><rect x="17.5" y="20.4" width="1.1" height="0.8" fill="#fff" fill-opacity=".8"/><rect x="19.2" y="19.0" width="1.2" height="0.8" fill="#fff" fill-opacity=".8"/><rect x="20.8" y="20.4" width="2.0" height="0.8" fill="#fff" fill-opacity=".8"/><rect x="21.9" y="20.4" width="2.2" height="0.8" fill="#fff" fill-opacity=".8"/><rect x="23.8" y="20.4" width="0.9" height="0.8" fill="#fff" fill-opacity=".8"/><rect x="25.3" y="19.6" width="1.9" height="0.8" fill="#fff" fill-opacity=".8"/><rect x="26.4" y="18.0" width="1.2" height="0.8" fill="#fff" fill-opacity=".8"/><rect x="28.5" y="18.1" width="1.8" height="0.8" fill="#fff" fill-opacity=".8"/><rect x="29.7" y="18.6" width="1.2" height="0.8" fill="#fff" fill-opacity=".8"/><rect x="31.2" y="16.8" width="0.9" height="0.8" fill="#fff" fill-opacity=".8"/><rect x="32.9" y="16.0" width="1.9" height="0.8" fill="#fff" fill-opacity=".8"/><rect x="34.4" y="18.2" width="1.7" height="0.8" fill="#fff" fill-opacity=".8"/><rect x="35.8" y="19.1" width="2.2" height="0.8" fill="#fff" fill-opacity=".8"/><rect x="37.6" y="18.4" width="1.7" height="0.8" fill="#fff" fill-opacity=".8"/><rect x="38.5" y="20.4" width="0.9" height="0.8" fill="#fff" fill-opacity=".8"/><rect x="40.3" y="19.8" width="0.9" height="0.8" fill="#fff" fill-opacity=".8"/><rect x="42.1" y="19.6" width="1.4" height="0.8" fill="#fff" fill-opacity=".8"/><rect x="43.6" y="20.0" width="2.0" height="0.8" fill="#fff" fill-opacity=".8"/></svg>
</div>
<div class="a" style="left:828.3px;top:75px;width:1.2px;height:259px;background:#c8c8c8"></div>
<svg class="a" style="left:824px;top:65px" width="10" height="9" viewBox="0 0 10 9"><path d="M1 0.5h8v5l-4 3-4-3z" fill="#d0d0d0"/></svg>
<svg class="a" style="left:362px;top:460px" width="9" height="11" viewBox="0 0 9 11"><path d="M1.3 1v7l1.7-1.5 1.2 2.6 1.3-.6-1.2-2.5h2.4z" fill="#000" stroke="#eee" stroke-width=".8"/></svg>
<div class="a" style="left:211px;top:535px;width:305px;height:3px;border-radius:2px;background:#3c3c3c"></div>
<div class="a" style="left:515.3px;top:333.4px;width:395.7px;height:205.6px;background:#1c1a1a;border-radius:5px;border:1px solid #3c3a3a"></div>
<div class="a" style="left:518.7px;top:337.6px;width:6.6px;height:6.6px;border-radius:50%;background:#d8d8d8"></div>
<div class="t" style="left:515.3px;width:395.7px;text-align:center;top:337.6px;font-size:7px;font-weight:bold;color:#a9a9a9">Stereo Out: User Default</div>
<svg class="a" style="left:898px;top:336px" width="10" height="9" viewBox="0 0 10 9"><rect x="1.5" y="1.5" width="7" height="6" rx="1" fill="none" stroke="#bdbdbd" stroke-width=".9"/><path d="M1.5 3.3h7M4 5.3h2" stroke="#bdbdbd" stroke-width=".8"/></svg>
<div class="a" style="left:516.5px;top:348.2px;width:390px;height:172.3px;background:#151a24"></div>
<div class="t" style="left:517.3px;width:393px;text-align:center;top:523.6px;font-size:10.8px;color:#a4a4a4">MultiMeter</div>
<svg class="a" style="left:0;top:0" width="960" height="540" viewBox="0 0 960 540"><text x="533" y="361.6" font-size="4.4" fill="#5a6270" text-anchor="end" font-family="Liberation Sans">dB</text><text x="533" y="373.1" font-size="4.4" fill="#5a6270" text-anchor="end" font-family="Liberation Sans">5</text><line x1="538" y1="371.5" x2="812" y2="371.5" stroke="#1d2330" stroke-width=".6"/><text x="533" y="384.6" font-size="4.4" fill="#5a6270" text-anchor="end" font-family="Liberation Sans">0</text><line x1="538" y1="383" x2="812" y2="383" stroke="#1d2330" stroke-width=".6"/><text x="533" y="395.6" font-size="4.4" fill="#5a6270" text-anchor="end" font-family="Liberation Sans">-5</text><line x1="538" y1="394" x2="812" y2="394" stroke="#1d2330" stroke-width=".6"/><text x="533" y="406.6" font-size="4.4" fill="#5a6270" text-anchor="end" font-family="Liberation Sans">-10</text><line x1="538" y1="405" x2="812" y2="405" stroke="#1d2330" stroke-width=".6"/><text x="533" y="418.1" font-size="4.4" fill="#5a6270" text-anchor="end" font-family="Liberation Sans">-15</text><line x1="538" y1="416.5" x2="812" y2="416.5" stroke="#1d2330" stroke-width=".6"/><text x="533" y="429.1" font-size="4.4" fill="#5a6270" text-anchor="end" font-family="Liberation Sans">-20</text><line x1="538" y1="427.5" x2="812" y2="427.5" stroke="#1d2330" stroke-width=".6"/><text x="533" y="440.1" font-size="4.4" fill="#5a6270" text-anchor="end" font-family="Liberation Sans">-25</text><line x1="538" y1="438.5" x2="812" y2="438.5" stroke="#1d2330" stroke-width=".6"/><text x="533" y="451.6" font-size="4.4" fill="#5a6270" text-anchor="end" font-family="Liberation Sans">-30</text><line x1="538" y1="450" x2="812" y2="450" stroke="#1d2330" stroke-width=".6"/><text x="533" y="462.6" font-size="4.4" fill="#5a6270" text-anchor="end" font-family="Liberation Sans">-35</text><line x1="538" y1="461" x2="812" y2="461" stroke="#1d2330" stroke-width=".6"/><text x="533" y="474.1" font-size="4.4" fill="#5a6270" text-anchor="end" font-family="Liberation Sans">-40</text><line x1="538" y1="472.5" x2="812" y2="472.5" stroke="#1d2330" stroke-width=".6"/><text x="533" y="485.6" font-size="4.4" fill="#5a6270" text-anchor="end" font-family="Liberation Sans">-45</text><line x1="538" y1="484" x2="812" y2="484" stroke="#1d2330" stroke-width=".6"/><text x="533" y="496.6" font-size="4.4" fill="#5a6270" text-anchor="end" font-family="Liberation Sans">-50</text><line x1="538" y1="495" x2="812" y2="495" stroke="#1d2330" stroke-width=".6"/><text x="533" y="507.6" font-size="4.4" fill="#5a6270" text-anchor="end" font-family="Liberation Sans">-55</text><line x1="538" y1="506" x2="812" y2="506" stroke="#1d2330" stroke-width=".6"/><text x="541.7" y="513.5" font-size="4.2" fill="#5a6270" text-anchor="middle" font-family="Liberation Sans">16</text><text x="567.5" y="513.5" font-size="4.2" fill="#5a6270" text-anchor="middle" font-family="Liberation Sans">31</text><text x="593" y="513.5" font-size="4.2" fill="#5a6270" text-anchor="middle" font-family="Liberation Sans">62</text><text x="618.6" y="513.5" font-size="4.2" fill="#5a6270" text-anchor="middle" font-family="Liberation Sans">125</text><text x="644" y="513.5" font-size="4.2" fill="#5a6270" text-anchor="middle" font-family="Liberation Sans">250</text><text x="669.5" y="513.5" font-size="4.2" fill="#5a6270" text-anchor="middle" font-family="Liberation Sans">500</text><text x="695" y="513.5" font-size="4.2" fill="#5a6270" text-anchor="middle" font-family="Liberation Sans">1 k</text><text x="720.5" y="513.5" font-size="4.2" fill="#5a6270" text-anchor="middle" font-family="Liberation Sans">2 k</text><text x="746" y="513.5" font-size="4.2" fill="#5a6270" text-anchor="middle" font-family="Liberation Sans">4 k</text><text x="771.5" y="513.5" font-size="4.2" fill="#5a6270" text-anchor="middle" font-family="Liberation Sans">8 k</text><text x="797" y="513.5" font-size="4.2" fill="#5a6270" text-anchor="middle" font-family="Liberation Sans">16 k</text><text x="813" y="513.5" font-size="4.2" fill="#5a6270" text-anchor="middle" font-family="Liberation Sans">Hz</text><text x="543.3" y="362.2" font-size="5.8" fill="#5d6572" font-family="Liberation Sans">Top:</text><text x="556.3" y="362.2" font-size="5.8" fill="#8fd08a" font-family="Liberation Sans" font-weight="bold">+5 dB</text><text x="581" y="362.2" font-size="5.8" fill="#5d6572" font-family="Liberation Sans">Range:</text><text x="601" y="362.2" font-size="5.8" fill="#8fd08a" font-family="Liberation Sans" font-weight="bold">60 dB</text><rect x="548.50" y="485.0" width="3.56" height="21.0" fill="#4a8fba"/><rect x="552.76" y="467.5" width="3.56" height="38.5" fill="#4a8fba"/><rect x="557.01" y="470.0" width="3.56" height="36.0" fill="#4a8fba"/><rect x="561.27" y="468.0" width="3.56" height="38.0" fill="#4a8fba"/><rect x="565.52" y="458.3" width="3.56" height="47.7" fill="#4a8fba"/><rect x="569.78" y="452.5" width="3.56" height="53.5" fill="#4a8fba"/><rect x="574.04" y="453.0" width="3.56" height="53.0" fill="#4a8fba"/><rect x="578.29" y="463.0" width="3.56" height="43.0" fill="#4a8fba"/><rect x="582.55" y="458.7" width="3.56" height="47.3" fill="#4a8fba"/><rect x="586.80" y="440.0" width="3.56" height="66.0" fill="#4a8fba"/><rect x="591.06" y="435.8" width="3.56" height="70.2" fill="#4a8fba"/><rect x="595.32" y="430.3" width="3.56" height="75.7" fill="#4a8fba"/><rect x="599.57" y="425.8" width="3.56" height="80.2" fill="#4a8fba"/><rect x="603.83" y="423.3" width="3.56" height="82.7" fill="#4a8fba"/><rect x="608.08" y="436.3" width="3.56" height="69.7" fill="#4a8fba"/><rect x="612.34" y="438.0" width="3.56" height="68.0" fill="#4a8fba"/><rect x="616.60" y="408.0" width="3.56" height="98.0" fill="#4a8fba"/><rect x="620.85" y="417.2" width="3.56" height="88.8" fill="#4a8fba"/><rect x="625.11" y="453.3" width="3.56" height="52.7" fill="#4a8fba"/><rect x="629.36" y="459.5" width="3.56" height="46.5" fill="#4a8fba"/><rect x="633.62" y="462.0" width="3.56" height="44.0" fill="#4a8fba"/><rect x="637.88" y="466.3" width="3.56" height="39.7" fill="#4a8fba"/><rect x="642.13" y="440.8" width="3.56" height="65.2" fill="#4a8fba"/><rect x="646.39" y="450.0" width="3.56" height="56.0" fill="#4a8fba"/><rect x="650.64" y="455.8" width="3.56" height="50.2" fill="#4a8fba"/><rect x="654.90" y="449.7" width="3.56" height="56.3" fill="#4a8fba"/><rect x="659.16" y="433.0" width="3.56" height="73.0" fill="#4a8fba"/><rect x="663.41" y="453.8" width="3.56" height="52.2" fill="#4a8fba"/><rect x="667.67" y="443.0" width="3.56" height="63.0" fill="#4a8fba"/><rect x="671.92" y="449.5" width="3.56" height="56.5" fill="#4a8fba"/><rect x="676.18" y="455.5" width="3.56" height="50.5" fill="#4a8fba"/><rect x="680.44" y="452.0" width="3.56" height="54.0" fill="#4a8fba"/><rect x="684.69" y="442.8" width="3.56" height="63.2" fill="#4a8fba"/><rect x="688.95" y="440.3" width="3.56" height="65.7" fill="#4a8fba"/><rect x="693.20" y="425.8" width="3.56" height="80.2" fill="#4a8fba"/><rect x="697.46" y="432.0" width="3.56" height="74.0" fill="#4a8fba"/><rect x="701.72" y="439.2" width="3.56" height="66.8" fill="#4a8fba"/><rect x="705.97" y="447.0" width="3.56" height="59.0" fill="#4a8fba"/><rect x="710.23" y="445.0" width="3.56" height="61.0" fill="#4a8fba"/><rect x="714.48" y="444.7" width="3.56" height="61.3" fill="#4a8fba"/><rect x="718.74" y="432.5" width="3.56" height="73.5" fill="#4a8fba"/><rect x="723.00" y="437.5" width="3.56" height="68.5" fill="#4a8fba"/><rect x="727.25" y="444.2" width="3.56" height="61.8" fill="#4a8fba"/><rect x="731.51" y="447.5" width="3.56" height="58.5" fill="#4a8fba"/><rect x="735.76" y="433.0" width="3.56" height="73.0" fill="#4a8fba"/><rect x="740.02" y="440.8" width="3.56" height="65.2" fill="#4a8fba"/><rect x="744.28" y="434.2" width="3.56" height="71.8" fill="#4a8fba"/><rect x="748.53" y="435.8" width="3.56" height="70.2" fill="#4a8fba"/><rect x="752.79" y="432.8" width="3.56" height="73.2" fill="#4a8fba"/><rect x="757.04" y="438.8" width="3.56" height="67.2" fill="#4a8fba"/><rect x="761.30" y="438.0" width="3.56" height="68.0" fill="#4a8fba"/><rect x="765.56" y="435.3" width="3.56" height="70.7" fill="#4a8fba"/><rect x="769.81" y="441.3" width="3.56" height="64.7" fill="#4a8fba"/><rect x="774.07" y="441.3" width="3.56" height="64.7" fill="#4a8fba"/><rect x="778.32" y="442.8" width="3.56" height="63.2" fill="#4a8fba"/><rect x="782.58" y="442.2" width="3.56" height="63.8" fill="#4a8fba"/><rect x="786.84" y="443.7" width="3.56" height="62.3" fill="#4a8fba"/><rect x="791.09" y="447.5" width="3.56" height="58.5" fill="#4a8fba"/><rect x="795.35" y="451.3" width="3.56" height="54.7" fill="#4a8fba"/><rect x="799.60" y="454.7" width="3.56" height="51.3" fill="#4a8fba"/><rect x="803.86" y="473.7" width="3.56" height="32.3" fill="#4a8fba"/><text x="862.5" y="371.5" font-size="4.2" fill="#5a6270" text-anchor="middle" font-family="Liberation Sans">dB</text><text x="862.5" y="380.9" font-size="4.2" fill="#5a6270" text-anchor="middle" font-family="Liberation Sans">6</text><text x="862.5" y="389.5" font-size="4.2" fill="#5a6270" text-anchor="middle" font-family="Liberation Sans">3</text><text x="862.5" y="397.1" font-size="4.2" fill="#5a6270" text-anchor="middle" font-family="Liberation Sans">0</text><text x="862.5" y="405.5" font-size="4.2" fill="#5a6270" text-anchor="middle" font-family="Liberation Sans">3</text><text x="862.5" y="413.5" font-size="4.2" fill="#5a6270" text-anchor="middle" font-family="Liberation Sans">6</text><text x="862.5" y="421.5" font-size="4.2" fill="#5a6270" text-anchor="middle" font-family="Liberation Sans">9</text><text x="862.5" y="429.3" font-size="4.2" fill="#5a6270" text-anchor="middle" font-family="Liberation Sans">12</text><text x="862.5" y="437.5" font-size="4.2" fill="#5a6270" text-anchor="middle" font-family="Liberation Sans">16</text><text x="862.5" y="445.5" font-size="4.2" fill="#5a6270" text-anchor="middle" font-family="Liberation Sans">20</text><text x="862.5" y="453.5" font-size="4.2" fill="#5a6270" text-anchor="middle" font-family="Liberation Sans">24</text><text x="862.5" y="461.5" font-size="4.2" fill="#5a6270" text-anchor="middle" font-family="Liberation Sans">30</text><text x="862.5" y="469.5" font-size="4.2" fill="#5a6270" text-anchor="middle" font-family="Liberation Sans">40</text><text x="862.5" y="477.5" font-size="4.2" fill="#5a6270" text-anchor="middle" font-family="Liberation Sans">50</text><text x="862.5" y="485.5" font-size="4.2" fill="#5a6270" text-anchor="middle" font-family="Liberation Sans">60</text><line x1="836" y1="395.6" x2="857" y2="395.6" stroke="#2a3140" stroke-width=".6"/><line x1="868" y1="395.6" x2="902" y2="395.6" stroke="#2a3140" stroke-width=".6"/><text x="844.5" y="362" font-size="6.2" fill="#b4bac4" text-anchor="middle" font-family="Liberation Sans">LUFS</text><text x="876.5" y="362" font-size="6.2" fill="#b4bac4" text-anchor="middle" font-family="Liberation Sans">L</text><text x="896.5" y="362" font-size="6.2" fill="#b4bac4" text-anchor="middle" font-family="Liberation Sans">R</text><text x="836" y="368.8" font-size="3.8" fill="#4a5260" font-family="Liberation Sans">LU-I</text><text x="856" y="368.8" font-size="3.9" fill="#e8c020" text-anchor="end" font-family="Liberation Sans" font-weight="bold">-5.8</text><text x="836" y="375.2" font-size="3.8" fill="#4a5260" font-family="Liberation Sans">LU-S</text><text x="856" y="375.2" font-size="3.9" fill="#e8c020" text-anchor="end" font-family="Liberation Sans" font-weight="bold">-3.4</text><text x="879.5" y="368.8" font-size="3.9" fill="#e8c020" text-anchor="end" font-family="Liberation Sans" font-weight="bold">0.0</text><text x="882" y="368.8" font-size="3.8" fill="#4a5260" font-family="Liberation Sans">Peak</text><text x="902" y="368.8" font-size="3.9" fill="#e8c020" text-anchor="end" font-family="Liberation Sans" font-weight="bold">0.0</text><text x="879.5" y="375.2" font-size="3.9" fill="#e8c020" text-anchor="end" font-family="Liberation Sans" font-weight="bold">-5.0</text><text x="882" y="375.2" font-size="3.8" fill="#4a5260" font-family="Liberation Sans">RMS</text><text x="902" y="375.2" font-size="3.9" fill="#e8c020" text-anchor="end" font-family="Liberation Sans" font-weight="bold">-5.0</text><rect x="843" y="404" width="6" height="27" fill="#f2c413"/><rect x="843" y="431" width="6" height="52.80000000000001" fill="#4a8fba"/><rect x="875" y="395" width="3.3999999999999773" height="32.80000000000001" fill="#f2c413"/><rect x="875" y="427.8" width="3.3999999999999773" height="56.0" fill="#4a8fba"/><rect x="878.6" y="411.4" width="3.8999999999999773" height="16.400000000000034" fill="#f2c413"/><rect x="878.6" y="427.8" width="3.8999999999999773" height="56.0" fill="#4a8fba"/><rect x="890.7" y="411.4" width="3.5" height="16.400000000000034" fill="#f2c413"/><rect x="890.7" y="427.8" width="3.5" height="56.0" fill="#4a8fba"/><rect x="894.4" y="395" width="3.6000000000000227" height="32.80000000000001" fill="#f2c413"/><rect x="894.4" y="427.8" width="3.6000000000000227" height="56.0" fill="#4a8fba"/><line x1="836" y1="431" x2="856" y2="431" stroke="#8a8a3a" stroke-width=".6" stroke-opacity=".6"/><line x1="870" y1="427.8" x2="902" y2="427.8" stroke="#8a8a3a" stroke-width=".6" stroke-opacity=".6"/><text x="868" y="502.2" font-size="4" fill="#4a5260" text-anchor="middle" font-family="Liberation Sans">CORRELATION</text><defs><linearGradient id="cg" x1="0" x2="1"><stop offset="0" stop-color="#b0402a"/><stop offset=".5" stop-color="#8a7a2a"/><stop offset="1" stop-color="#3aa83a"/></linearGradient></defs><rect x="836" y="513" width="65" height=".8" fill="url(#cg)" fill-opacity=".55"/><rect x="891.6" y="506.5" width="1.1" height="6" fill="#e0e0e0"/></svg>
</div></body></html>
